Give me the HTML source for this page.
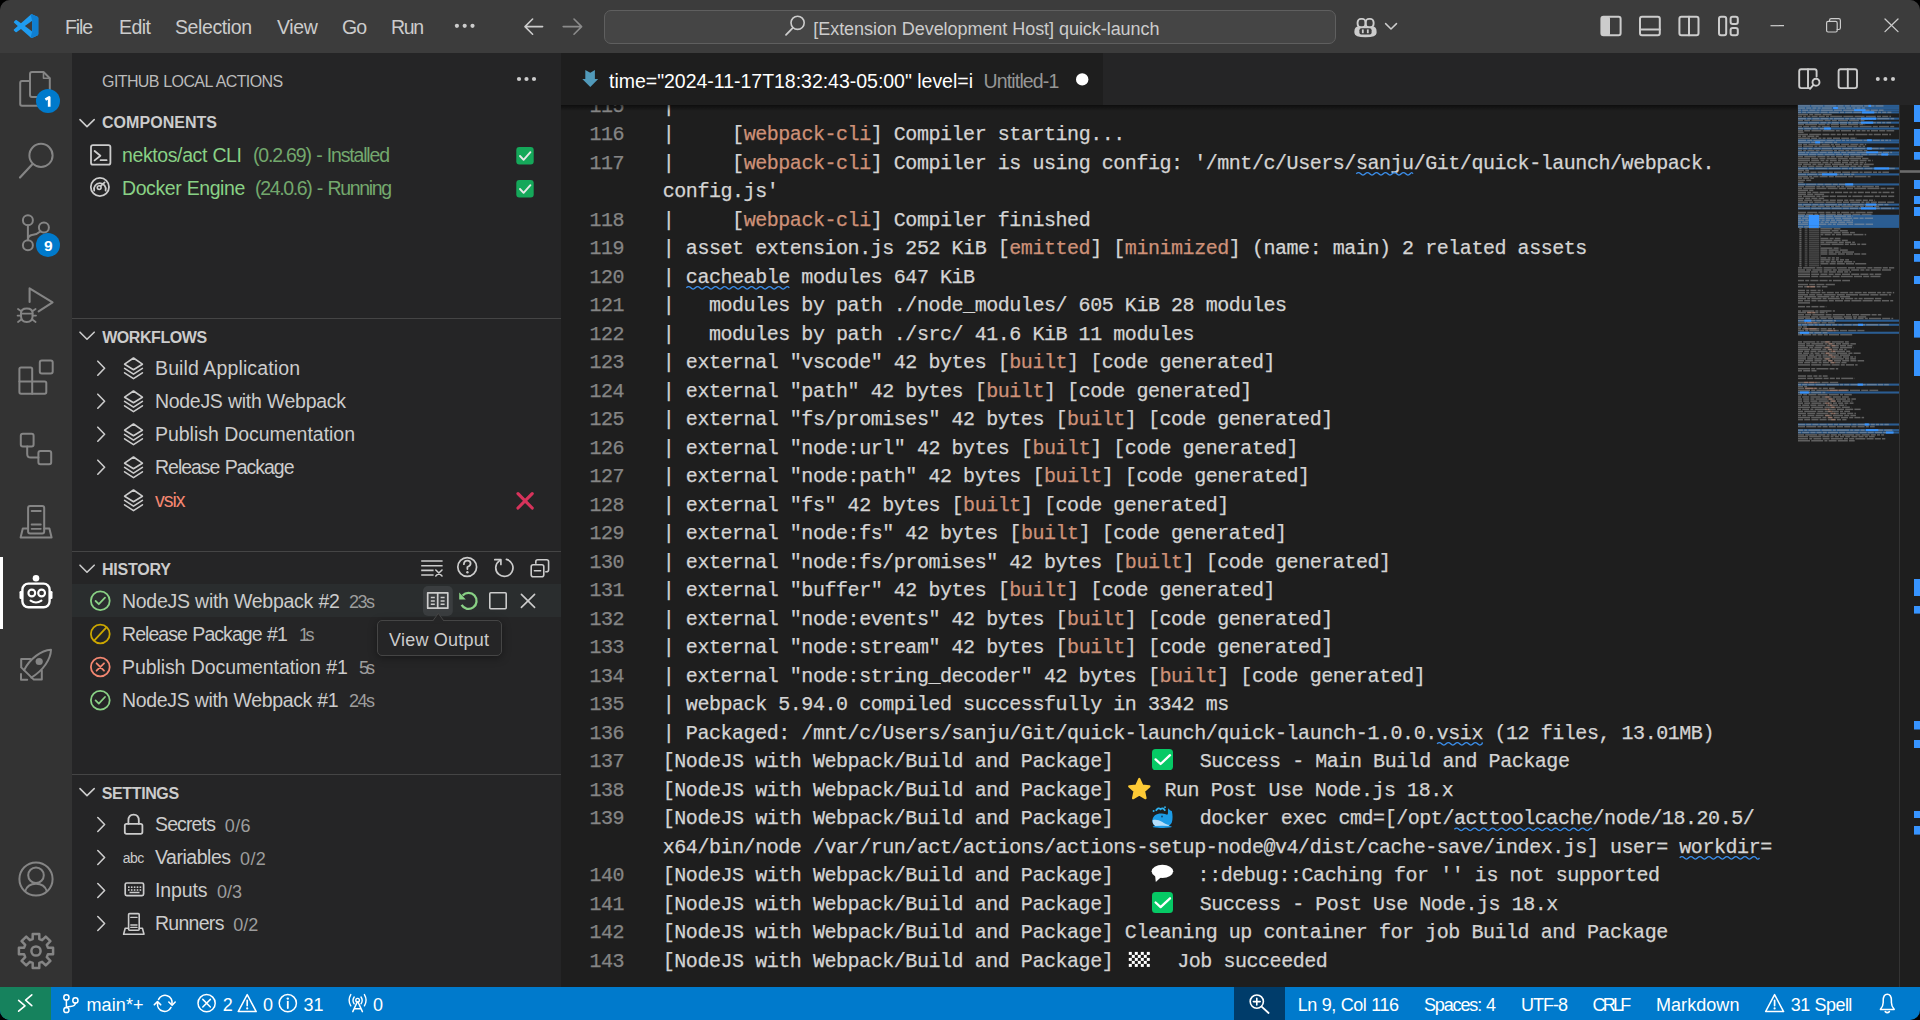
<!DOCTYPE html>
<html><head><meta charset="utf-8"><title>VS Code</title>
<style>
html,body{margin:0;padding:0;background:#000;width:1920px;height:1020px;overflow:hidden}
#win{position:absolute;left:0;top:0;width:1920px;height:1020px;overflow:hidden;border-radius:10px;background:#1e1e1e}
.r{position:absolute;box-sizing:border-box}
.t{position:absolute;white-space:pre;font-family:"Liberation Sans",sans-serif}
.ed{position:absolute;left:561px;top:105px;width:1236px;height:882px;overflow:hidden}
.ln{position:absolute;white-space:pre;font-family:"Liberation Mono",monospace;-webkit-text-stroke:0.25px currentColor}
.o{color:#ce9178}
.sq{text-decoration:underline wavy #3794ff;text-decoration-thickness:1px;text-underline-offset:3px}
svg{position:absolute;overflow:visible}
</style></head><body><div id="win">
<div class="r" style="left:0;top:0;width:1920px;height:53px;background:#3c3c3c"></div>
<div class="r" style="left:0;top:53px;width:72px;height:934px;background:#333333"></div>
<div class="r" style="left:72px;top:53px;width:489px;height:934px;background:#252526"></div>
<div class="r" style="left:561px;top:53px;width:1359px;height:52px;background:#252526"></div>
<div class="r" style="left:561px;top:53px;width:542px;height:52px;background:#1e1e1e"></div>
<div class="r" style="left:561px;top:105px;width:1359px;height:882px;background:#1e1e1e"></div>
<div class="r" style="left:0;top:987px;width:1920px;height:33px;background:#007acc"></div>
<div class="r" style="left:0;top:987px;width:51px;height:33px;background:#16825d"></div>
<div class="r" style="left:1234px;top:987px;width:51px;height:33px;background:#003c6a"></div>
<div class="t" style="left:65.00px;top:18.49px;font-size:19.50px;line-height:19.50px;color:#cccccc;letter-spacing:-1.148px;word-spacing:0.000px;">File</div>
<div class="t" style="left:119.00px;top:18.49px;font-size:19.50px;line-height:19.50px;color:#cccccc;letter-spacing:-0.530px;word-spacing:0.000px;">Edit</div>
<div class="t" style="left:175.00px;top:18.49px;font-size:19.50px;line-height:19.50px;color:#cccccc;letter-spacing:-0.405px;word-spacing:0.000px;">Selection</div>
<div class="t" style="left:277.00px;top:18.49px;font-size:19.50px;line-height:19.50px;color:#cccccc;letter-spacing:-0.325px;word-spacing:0.000px;">View</div>
<div class="t" style="left:342.00px;top:18.49px;font-size:19.50px;line-height:19.50px;color:#cccccc;letter-spacing:-1.032px;word-spacing:0.000px;">Go</div>
<div class="t" style="left:391.00px;top:18.49px;font-size:19.50px;line-height:19.50px;color:#cccccc;letter-spacing:-1.391px;word-spacing:0.000px;">Run</div>
<div class="r" style="left:604px;top:9.5px;width:732px;height:34px;background:#454545;border:1px solid #5f5f5f;border-radius:7px"></div>
<div class="t" style="left:813.30px;top:19.66px;font-size:18.00px;line-height:18.00px;color:#cccccc;letter-spacing:-0.054px;word-spacing:0.054px;">[Extension Development Host] quick-launch</div>
<div class="t" style="left:102.10px;top:73.85px;font-size:16.00px;line-height:16.00px;color:#bbbbbb;letter-spacing:-0.614px;word-spacing:0.614px;">GITHUB LOCAL ACTIONS</div>
<div class="t" style="left:102.00px;top:115.35px;font-size:16.00px;line-height:16.00px;color:#cccccc;letter-spacing:0.036px;word-spacing:0.000px;font-weight:700;">COMPONENTS</div>
<div class="t" style="left:122.00px;top:145.69px;font-size:19.50px;line-height:19.50px;color:#89d185;letter-spacing:-0.388px;word-spacing:0.388px;">nektos/act CLI</div>
<div class="t" style="left:253.00px;top:145.69px;font-size:19.50px;line-height:19.50px;color:#73a86d;letter-spacing:-1.186px;word-spacing:1.186px;">(0.2.69) - Installed</div>
<div class="t" style="left:122.00px;top:179.39px;font-size:19.50px;line-height:19.50px;color:#89d185;letter-spacing:-0.420px;word-spacing:0.420px;">Docker Engine</div>
<div class="t" style="left:255.00px;top:179.39px;font-size:19.50px;line-height:19.50px;color:#73a86d;letter-spacing:-1.345px;word-spacing:1.345px;">(24.0.6) - Running</div>
<div class="r" style="left:72px;top:318px;width:489px;height:1px;background:#454545"></div>
<div class="t" style="left:102.20px;top:329.85px;font-size:16.00px;line-height:16.00px;color:#cccccc;letter-spacing:-0.430px;word-spacing:0.000px;font-weight:700;">WORKFLOWS</div>
<div class="t" style="left:155.00px;top:358.89px;font-size:19.50px;line-height:19.50px;color:#cccccc;letter-spacing:0.128px;word-spacing:-0.128px;">Build Application</div>
<div class="t" style="left:155.00px;top:391.89px;font-size:19.50px;line-height:19.50px;color:#cccccc;letter-spacing:-0.305px;word-spacing:0.305px;">NodeJS with Webpack</div>
<div class="t" style="left:155.00px;top:424.89px;font-size:19.50px;line-height:19.50px;color:#cccccc;letter-spacing:-0.029px;word-spacing:0.029px;">Publish Documentation</div>
<div class="t" style="left:155.00px;top:457.89px;font-size:19.50px;line-height:19.50px;color:#cccccc;letter-spacing:-1.025px;word-spacing:1.025px;">Release Package</div>
<div class="t" style="left:155.00px;top:490.89px;font-size:19.50px;line-height:19.50px;color:#f48771;letter-spacing:-0.996px;word-spacing:0.000px;">vsix</div>
<div class="r" style="left:72px;top:551px;width:489px;height:1px;background:#454545"></div>
<div class="t" style="left:102.00px;top:562.05px;font-size:16.00px;line-height:16.00px;color:#cccccc;letter-spacing:-0.207px;word-spacing:0.000px;font-weight:700;">HISTORY</div>
<div class="r" style="left:72px;top:584px;width:489px;height:33px;background:#2a2d2e"></div>
<div class="t" style="left:122.00px;top:591.89px;font-size:19.50px;line-height:19.50px;color:#cccccc;letter-spacing:-0.285px;word-spacing:0.285px;">NodeJS with Webpack #2</div>
<div class="t" style="left:349.00px;top:593.16px;font-size:18.00px;line-height:18.00px;color:#9d9d9d;letter-spacing:-1.513px;word-spacing:0.000px;">23s</div>
<div class="t" style="left:122.00px;top:624.89px;font-size:19.50px;line-height:19.50px;color:#cccccc;letter-spacing:-0.946px;word-spacing:0.946px;">Release Package #1</div>
<div class="t" style="left:299.00px;top:626.16px;font-size:18.00px;line-height:18.00px;color:#9d9d9d;letter-spacing:-3.490px;word-spacing:0.000px;">1s</div>
<div class="t" style="left:122.00px;top:657.89px;font-size:19.50px;line-height:19.50px;color:#cccccc;letter-spacing:-0.089px;word-spacing:0.089px;">Publish Documentation #1</div>
<div class="t" style="left:359.00px;top:659.16px;font-size:18.00px;line-height:18.00px;color:#9d9d9d;letter-spacing:-2.990px;word-spacing:0.000px;">5s</div>
<div class="t" style="left:122.00px;top:690.89px;font-size:19.50px;line-height:19.50px;color:#cccccc;letter-spacing:-0.346px;word-spacing:0.346px;">NodeJS with Webpack #1</div>
<div class="t" style="left:349.00px;top:692.16px;font-size:18.00px;line-height:18.00px;color:#9d9d9d;letter-spacing:-1.513px;word-spacing:0.000px;">24s</div>
<div class="r" style="left:72px;top:774px;width:489px;height:1px;background:#454545"></div>
<div class="t" style="left:101.80px;top:785.85px;font-size:16.00px;line-height:16.00px;color:#cccccc;letter-spacing:-0.386px;word-spacing:0.000px;font-weight:700;">SETTINGS</div>
<div class="t" style="left:155.00px;top:815.29px;font-size:19.50px;line-height:19.50px;color:#cccccc;letter-spacing:-0.868px;word-spacing:0.000px;">Secrets</div>
<div class="t" style="left:224.80px;top:816.56px;font-size:18.00px;line-height:18.00px;color:#9d9d9d;letter-spacing:0.340px;word-spacing:0.000px;">0/6</div>
<div class="t" style="left:155.00px;top:848.29px;font-size:19.50px;line-height:19.50px;color:#cccccc;letter-spacing:-0.482px;word-spacing:0.000px;">Variables</div>
<div class="t" style="left:240.00px;top:849.56px;font-size:18.00px;line-height:18.00px;color:#9d9d9d;letter-spacing:0.390px;word-spacing:0.000px;">0/2</div>
<div class="t" style="left:155.00px;top:881.29px;font-size:19.50px;line-height:19.50px;color:#cccccc;letter-spacing:-0.108px;word-spacing:0.000px;">Inputs</div>
<div class="t" style="left:217.00px;top:882.56px;font-size:18.00px;line-height:18.00px;color:#9d9d9d;letter-spacing:-0.010px;word-spacing:0.000px;">0/3</div>
<div class="t" style="left:155.00px;top:914.29px;font-size:19.50px;line-height:19.50px;color:#cccccc;letter-spacing:-0.718px;word-spacing:0.000px;">Runners</div>
<div class="t" style="left:233.20px;top:915.56px;font-size:18.00px;line-height:18.00px;color:#9d9d9d;letter-spacing:0.040px;word-spacing:0.000px;">0/2</div>
<div class="t" style="left:122.70px;top:851.05px;font-size:14.00px;line-height:14.00px;color:#cccccc;letter-spacing:-0.487px;word-spacing:0.000px;">abc</div>
<div class="t" style="left:609.00px;top:71.69px;font-size:19.50px;line-height:19.50px;color:#ffffff;letter-spacing:-0.020px;word-spacing:0.020px;">time=&quot;2024-11-17T18:32:43-05:00&quot; level=i</div>
<div class="t" style="left:983.60px;top:71.69px;font-size:19.50px;line-height:19.50px;color:#969696;letter-spacing:-0.862px;word-spacing:0.000px;">Untitled-1</div>
<div class="t" style="left:86.50px;top:995.56px;font-size:18.00px;line-height:18.00px;color:#ffffff;letter-spacing:0.096px;word-spacing:0.000px;">main*+</div>
<div class="t" style="left:222.80px;top:995.56px;font-size:18.00px;line-height:18.00px;color:#ffffff;letter-spacing:0.000px;word-spacing:0.000px;">2</div>
<div class="t" style="left:263.00px;top:995.56px;font-size:18.00px;line-height:18.00px;color:#ffffff;letter-spacing:0.000px;word-spacing:0.000px;">0</div>
<div class="t" style="left:303.60px;top:995.56px;font-size:18.00px;line-height:18.00px;color:#ffffff;letter-spacing:0.000px;word-spacing:0.000px;">31</div>
<div class="t" style="left:373.00px;top:995.56px;font-size:18.00px;line-height:18.00px;color:#ffffff;letter-spacing:0.000px;word-spacing:0.000px;">0</div>
<div class="t" style="left:1297.80px;top:995.56px;font-size:18.00px;line-height:18.00px;color:#ffffff;letter-spacing:-0.506px;word-spacing:0.506px;">Ln 9, Col 116</div>
<div class="t" style="left:1424.00px;top:995.56px;font-size:18.00px;line-height:18.00px;color:#ffffff;letter-spacing:-1.151px;word-spacing:1.151px;">Spaces: 4</div>
<div class="t" style="left:1521.00px;top:995.56px;font-size:18.00px;line-height:18.00px;color:#ffffff;letter-spacing:-0.996px;word-spacing:0.000px;">UTF-8</div>
<div class="t" style="left:1592.40px;top:995.56px;font-size:18.00px;line-height:18.00px;color:#ffffff;letter-spacing:-2.675px;word-spacing:0.000px;">CRLF</div>
<div class="t" style="left:1656.00px;top:995.56px;font-size:18.00px;line-height:18.00px;color:#ffffff;letter-spacing:0.054px;word-spacing:0.000px;">Markdown</div>
<div class="t" style="left:1790.70px;top:995.56px;font-size:18.00px;line-height:18.00px;color:#ffffff;letter-spacing:-0.562px;word-spacing:0.562px;">31 Spell</div>
<div class="ed"><div class="ln" style="left:28.50px;top:-12.17px;font-size:20.0px;line-height:28.5px;letter-spacing:-0.450px;color:#858585">115</div>
<div class="ln" style="left:101.75px;top:-12.17px;font-size:20.0px;line-height:28.5px;letter-spacing:-0.450px;color:#d4d4d4">|</div>
<div class="ln" style="left:28.50px;top:16.33px;font-size:20.0px;line-height:28.5px;letter-spacing:-0.450px;color:#858585">116</div>
<div class="ln" style="left:101.75px;top:16.33px;font-size:20.0px;line-height:28.5px;letter-spacing:-0.450px;color:#d4d4d4">|     [<span class="o">webpack-cli</span>] Compiler starting...</div>
<div class="ln" style="left:28.50px;top:44.83px;font-size:20.0px;line-height:28.5px;letter-spacing:-0.450px;color:#858585">117</div>
<div class="ln" style="left:101.75px;top:44.83px;font-size:20.0px;line-height:28.5px;letter-spacing:-0.450px;color:#d4d4d4">|     [<span class="o">webpack-cli</span>] Compiler is using config: &#x27;/mnt/c/Users/sanju/Git/quick-launch/webpack.</div>
<div class="ln" style="left:101.75px;top:73.33px;font-size:20.0px;line-height:28.5px;letter-spacing:-0.450px;color:#d4d4d4">config.js&#x27;</div>
<div class="ln" style="left:28.50px;top:101.83px;font-size:20.0px;line-height:28.5px;letter-spacing:-0.450px;color:#858585">118</div>
<div class="ln" style="left:101.75px;top:101.83px;font-size:20.0px;line-height:28.5px;letter-spacing:-0.450px;color:#d4d4d4">|     [<span class="o">webpack-cli</span>] Compiler finished</div>
<div class="ln" style="left:28.50px;top:130.33px;font-size:20.0px;line-height:28.5px;letter-spacing:-0.450px;color:#858585">119</div>
<div class="ln" style="left:101.75px;top:130.33px;font-size:20.0px;line-height:28.5px;letter-spacing:-0.450px;color:#d4d4d4">| asset extension.js 252 KiB [<span class="o">emitted</span>] [<span class="o">minimized</span>] (name: main) 2 related assets</div>
<div class="ln" style="left:28.50px;top:158.83px;font-size:20.0px;line-height:28.5px;letter-spacing:-0.450px;color:#858585">120</div>
<div class="ln" style="left:101.75px;top:158.83px;font-size:20.0px;line-height:28.5px;letter-spacing:-0.450px;color:#d4d4d4">| cacheable modules 647 KiB</div>
<div class="ln" style="left:28.50px;top:187.33px;font-size:20.0px;line-height:28.5px;letter-spacing:-0.450px;color:#858585">121</div>
<div class="ln" style="left:101.75px;top:187.33px;font-size:20.0px;line-height:28.5px;letter-spacing:-0.450px;color:#d4d4d4">|   modules by path ./node_modules/ 605 KiB 28 modules</div>
<div class="ln" style="left:28.50px;top:215.83px;font-size:20.0px;line-height:28.5px;letter-spacing:-0.450px;color:#858585">122</div>
<div class="ln" style="left:101.75px;top:215.83px;font-size:20.0px;line-height:28.5px;letter-spacing:-0.450px;color:#d4d4d4">|   modules by path ./src/ 41.6 KiB 11 modules</div>
<div class="ln" style="left:28.50px;top:244.33px;font-size:20.0px;line-height:28.5px;letter-spacing:-0.450px;color:#858585">123</div>
<div class="ln" style="left:101.75px;top:244.33px;font-size:20.0px;line-height:28.5px;letter-spacing:-0.450px;color:#d4d4d4">| external &quot;vscode&quot; 42 bytes [<span class="o">built</span>] [code generated]</div>
<div class="ln" style="left:28.50px;top:272.83px;font-size:20.0px;line-height:28.5px;letter-spacing:-0.450px;color:#858585">124</div>
<div class="ln" style="left:101.75px;top:272.83px;font-size:20.0px;line-height:28.5px;letter-spacing:-0.450px;color:#d4d4d4">| external &quot;path&quot; 42 bytes [<span class="o">built</span>] [code generated]</div>
<div class="ln" style="left:28.50px;top:301.33px;font-size:20.0px;line-height:28.5px;letter-spacing:-0.450px;color:#858585">125</div>
<div class="ln" style="left:101.75px;top:301.33px;font-size:20.0px;line-height:28.5px;letter-spacing:-0.450px;color:#d4d4d4">| external &quot;fs/promises&quot; 42 bytes [<span class="o">built</span>] [code generated]</div>
<div class="ln" style="left:28.50px;top:329.83px;font-size:20.0px;line-height:28.5px;letter-spacing:-0.450px;color:#858585">126</div>
<div class="ln" style="left:101.75px;top:329.83px;font-size:20.0px;line-height:28.5px;letter-spacing:-0.450px;color:#d4d4d4">| external &quot;node:url&quot; 42 bytes [<span class="o">built</span>] [code generated]</div>
<div class="ln" style="left:28.50px;top:358.33px;font-size:20.0px;line-height:28.5px;letter-spacing:-0.450px;color:#858585">127</div>
<div class="ln" style="left:101.75px;top:358.33px;font-size:20.0px;line-height:28.5px;letter-spacing:-0.450px;color:#d4d4d4">| external &quot;node:path&quot; 42 bytes [<span class="o">built</span>] [code generated]</div>
<div class="ln" style="left:28.50px;top:386.83px;font-size:20.0px;line-height:28.5px;letter-spacing:-0.450px;color:#858585">128</div>
<div class="ln" style="left:101.75px;top:386.83px;font-size:20.0px;line-height:28.5px;letter-spacing:-0.450px;color:#d4d4d4">| external &quot;fs&quot; 42 bytes [<span class="o">built</span>] [code generated]</div>
<div class="ln" style="left:28.50px;top:415.33px;font-size:20.0px;line-height:28.5px;letter-spacing:-0.450px;color:#858585">129</div>
<div class="ln" style="left:101.75px;top:415.33px;font-size:20.0px;line-height:28.5px;letter-spacing:-0.450px;color:#d4d4d4">| external &quot;node:fs&quot; 42 bytes [<span class="o">built</span>] [code generated]</div>
<div class="ln" style="left:28.50px;top:443.83px;font-size:20.0px;line-height:28.5px;letter-spacing:-0.450px;color:#858585">130</div>
<div class="ln" style="left:101.75px;top:443.83px;font-size:20.0px;line-height:28.5px;letter-spacing:-0.450px;color:#d4d4d4">| external &quot;node:fs/promises&quot; 42 bytes [<span class="o">built</span>] [code generated]</div>
<div class="ln" style="left:28.50px;top:472.33px;font-size:20.0px;line-height:28.5px;letter-spacing:-0.450px;color:#858585">131</div>
<div class="ln" style="left:101.75px;top:472.33px;font-size:20.0px;line-height:28.5px;letter-spacing:-0.450px;color:#d4d4d4">| external &quot;buffer&quot; 42 bytes [<span class="o">built</span>] [code generated]</div>
<div class="ln" style="left:28.50px;top:500.83px;font-size:20.0px;line-height:28.5px;letter-spacing:-0.450px;color:#858585">132</div>
<div class="ln" style="left:101.75px;top:500.83px;font-size:20.0px;line-height:28.5px;letter-spacing:-0.450px;color:#d4d4d4">| external &quot;node:events&quot; 42 bytes [<span class="o">built</span>] [code generated]</div>
<div class="ln" style="left:28.50px;top:529.33px;font-size:20.0px;line-height:28.5px;letter-spacing:-0.450px;color:#858585">133</div>
<div class="ln" style="left:101.75px;top:529.33px;font-size:20.0px;line-height:28.5px;letter-spacing:-0.450px;color:#d4d4d4">| external &quot;node:stream&quot; 42 bytes [<span class="o">built</span>] [code generated]</div>
<div class="ln" style="left:28.50px;top:557.83px;font-size:20.0px;line-height:28.5px;letter-spacing:-0.450px;color:#858585">134</div>
<div class="ln" style="left:101.75px;top:557.83px;font-size:20.0px;line-height:28.5px;letter-spacing:-0.450px;color:#d4d4d4">| external &quot;node:string_decoder&quot; 42 bytes [<span class="o">built</span>] [code generated]</div>
<div class="ln" style="left:28.50px;top:586.33px;font-size:20.0px;line-height:28.5px;letter-spacing:-0.450px;color:#858585">135</div>
<div class="ln" style="left:101.75px;top:586.33px;font-size:20.0px;line-height:28.5px;letter-spacing:-0.450px;color:#d4d4d4">| webpack 5.94.0 compiled successfully in 3342 ms</div>
<div class="ln" style="left:28.50px;top:614.83px;font-size:20.0px;line-height:28.5px;letter-spacing:-0.450px;color:#858585">136</div>
<div class="ln" style="left:101.75px;top:614.83px;font-size:20.0px;line-height:28.5px;letter-spacing:-0.450px;color:#d4d4d4">| Packaged: /mnt/c/Users/sanju/Git/quick-launch/quick-launch-1.0.0.vsix (12 files, 13.01MB)</div>
<div class="ln" style="left:28.50px;top:643.33px;font-size:20.0px;line-height:28.5px;letter-spacing:-0.450px;color:#858585">137</div>
<div class="ln" style="left:101.75px;top:643.33px;font-size:20.0px;line-height:28.5px;letter-spacing:-0.450px;color:#d4d4d4">[NodeJS with Webpack/Build and Package]</div>
<div class="ln" style="left:28.50px;top:671.83px;font-size:20.0px;line-height:28.5px;letter-spacing:-0.450px;color:#858585">138</div>
<div class="ln" style="left:101.75px;top:671.83px;font-size:20.0px;line-height:28.5px;letter-spacing:-0.450px;color:#d4d4d4">[NodeJS with Webpack/Build and Package]</div>
<div class="ln" style="left:28.50px;top:700.33px;font-size:20.0px;line-height:28.5px;letter-spacing:-0.450px;color:#858585">139</div>
<div class="ln" style="left:101.75px;top:700.33px;font-size:20.0px;line-height:28.5px;letter-spacing:-0.450px;color:#d4d4d4">[NodeJS with Webpack/Build and Package]</div>
<div class="ln" style="left:101.75px;top:728.83px;font-size:20.0px;line-height:28.5px;letter-spacing:-0.450px;color:#d4d4d4">x64/bin/node /var/run/act/actions/actions-setup-node@v4/dist/cache-save/index.js] user= workdir=</div>
<div class="ln" style="left:28.50px;top:757.33px;font-size:20.0px;line-height:28.5px;letter-spacing:-0.450px;color:#858585">140</div>
<div class="ln" style="left:101.75px;top:757.33px;font-size:20.0px;line-height:28.5px;letter-spacing:-0.450px;color:#d4d4d4">[NodeJS with Webpack/Build and Package]</div>
<div class="ln" style="left:28.50px;top:785.83px;font-size:20.0px;line-height:28.5px;letter-spacing:-0.450px;color:#858585">141</div>
<div class="ln" style="left:101.75px;top:785.83px;font-size:20.0px;line-height:28.5px;letter-spacing:-0.450px;color:#d4d4d4">[NodeJS with Webpack/Build and Package]</div>
<div class="ln" style="left:28.50px;top:814.33px;font-size:20.0px;line-height:28.5px;letter-spacing:-0.450px;color:#858585">142</div>
<div class="ln" style="left:101.75px;top:814.33px;font-size:20.0px;line-height:28.5px;letter-spacing:-0.450px;color:#d4d4d4">[NodeJS with Webpack/Build and Package] Cleaning up container for job Build and Package</div>
<div class="ln" style="left:28.50px;top:842.83px;font-size:20.0px;line-height:28.5px;letter-spacing:-0.450px;color:#858585">143</div>
<div class="ln" style="left:101.75px;top:842.83px;font-size:20.0px;line-height:28.5px;letter-spacing:-0.450px;color:#d4d4d4">[NodeJS with Webpack/Build and Package]</div>
<div class="ln" style="left:638.80px;top:643.33px;font-size:20.0px;line-height:28.5px;letter-spacing:-0.450px;color:#d4d4d4">Success - Main Build and Package</div>
<div class="ln" style="left:603.50px;top:671.83px;font-size:20.0px;line-height:28.5px;letter-spacing:-0.450px;color:#d4d4d4">Run Post Use Node.js 18.x</div>
<div class="ln" style="left:638.80px;top:700.33px;font-size:20.0px;line-height:28.5px;letter-spacing:-0.450px;color:#d4d4d4">docker exec cmd=[/opt/acttoolcache/node/18.20.5/</div>
<div class="ln" style="left:636.60px;top:757.33px;font-size:20.0px;line-height:28.5px;letter-spacing:-0.450px;color:#d4d4d4">::debug::Caching for &#x27;&#x27; is not supported</div>
<div class="ln" style="left:638.80px;top:785.83px;font-size:20.0px;line-height:28.5px;letter-spacing:-0.450px;color:#d4d4d4">Success - Post Use Node.js 18.x</div>
<div class="ln" style="left:616.20px;top:842.83px;font-size:20.0px;line-height:28.5px;letter-spacing:-0.450px;color:#d4d4d4">Job succeeded</div></div>
<div class="r" style="left:561px;top:105px;width:1236px;height:6px;background:linear-gradient(#000000 0%,rgba(0,0,0,0) 100%);opacity:.55"></div>
<svg class="r" style="left:0;top:0" width="1920" height="1020" viewBox="0 0 1920 1020"><path d="M30,81 H22 Q20.2,81 20.2,83 V104 Q20.2,105.8 22,105.8 H40" fill="none" stroke="#858585" stroke-width="2.00" stroke-linecap="round" stroke-linejoin="round" />
<path d="M32,72 H43.5 L49.8,78.3 V95 Q49.8,97 48,97 H32 Q30,97 30,95 V74 Q30,72 32,72 Z" fill="none" stroke="#858585" stroke-width="2.00" stroke-linecap="round" stroke-linejoin="round" />
<path d="M43.5,72.5 V78.3 H49.5" fill="none" stroke="#858585" stroke-width="1.60" stroke-linecap="round" stroke-linejoin="round" />
<circle cx="48.00" cy="101.00" r="12.00" fill="#007acc"/>
<path d="M45.4,99.6 L49.2,97.4 V106.8" fill="none" stroke="#ffffff" stroke-width="2.70" stroke-linejoin="round" stroke-linecap="butt"/>
<circle cx="41.00" cy="155.40" r="11.60" fill="none" stroke="#858585" stroke-width="2.00"/>
<path d="M32.8,163.8 L20,177.5" fill="none" stroke="#858585" stroke-width="2.20" stroke-linecap="round" stroke-linejoin="round" />
<circle cx="27.90" cy="220.30" r="5.00" fill="none" stroke="#858585" stroke-width="2.00"/>
<circle cx="43.90" cy="227.40" r="5.00" fill="none" stroke="#858585" stroke-width="2.00"/>
<circle cx="27.90" cy="245.20" r="5.00" fill="none" stroke="#858585" stroke-width="2.00"/>
<path d="M27.9,225.3 V240.2" fill="none" stroke="#858585" stroke-width="2.00" stroke-linecap="round" stroke-linejoin="round" />
<path d="M40.6,231.2 Q37,234.5 32,235 Q28.2,235.6 27.9,239.5" fill="none" stroke="#858585" stroke-width="2.00" stroke-linecap="round" stroke-linejoin="round" />
<circle cx="48.00" cy="245.00" r="12.00" fill="#007acc"/>
<text x="48.20" y="250.60" font-family="Liberation Sans, sans-serif" font-size="15.5" font-weight="700" fill="#ffffff" text-anchor="middle">9</text>
<path d="M29.6,302 V288.3 L52.6,302.3 L38.6,311.3" fill="none" stroke="#858585" stroke-width="2.10" stroke-linecap="round" stroke-linejoin="round" />
<path d="M21,313 Q21,308.5 26.8,308.5 Q32.6,308.5 32.6,313 V316 Q32.6,322 26.8,322 Q21,322 21,316 Z" fill="none" stroke="#858585" stroke-width="2.00" stroke-linecap="round" stroke-linejoin="round" />
<path d="M21,313.6 H32.6" fill="none" stroke="#858585" stroke-width="1.60" stroke-linecap="round" stroke-linejoin="round" />
<path d="M18,309 L21.3,311.3 M17.6,315.6 H21 M18,322 L21.3,319.6 M35.6,309 L32.3,311.3 M36,315.6 H32.6 M35.6,322 L32.3,319.6" fill="none" stroke="#858585" stroke-width="1.80" stroke-linecap="round" stroke-linejoin="round" />
<rect x="39.80" y="360.40" width="12.90" height="13.20" rx="2.00" fill="none" stroke="#858585" stroke-width="2.00"/>
<path d="M19.4,369 Q19.4,367.4 21,367.4 H30.6 Q32.2,367.4 32.2,369 V381.5 H44.7 Q46.3,381.5 46.3,383.1 V392.1 Q46.3,393.7 44.7,393.7 H21 Q19.4,393.7 19.4,392.1 Z" fill="none" stroke="#858585" stroke-width="2.00" stroke-linecap="round" stroke-linejoin="round" />
<path d="M19.4,381.5 H32.2 V393.7" fill="none" stroke="#858585" stroke-width="2.00" stroke-linecap="round" stroke-linejoin="round" />
<rect x="20.80" y="433.80" width="12.80" height="12.80" rx="2.00" fill="none" stroke="#858585" stroke-width="2.00"/>
<rect x="38.40" y="451.00" width="12.80" height="13.30" rx="2.00" fill="none" stroke="#858585" stroke-width="2.00"/>
<path d="M27.2,446.6 V454 Q27.2,457.6 30.8,457.6 H38.4" fill="none" stroke="#858585" stroke-width="2.00" stroke-linecap="round" stroke-linejoin="round" />
<rect x="28.10" y="506.00" width="16.10" height="27.40" rx="2.00" fill="none" stroke="#858585" stroke-width="2.00"/>
<path d="M31.6,511 H40.8 M31.6,524.5 H40.8 M31.6,528.8 H40.8" fill="none" stroke="#858585" stroke-width="1.80" stroke-linecap="round" stroke-linejoin="round" />
<path d="M28,528.5 H22.8 L20.6,537.6 H51.6 L49.4,528.5 H44.2" fill="none" stroke="#858585" stroke-width="2.00" stroke-linecap="round" stroke-linejoin="round" />
<rect x="0" y="557" width="3" height="72" fill="#ffffff"/>
<rect x="22.40" y="583.60" width="27.20" height="23.70" rx="6.00" fill="none" stroke="#ffffff" stroke-width="2.40"/>
<circle cx="36.00" cy="578.30" r="3.30" fill="#ffffff"/>
<rect x="19.50" y="591.00" width="3.00" height="8.00" rx="1.20" fill="#ffffff"/>
<rect x="49.50" y="591.00" width="3.00" height="8.00" rx="1.20" fill="#ffffff"/>
<circle cx="31.80" cy="593.00" r="3.40" fill="none" stroke="#ffffff" stroke-width="2.10"/>
<circle cx="41.60" cy="593.00" r="3.40" fill="none" stroke="#ffffff" stroke-width="2.10"/>
<path d="M30.6,600.6 Q36,604.4 41.4,600.6" fill="none" stroke="#ffffff" stroke-width="2.20" stroke-linecap="round" stroke-linejoin="round" />
<path d="M24,670.2 C30,658.5 41,650.4 51,649.8 C50.6,659.5 43.5,670 31.4,677.6" fill="none" stroke="#858585" stroke-width="2.00" stroke-linecap="round" stroke-linejoin="round" />
<path d="M30.6,659 H21.2 V667.4 L33.8,679.6 H41.8 V670.6" fill="none" stroke="#858585" stroke-width="2.00" stroke-linecap="round" stroke-linejoin="round" />
<path d="M21,674 V679.8 H27.2" fill="none" stroke="#858585" stroke-width="2.00" stroke-linecap="round" stroke-linejoin="round" />
<circle cx="39.20" cy="661.50" r="3.60" fill="#858585"/>
<circle cx="36.00" cy="879.00" r="16.60" fill="none" stroke="#858585" stroke-width="2.00"/>
<circle cx="36.00" cy="875.30" r="7.80" fill="none" stroke="#858585" stroke-width="2.00"/>
<path d="M25.2,891.2 Q27.5,883.8 36,883.8 Q44.5,883.8 46.8,891.2" fill="none" stroke="#858585" stroke-width="2.00" stroke-linecap="round" stroke-linejoin="round" />
<path d="M32.69,939.05 L32.71,933.91 L39.29,933.91 L39.31,939.05 L42.11,940.21 L45.76,936.59 L50.41,941.24 L46.79,944.89 L47.95,947.69 L53.09,947.71 L53.09,954.29 L47.95,954.31 L46.79,957.11 L50.41,960.76 L45.76,965.41 L42.11,961.79 L39.31,962.95 L39.29,968.09 L32.71,968.09 L32.69,962.95 L29.89,961.79 L26.24,965.41 L21.59,960.76 L25.21,957.11 L24.05,954.31 L18.91,954.29 L18.91,947.71 L24.05,947.69 L25.21,944.89 L21.59,941.24 L26.24,936.59 L29.89,940.21 Z" fill="none" stroke="#858585" stroke-width="2.50" stroke-linecap="round" stroke-linejoin="round" />
<circle cx="36.00" cy="951.00" r="4.60" fill="none" stroke="#858585" stroke-width="2.50"/>
<g transform="translate(13.8,14.2) scale(0.245,0.238)"><path d="M96.46,10.8 L75.86,0.87 C73.48,-0.28 70.63,0.2 68.76,2.07 L29.33,38.04 L12.15,25 C10.55,23.79 8.31,23.89 6.83,25.24 L1.36,30.2 C-0.45,31.85 -0.45,34.7 1.36,36.36 L16.26,50 L1.36,63.64 C-0.45,65.3 -0.45,68.15 1.36,69.8 L6.83,74.77 C8.31,76.11 10.55,76.21 12.15,75 L29.33,62 L68.76,97.93 C70.63,99.8 73.48,100.28 75.86,99.13 L96.46,89.2 C98.62,88.16 100,85.97 100,83.57 V16.43 C100,14.03 98.62,11.84 96.46,10.8 Z M75.02,72.7 L45.11,50 L75.02,27.3 Z" fill="#1f9cf0"/><path d="M96.46,10.8 L75.86,0.87 C73.48,-0.28 70.63,0.2 68.76,2.07 L75.02,27.3 V72.7 L68.76,97.93 C70.63,99.8 73.48,100.28 75.86,99.13 L96.46,89.2 C98.62,88.16 100,85.97 100,83.57 V16.43 C100,14.03 98.62,11.84 96.46,10.8 Z" fill="#0f7fd2"/></g>
<circle cx="456.90" cy="25.80" r="2.10" fill="#cccccc"/>
<circle cx="464.70" cy="25.80" r="2.10" fill="#cccccc"/>
<circle cx="472.50" cy="25.80" r="2.10" fill="#cccccc"/>
<path d="M542.6,26.6 H525 M532.6,19 L525,26.6 L532.6,34.2" fill="none" stroke="#cccccc" stroke-width="1.60" stroke-linecap="round" stroke-linejoin="round" />
<path d="M563.2,26.6 H581.6 M574,19 L581.6,26.6 L574,34.2" fill="none" stroke="#8b8b8b" stroke-width="1.60" stroke-linecap="round" stroke-linejoin="round" />
<circle cx="797.60" cy="22.80" r="6.60" fill="none" stroke="#cccccc" stroke-width="1.60"/>
<path d="M792.8,27.8 L786,34.8" fill="none" stroke="#cccccc" stroke-width="1.80" stroke-linecap="round" stroke-linejoin="round" />
<rect x="1357.60" y="18.90" width="8.00" height="8.60" rx="3.40" fill="none" stroke="#cccccc" stroke-width="1.90"/>
<rect x="1365.60" y="18.90" width="8.00" height="8.60" rx="3.40" fill="none" stroke="#cccccc" stroke-width="1.90"/>
<path d="M1354.4,31.5 Q1354.4,26.6 1358.6,26.6 H1372.4 Q1376.6,26.6 1376.6,31.5 V33 Q1376.6,37.2 1365.5,37.2 Q1354.4,37.2 1354.4,33 Z" fill="#cccccc" />
<rect x="1359.40" y="28.30" width="12.20" height="6.20" rx="2.00" fill="#3c3c3c"/>
<rect x="1361.90" y="29.40" width="1.80" height="3.80" rx="0.00" fill="#cccccc"/>
<rect x="1366.90" y="29.40" width="1.80" height="3.80" rx="0.00" fill="#cccccc"/>
<path d="M1385.6,23.6 L1391,29 L1396.5,23.6" fill="none" stroke="#cccccc" stroke-width="1.50" stroke-linecap="round" stroke-linejoin="round" />
<rect x="1601.40" y="16.70" width="19.20" height="18.60" rx="2.00" fill="none" stroke="#cccccc" stroke-width="2.00"/>
<rect x="1601.40" y="16.70" width="8.60" height="18.60" rx="1.50" fill="#cccccc"/>
<rect x="1640.00" y="16.70" width="19.80" height="18.60" rx="2.00" fill="none" stroke="#cccccc" stroke-width="2.00"/>
<path d="M1640,29.6 H1659.8" fill="none" stroke="#cccccc" stroke-width="2.00" stroke-linecap="round" stroke-linejoin="round" />
<rect x="1679.40" y="16.70" width="19.10" height="18.60" rx="2.00" fill="none" stroke="#cccccc" stroke-width="2.00"/>
<path d="M1689,16.7 V35.3" fill="none" stroke="#cccccc" stroke-width="2.00" stroke-linecap="round" stroke-linejoin="round" />
<rect x="1719.00" y="16.70" width="7.20" height="18.60" rx="2.00" fill="none" stroke="#cccccc" stroke-width="2.00"/>
<rect x="1730.60" y="16.70" width="7.20" height="7.40" rx="2.00" fill="none" stroke="#cccccc" stroke-width="2.00"/>
<rect x="1730.60" y="27.90" width="7.20" height="7.40" rx="2.00" fill="none" stroke="#cccccc" stroke-width="2.00"/>
<path d="M1770.5,25.7 H1784" fill="none" stroke="#cccccc" stroke-width="1.20" stroke-linejoin="round" stroke-linecap="butt"/>
<rect x="1826.60" y="21.40" width="10.60" height="10.60" rx="1.50" fill="none" stroke="#cccccc" stroke-width="1.20"/>
<path d="M1829.5,21.4 V20.4 Q1829.5,18.6 1831.3,18.6 H1838.6 Q1840.4,18.6 1840.4,20.4 V27.7 Q1840.4,29.5 1838.6,29.5 H1837.2" fill="none" stroke="#cccccc" stroke-width="1.20" stroke-linecap="round" stroke-linejoin="round" />
<path d="M1885,19 L1898,31.6 M1898,19 L1885,31.6" fill="none" stroke="#cccccc" stroke-width="1.30" stroke-linecap="round" stroke-linejoin="round" />
<path d="M582.3,79.1 L590.3,86.9 L598.2,79.1 H594.9 V70 L590.3,72.8 L585.3,70 V79.1 Z" fill="#519aba" />
<circle cx="1082.20" cy="79.40" r="6.20" fill="#ffffff"/>
<path d="M1816.6,76.6 V71.3 Q1816.6,69.3 1814.6,69.3 H1801.2 Q1799.2,69.3 1799.2,71.3 V86.1 Q1799.2,88.1 1801.2,88.1 H1809.6" fill="none" stroke="#cccccc" stroke-width="1.90" stroke-linecap="round" stroke-linejoin="round" />
<path d="M1808,69.3 V88.1" fill="none" stroke="#cccccc" stroke-width="1.90" stroke-linecap="round" stroke-linejoin="round" />
<circle cx="1816.00" cy="82.20" r="3.50" fill="none" stroke="#cccccc" stroke-width="1.90"/>
<path d="M1813.4,84.9 L1810,88.8" fill="none" stroke="#cccccc" stroke-width="1.90" stroke-linecap="round" stroke-linejoin="round" />
<rect x="1838.60" y="69.30" width="18.40" height="18.80" rx="2.00" fill="none" stroke="#cccccc" stroke-width="1.90"/>
<path d="M1847.8,69.3 V88.1" fill="none" stroke="#cccccc" stroke-width="1.90" stroke-linecap="round" stroke-linejoin="round" />
<circle cx="1877.80" cy="78.90" r="2.00" fill="#cccccc"/>
<circle cx="1885.40" cy="78.90" r="2.00" fill="#cccccc"/>
<circle cx="1893.00" cy="78.90" r="2.00" fill="#cccccc"/>
<circle cx="519.00" cy="79.00" r="2.10" fill="#cccccc"/>
<circle cx="526.50" cy="79.00" r="2.10" fill="#cccccc"/>
<circle cx="534.00" cy="79.00" r="2.10" fill="#cccccc"/>
<path d="M80,119.6 L87,126.6 L94.2,119.6" fill="none" stroke="#cccccc" stroke-width="1.60" stroke-linecap="round" stroke-linejoin="round" />
<path d="M80,332.2 L87,339.2 L94.2,332.2" fill="none" stroke="#cccccc" stroke-width="1.60" stroke-linecap="round" stroke-linejoin="round" />
<path d="M80,565.2 L87,572.2 L94.2,565.2" fill="none" stroke="#cccccc" stroke-width="1.60" stroke-linecap="round" stroke-linejoin="round" />
<path d="M80,788.6 L87,795.6 L94.2,788.6" fill="none" stroke="#cccccc" stroke-width="1.60" stroke-linecap="round" stroke-linejoin="round" />
<rect x="91.00" y="145.10" width="19.40" height="19.60" rx="2.00" fill="none" stroke="#cccccc" stroke-width="1.80"/>
<path d="M94.6,151 L100.4,155.7 L94.6,160.4" fill="none" stroke="#cccccc" stroke-width="1.80" stroke-linecap="round" stroke-linejoin="round" />
<path d="M100.6,160.2 H106.6" fill="none" stroke="#cccccc" stroke-width="1.80" stroke-linecap="round" stroke-linejoin="round" />
<circle cx="99.90" cy="187.00" r="9.10" fill="none" stroke="#cccccc" stroke-width="1.80"/>
<path d="M94.2,190.6 A5.9,5.9 0 1 1 105.6,190.6" fill="none" stroke="#cccccc" stroke-width="1.80" stroke-linecap="round" stroke-linejoin="round" />
<circle cx="99.20" cy="187.60" r="1.90" fill="none" stroke="#cccccc" stroke-width="1.60"/>
<path d="M100.6,186.2 L104.6,182.4" fill="none" stroke="#cccccc" stroke-width="1.80" stroke-linecap="round" stroke-linejoin="round" />
<rect x="516.30" y="147.00" width="17.40" height="17.50" rx="3.00" fill="#15a85a"/>
<path d="M520,156.0 L523.6,159.8 L530.4,152.2" fill="none" stroke="#e8e8e8" stroke-width="1.90" stroke-linecap="round" stroke-linejoin="round" />
<rect x="516.30" y="180.00" width="17.40" height="17.50" rx="3.00" fill="#15a85a"/>
<path d="M520,189.0 L523.6,192.8 L530.4,185.2" fill="none" stroke="#e8e8e8" stroke-width="1.90" stroke-linecap="round" stroke-linejoin="round" />
<path d="M97.8,361.2 L104.6,368.2 L97.8,375.2" fill="none" stroke="#cccccc" stroke-width="1.60" stroke-linecap="round" stroke-linejoin="round" />
<path d="M133.5,358.0 L142.4,364.2 L133.5,369.8 L124.6,364.2 Z" fill="none" stroke="#cccccc" stroke-width="1.60" stroke-linecap="round" stroke-linejoin="round" />
<path d="M124.6,368.4 L133.5,374.2 L142.4,368.4" fill="none" stroke="#cccccc" stroke-width="1.60" stroke-linecap="round" stroke-linejoin="round" />
<path d="M124.6,372.8 L133.5,378.6 L142.4,372.8" fill="none" stroke="#cccccc" stroke-width="1.60" stroke-linecap="round" stroke-linejoin="round" />
<path d="M97.8,394.2 L104.6,401.2 L97.8,408.2" fill="none" stroke="#cccccc" stroke-width="1.60" stroke-linecap="round" stroke-linejoin="round" />
<path d="M133.5,391.0 L142.4,397.2 L133.5,402.8 L124.6,397.2 Z" fill="none" stroke="#cccccc" stroke-width="1.60" stroke-linecap="round" stroke-linejoin="round" />
<path d="M124.6,401.4 L133.5,407.2 L142.4,401.4" fill="none" stroke="#cccccc" stroke-width="1.60" stroke-linecap="round" stroke-linejoin="round" />
<path d="M124.6,405.8 L133.5,411.6 L142.4,405.8" fill="none" stroke="#cccccc" stroke-width="1.60" stroke-linecap="round" stroke-linejoin="round" />
<path d="M97.8,427.2 L104.6,434.2 L97.8,441.2" fill="none" stroke="#cccccc" stroke-width="1.60" stroke-linecap="round" stroke-linejoin="round" />
<path d="M133.5,424.0 L142.4,430.2 L133.5,435.8 L124.6,430.2 Z" fill="none" stroke="#cccccc" stroke-width="1.60" stroke-linecap="round" stroke-linejoin="round" />
<path d="M124.6,434.4 L133.5,440.2 L142.4,434.4" fill="none" stroke="#cccccc" stroke-width="1.60" stroke-linecap="round" stroke-linejoin="round" />
<path d="M124.6,438.8 L133.5,444.6 L142.4,438.8" fill="none" stroke="#cccccc" stroke-width="1.60" stroke-linecap="round" stroke-linejoin="round" />
<path d="M97.8,460.2 L104.6,467.2 L97.8,474.2" fill="none" stroke="#cccccc" stroke-width="1.60" stroke-linecap="round" stroke-linejoin="round" />
<path d="M133.5,457.0 L142.4,463.2 L133.5,468.8 L124.6,463.2 Z" fill="none" stroke="#cccccc" stroke-width="1.60" stroke-linecap="round" stroke-linejoin="round" />
<path d="M124.6,467.4 L133.5,473.2 L142.4,467.4" fill="none" stroke="#cccccc" stroke-width="1.60" stroke-linecap="round" stroke-linejoin="round" />
<path d="M124.6,471.8 L133.5,477.6 L142.4,471.8" fill="none" stroke="#cccccc" stroke-width="1.60" stroke-linecap="round" stroke-linejoin="round" />
<path d="M133.5,490.0 L142.4,496.2 L133.5,501.8 L124.6,496.2 Z" fill="none" stroke="#cccccc" stroke-width="1.60" stroke-linecap="round" stroke-linejoin="round" />
<path d="M124.6,500.4 L133.5,506.2 L142.4,500.4" fill="none" stroke="#cccccc" stroke-width="1.60" stroke-linecap="round" stroke-linejoin="round" />
<path d="M124.6,504.8 L133.5,510.6 L142.4,504.8" fill="none" stroke="#cccccc" stroke-width="1.60" stroke-linecap="round" stroke-linejoin="round" />
<path d="M518,493.6 L532.2,508 M532.2,493.6 L518,508" fill="none" stroke="#d7335b" stroke-width="3.20" stroke-linecap="round" stroke-linejoin="round" />
<path d="M421.2,561 H442.6 M421.2,565.7 H442.6 M421.2,570.4 H433.6 M421.2,575 H433.6" fill="none" stroke="#cccccc" stroke-width="1.60" stroke-linejoin="round" stroke-linecap="butt"/>
<path d="M435.8,570 L442,576 M442,570 L435.8,576" fill="none" stroke="#cccccc" stroke-width="1.60" stroke-linecap="round" stroke-linejoin="round" />
<circle cx="467.20" cy="567.00" r="9.40" fill="none" stroke="#cccccc" stroke-width="1.70"/>
<path d="M463.9,564.2 Q464.1,560.6 467.3,560.6 Q470.6,560.6 470.6,563.6 Q470.6,565.8 467.4,567 V569" fill="none" stroke="#cccccc" stroke-width="1.80" stroke-linecap="round" stroke-linejoin="round" />
<circle cx="467.40" cy="572.30" r="1.20" fill="#cccccc"/>
<path d="M506.4,559.4 A8.6,8.6 0 1 1 499.6,560.6" fill="none" stroke="#cccccc" stroke-width="1.70" stroke-linecap="round" stroke-linejoin="round" />
<path d="M494.8,559.7 H500.9 V564.5" fill="none" stroke="#cccccc" stroke-width="1.70" stroke-linecap="round" stroke-linejoin="round" />
<rect x="535.80" y="559.80" width="12.80" height="12.00" rx="2.00" fill="none" stroke="#cccccc" stroke-width="1.60"/>
<rect x="530.2" y="563.8" width="15" height="13.6" fill="#252526"/>
<rect x="531.20" y="564.80" width="12.60" height="12.00" rx="2.00" fill="none" stroke="#cccccc" stroke-width="1.60"/>
<path d="M534.4,570.8 H540.6" fill="none" stroke="#cccccc" stroke-width="1.60" stroke-linecap="round" stroke-linejoin="round" />
<circle cx="100.30" cy="600.80" r="9.40" fill="none" stroke="#89d185" stroke-width="1.80"/>
<path d="M95.6,601 L98.8,604.2 L105,597.6" fill="none" stroke="#89d185" stroke-width="1.80" stroke-linecap="round" stroke-linejoin="round" />
<circle cx="100.30" cy="634.00" r="9.40" fill="none" stroke="#cca700" stroke-width="1.80"/>
<path d="M106.2,627.6 L94.4,640.4" fill="none" stroke="#cca700" stroke-width="1.80" stroke-linecap="round" stroke-linejoin="round" />
<circle cx="100.30" cy="667.00" r="9.40" fill="none" stroke="#f48771" stroke-width="1.80"/>
<path d="M96.6,663.3 L104,670.7 M104,663.3 L96.6,670.7" fill="none" stroke="#f48771" stroke-width="1.80" stroke-linecap="round" stroke-linejoin="round" />
<circle cx="100.30" cy="700.20" r="9.40" fill="none" stroke="#89d185" stroke-width="1.80"/>
<path d="M95.6,700.4 L98.8,703.6 L105,697" fill="none" stroke="#89d185" stroke-width="1.80" stroke-linecap="round" stroke-linejoin="round" />
<rect x="423.00" y="586.00" width="29.80" height="30.00" rx="5.00" fill="#3a3d3f"/>
<path d="M427.7,592.8 H437.7 V608.2 H427.7 Z M437.7,592.8 H447.8 V608.2 H437.7" fill="none" stroke="#cccccc" stroke-width="1.70" stroke-linecap="round" stroke-linejoin="round" />
<path d="M430.8,597.6 H434.8 M430.8,601 H434.8 M430.8,604.2 H434.8 M440.6,597.6 H444.6 M440.6,601 H444.6 M440.6,604.2 H444.6" fill="none" stroke="#cccccc" stroke-width="1.50" stroke-linejoin="round" stroke-linecap="butt"/>
<path d="M461.6,604.9 A8,8 0 1 0 462.6,595.6" fill="none" stroke="#89d185" stroke-width="2.30" stroke-linejoin="round" stroke-linecap="butt"/>
<path d="M459.2,592.6 V599.6 H465.8 Z" fill="#89d185" />
<rect x="489.80" y="592.80" width="16.40" height="16.00" rx="1.00" fill="none" stroke="#cccccc" stroke-width="1.60"/>
<path d="M521.4,594.4 L534.6,607.4 M534.6,594.4 L521.4,607.4" fill="none" stroke="#cccccc" stroke-width="1.60" stroke-linecap="round" stroke-linejoin="round" />
<path d="M97.8,817.5 L104.6,824.5 L97.8,831.5" fill="none" stroke="#cccccc" stroke-width="1.60" stroke-linecap="round" stroke-linejoin="round" />
<path d="M97.8,850.5 L104.6,857.5 L97.8,864.5" fill="none" stroke="#cccccc" stroke-width="1.60" stroke-linecap="round" stroke-linejoin="round" />
<path d="M97.8,883.5 L104.6,890.5 L97.8,897.5" fill="none" stroke="#cccccc" stroke-width="1.60" stroke-linecap="round" stroke-linejoin="round" />
<path d="M97.8,916.5 L104.6,923.5 L97.8,930.5" fill="none" stroke="#cccccc" stroke-width="1.60" stroke-linecap="round" stroke-linejoin="round" />
<rect x="124.80" y="823.80" width="17.60" height="10.00" rx="1.80" fill="none" stroke="#cccccc" stroke-width="1.80"/>
<path d="M128.4,823.8 V820.5 Q128.4,814.6 133.6,814.6 Q138.8,814.6 138.8,820.5 V823.8" fill="none" stroke="#cccccc" stroke-width="1.80" stroke-linecap="round" stroke-linejoin="round" />
<rect x="125.20" y="883.00" width="18.40" height="12.60" rx="1.50" fill="none" stroke="#cccccc" stroke-width="1.70"/>
<rect x="128.00" y="886.40" width="1.60" height="1.60" rx="0.00" fill="#cccccc"/>
<rect x="130.90" y="886.40" width="1.60" height="1.60" rx="0.00" fill="#cccccc"/>
<rect x="133.80" y="886.40" width="1.60" height="1.60" rx="0.00" fill="#cccccc"/>
<rect x="136.70" y="886.40" width="1.60" height="1.60" rx="0.00" fill="#cccccc"/>
<rect x="139.60" y="886.40" width="1.60" height="1.60" rx="0.00" fill="#cccccc"/>
<rect x="128.00" y="889.20" width="1.60" height="1.60" rx="0.00" fill="#cccccc"/>
<rect x="130.90" y="889.20" width="1.60" height="1.60" rx="0.00" fill="#cccccc"/>
<rect x="133.80" y="889.20" width="1.60" height="1.60" rx="0.00" fill="#cccccc"/>
<rect x="136.70" y="889.20" width="1.60" height="1.60" rx="0.00" fill="#cccccc"/>
<rect x="139.60" y="889.20" width="1.60" height="1.60" rx="0.00" fill="#cccccc"/>
<path d="M129.5,892.6 H139.5" fill="none" stroke="#cccccc" stroke-width="1.50" stroke-linejoin="round" stroke-linecap="butt"/>
<rect x="128.60" y="913.60" width="10.60" height="16.60" rx="1.00" fill="none" stroke="#cccccc" stroke-width="1.60"/>
<path d="M130.8,917.4 H137 M130.8,925 H137 M130.8,927.4 H137" fill="none" stroke="#cccccc" stroke-width="1.40" stroke-linecap="round" stroke-linejoin="round" />
<path d="M128.6,928.2 H125.2 L123.6,934.2 H144 L142.4,928.2 H139.2" fill="none" stroke="#cccccc" stroke-width="1.60" stroke-linecap="round" stroke-linejoin="round" />
<path d="M18.6,1000.4 L25,1005.8 L18.6,1011.2 M31.8,994.8 L25.6,1000.2 L31.8,1005.6" fill="none" stroke="#ffffff" stroke-width="1.60" stroke-linecap="round" stroke-linejoin="round" />
<circle cx="66.40" cy="997.40" r="2.60" fill="none" stroke="#ffffff" stroke-width="1.50"/>
<circle cx="66.40" cy="1010.00" r="2.60" fill="none" stroke="#ffffff" stroke-width="1.50"/>
<circle cx="75.40" cy="1000.40" r="2.60" fill="none" stroke="#ffffff" stroke-width="1.50"/>
<path d="M66.4,1000 V1007.4" fill="none" stroke="#ffffff" stroke-width="1.50" stroke-linecap="round" stroke-linejoin="round" />
<path d="M75.4,1003 Q75.2,1006.2 70.5,1006.6 Q66.6,1007 66.4,1007.4" fill="none" stroke="#ffffff" stroke-width="1.50" stroke-linecap="round" stroke-linejoin="round" />
<path d="M158.6,999.4 A7.1,7.1 0 0 1 172,1003.8" fill="none" stroke="#ffffff" stroke-width="1.60" stroke-linecap="round" stroke-linejoin="round" />
<path d="M168.8,1002 L172.1,1005.3 L175.2,1002" fill="none" stroke="#ffffff" stroke-width="1.60" stroke-linecap="round" stroke-linejoin="round" />
<path d="M171,1007.4 A7.1,7.1 0 0 1 157.6,1003.2" fill="none" stroke="#ffffff" stroke-width="1.60" stroke-linecap="round" stroke-linejoin="round" />
<path d="M154.3,1004.8 L157.5,1001.6 L160.7,1004.8" fill="none" stroke="#ffffff" stroke-width="1.60" stroke-linecap="round" stroke-linejoin="round" />
<circle cx="206.60" cy="1003.20" r="8.60" fill="none" stroke="#ffffff" stroke-width="1.50"/>
<path d="M202.8,999.4 L210.4,1007 M210.4,999.4 L202.8,1007" fill="none" stroke="#ffffff" stroke-width="1.50" stroke-linecap="round" stroke-linejoin="round" />
<path d="M247.2,994.6 L256.2,1011.6 H238.2 Z" fill="none" stroke="#ffffff" stroke-width="1.50" stroke-linecap="round" stroke-linejoin="round" />
<path d="M247.2,1000.4 V1005.6" fill="none" stroke="#ffffff" stroke-width="1.70" stroke-linecap="round" stroke-linejoin="round" />
<circle cx="247.20" cy="1008.40" r="1.10" fill="#ffffff"/>
<circle cx="287.80" cy="1003.20" r="8.60" fill="none" stroke="#ffffff" stroke-width="1.50"/>
<path d="M287.8,1001.6 V1008" fill="none" stroke="#ffffff" stroke-width="1.80" stroke-linecap="round" stroke-linejoin="round" />
<circle cx="287.80" cy="998.60" r="1.20" fill="#ffffff"/>
<circle cx="357.60" cy="1000.20" r="1.80" fill="none" stroke="#ffffff" stroke-width="1.40"/>
<path d="M357.1,1002.2 L352.8,1011.6 M358.1,1002.2 L362.4,1011.6 M354.4,1008.8 H360.8" fill="none" stroke="#ffffff" stroke-width="1.50" stroke-linecap="round" stroke-linejoin="round" />
<path d="M354.2,997 Q351.8,1000.4 354.2,1003.8 M361,997 Q363.4,1000.4 361,1003.8" fill="none" stroke="#ffffff" stroke-width="1.40" stroke-linecap="round" stroke-linejoin="round" />
<path d="M350.8,994.6 Q347.4,1000.2 350.8,1005.8 M364.4,994.6 Q367.8,1000.2 364.4,1005.8" fill="none" stroke="#ffffff" stroke-width="1.40" stroke-linecap="round" stroke-linejoin="round" />
<circle cx="1256.80" cy="1001.60" r="6.60" fill="none" stroke="#ffffff" stroke-width="1.60"/>
<path d="M1256.8,998.2 V1005 M1253.4,1001.6 H1260.2" fill="none" stroke="#ffffff" stroke-width="1.60" stroke-linecap="round" stroke-linejoin="round" />
<path d="M1261.6,1006.6 L1268.6,1013" fill="none" stroke="#ffffff" stroke-width="1.80" stroke-linecap="round" stroke-linejoin="round" />
<path d="M1774.6,994.6 L1783.6,1011.6 H1765.6 Z" fill="none" stroke="#ffffff" stroke-width="1.50" stroke-linecap="round" stroke-linejoin="round" />
<path d="M1774.6,1000.4 V1005.6" fill="none" stroke="#ffffff" stroke-width="1.70" stroke-linecap="round" stroke-linejoin="round" />
<circle cx="1774.60" cy="1008.40" r="1.10" fill="#ffffff"/>
<path d="M1880.4,1009.4 H1894.2 Q1891.4,1006.6 1891.4,1002.6 V1000.6 Q1891.4,994.2 1887.3,994.2 Q1883.2,994.2 1883.2,1000.6 V1002.6 Q1883.2,1006.6 1880.4,1009.4 Z" fill="none" stroke="#ffffff" stroke-width="1.50" stroke-linecap="round" stroke-linejoin="round" />
<path d="M1885.2,1011.6 Q1887.3,1013.6 1889.4,1011.6" fill="none" stroke="#ffffff" stroke-width="1.50" stroke-linecap="round" stroke-linejoin="round" />
<rect x="1152.00" y="749.00" width="21.00" height="21.00" rx="3.60" fill="#06c965"/>
<path d="M1155.6,759.4 L1160.6,764.0 L1170.0,755.2" fill="none" stroke="#ffffff" stroke-width="2.30" stroke-linecap="round" stroke-linejoin="round" />
<rect x="1152.00" y="892.10" width="21.00" height="21.00" rx="3.60" fill="#06c965"/>
<path d="M1155.6,902.5 L1160.6,907.1 L1170.0,898.3" fill="none" stroke="#ffffff" stroke-width="2.30" stroke-linecap="round" stroke-linejoin="round" />
<path d="M1139.30,779.00 L1142.24,785.55 L1149.38,786.32 L1144.06,791.15 L1145.53,798.18 L1139.30,794.60 L1133.07,798.18 L1134.54,791.15 L1129.22,786.32 L1136.36,785.55 Z" fill="#fdca35" stroke="#fdca35" stroke-width="2.2" stroke-linejoin="round"/>
<g transform="translate(1152,806.00)"><path d="M0.4,15 C0.4,9.6 4.6,7.2 9.8,7.4 C12.8,7.6 14.6,8.8 15.6,8.4 C16.4,7.8 15.6,4.6 16.2,2.2 C17.4,3.8 18.8,4.8 19.8,5 C20.8,9 20.8,13.2 19.8,16.6 C18.2,20.2 14.2,21.4 10,21.4 C4,21.4 0.4,19.2 0.4,15 Z" fill="#1c9be6"/><path d="M0.5,14.2 C3.2,13.2 7,13.8 10,15.8 C12.6,17.5 15.2,18.9 17.8,19.1 C15.8,20.8 12.6,21.4 10,21.4 C4,21.4 0.5,19.2 0.5,14.2 Z" fill="#b6defa"/><ellipse cx="10.2" cy="20.8" rx="9.6" ry="1.1" fill="#1c9be6"/><circle cx="10" cy="10.6" r="1" fill="#14476e"/><path d="M3.8,4.8 Q6.2,0.8 8.6,3.2 Q11,0.8 13.2,4.8" fill="none" stroke="#2fb2f0" stroke-width="1.8"/><circle cx="1.6" cy="5" r="1" fill="#2fb2f0"/><circle cx="13" cy="1.2" r="0.9" fill="#2fb2f0"/></g>
<g transform="translate(1151.6,864.70)"><ellipse cx="10.8" cy="6.6" rx="10.8" ry="6.6" fill="#ffffff"/><path d="M3.4,10 L4.2,17.3 L9.6,12.2 Z" fill="#ffffff"/></g>
<rect x="1128.8" y="951.90" width="21" height="15" fill="#1a1a1a"/>
<rect x="1128.80" y="951.90" width="3.00" height="3.00" fill="#ffffff"/>
<rect x="1128.80" y="957.90" width="3.00" height="3.00" fill="#ffffff"/>
<rect x="1128.80" y="963.90" width="3.00" height="3.00" fill="#ffffff"/>
<rect x="1131.80" y="954.90" width="3.00" height="3.00" fill="#ffffff"/>
<rect x="1131.80" y="960.90" width="3.00" height="3.00" fill="#ffffff"/>
<rect x="1134.80" y="951.90" width="3.00" height="3.00" fill="#ffffff"/>
<rect x="1134.80" y="957.90" width="3.00" height="3.00" fill="#ffffff"/>
<rect x="1134.80" y="963.90" width="3.00" height="3.00" fill="#ffffff"/>
<rect x="1137.80" y="954.90" width="3.00" height="3.00" fill="#ffffff"/>
<rect x="1137.80" y="960.90" width="3.00" height="3.00" fill="#ffffff"/>
<rect x="1140.80" y="951.90" width="3.00" height="3.00" fill="#ffffff"/>
<rect x="1140.80" y="957.90" width="3.00" height="3.00" fill="#ffffff"/>
<rect x="1140.80" y="963.90" width="3.00" height="3.00" fill="#ffffff"/>
<rect x="1143.80" y="954.90" width="3.00" height="3.00" fill="#ffffff"/>
<rect x="1143.80" y="960.90" width="3.00" height="3.00" fill="#ffffff"/>
<rect x="1146.80" y="951.90" width="3.00" height="3.00" fill="#ffffff"/>
<rect x="1146.80" y="957.90" width="3.00" height="3.00" fill="#ffffff"/>
<rect x="1146.80" y="963.90" width="3.00" height="3.00" fill="#ffffff"/>
<path d="M686.35,287.80 Q688.60,285.30 690.85,287.80 Q693.10,290.30 695.35,287.80 Q697.60,285.30 699.85,287.80 Q702.10,290.30 704.35,287.80 Q706.60,285.30 708.85,287.80 Q711.10,290.30 713.35,287.80 Q715.60,285.30 717.85,287.80 Q720.10,290.30 722.35,287.80 Q724.60,285.30 726.85,287.80 Q729.10,290.30 731.35,287.80 Q733.60,285.30 735.85,287.80 Q738.10,290.30 740.35,287.80 Q742.60,285.30 744.85,287.80 Q747.10,290.30 749.35,287.80 Q751.60,285.30 753.85,287.80 Q756.10,290.30 758.35,287.80 Q760.60,285.30 762.85,287.80 Q765.10,290.30 767.35,287.80 Q769.60,285.30 771.85,287.80 Q774.10,290.30 776.35,287.80 Q778.60,285.30 780.85,287.80 Q783.10,290.30 785.35,287.80 Q787.33,285.30 789.30,287.80" fill="none" stroke="#3b8eea" stroke-width="1.30" stroke-linejoin="round" stroke-linecap="butt"/>
<path d="M1356.25,173.80 Q1358.50,171.30 1360.75,173.80 Q1363.00,176.30 1365.25,173.80 Q1367.50,171.30 1369.75,173.80 Q1372.00,176.30 1374.25,173.80 Q1376.50,171.30 1378.75,173.80 Q1381.00,176.30 1383.25,173.80 Q1385.50,171.30 1387.75,173.80 Q1390.00,176.30 1392.25,173.80 Q1394.50,171.30 1396.75,173.80 Q1399.00,176.30 1401.25,173.80 Q1403.50,171.30 1405.75,173.80 Q1408.00,176.30 1410.25,173.80 Q1411.62,171.30 1413.00,173.80" fill="none" stroke="#3b8eea" stroke-width="1.30" stroke-linejoin="round" stroke-linecap="butt"/>
<path d="M1437.10,743.80 Q1439.35,741.30 1441.60,743.80 Q1443.85,746.30 1446.10,743.80 Q1448.35,741.30 1450.60,743.80 Q1452.85,746.30 1455.10,743.80 Q1457.35,741.30 1459.60,743.80 Q1461.85,746.30 1464.10,743.80 Q1466.35,741.30 1468.60,743.80 Q1470.85,746.30 1473.10,743.80 Q1475.35,741.30 1477.60,743.80 Q1479.85,746.30 1482.10,743.80 Q1482.20,741.30 1482.30,743.80" fill="none" stroke="#3b8eea" stroke-width="1.30" stroke-linejoin="round" stroke-linecap="butt"/>
<path d="M1454.40,829.30 Q1456.65,826.80 1458.90,829.30 Q1461.15,831.80 1463.40,829.30 Q1465.65,826.80 1467.90,829.30 Q1470.15,831.80 1472.40,829.30 Q1474.65,826.80 1476.90,829.30 Q1479.15,831.80 1481.40,829.30 Q1483.65,826.80 1485.90,829.30 Q1488.15,831.80 1490.40,829.30 Q1492.65,826.80 1494.90,829.30 Q1497.15,831.80 1499.40,829.30 Q1501.65,826.80 1503.90,829.30 Q1506.15,831.80 1508.40,829.30 Q1510.65,826.80 1512.90,829.30 Q1515.15,831.80 1517.40,829.30 Q1519.65,826.80 1521.90,829.30 Q1524.15,831.80 1526.40,829.30 Q1528.65,826.80 1530.90,829.30 Q1533.15,831.80 1535.40,829.30 Q1537.65,826.80 1539.90,829.30 Q1542.15,831.80 1544.40,829.30 Q1546.65,826.80 1548.90,829.30 Q1551.15,831.80 1553.40,829.30 Q1555.65,826.80 1557.90,829.30 Q1560.15,831.80 1562.40,829.30 Q1564.65,826.80 1566.90,829.30 Q1569.15,831.80 1571.40,829.30 Q1573.65,826.80 1575.90,829.30 Q1578.15,831.80 1580.40,829.30 Q1582.65,826.80 1584.90,829.30 Q1587.15,831.80 1589.40,829.30 Q1590.70,826.80 1592.00,829.30" fill="none" stroke="#3b8eea" stroke-width="1.30" stroke-linejoin="round" stroke-linecap="butt"/>
<path d="M1679.65,857.80 Q1681.90,855.30 1684.15,857.80 Q1686.40,860.30 1688.65,857.80 Q1690.90,855.30 1693.15,857.80 Q1695.40,860.30 1697.65,857.80 Q1699.90,855.30 1702.15,857.80 Q1704.40,860.30 1706.65,857.80 Q1708.90,855.30 1711.15,857.80 Q1713.40,860.30 1715.65,857.80 Q1717.90,855.30 1720.15,857.80 Q1722.40,860.30 1724.65,857.80 Q1726.90,855.30 1729.15,857.80 Q1731.40,860.30 1733.65,857.80 Q1735.90,855.30 1738.15,857.80 Q1740.40,860.30 1742.65,857.80 Q1744.90,855.30 1747.15,857.80 Q1749.40,860.30 1751.65,857.80 Q1753.90,855.30 1756.15,857.80 Q1757.83,860.30 1759.50,857.80" fill="none" stroke="#3b8eea" stroke-width="1.30" stroke-linejoin="round" stroke-linecap="butt"/>
<rect x="1798" y="104.86" width="101" height="2.1" fill="#2b5d92"/>
<rect x="1798.0" y="105.16" width="12.0" height="1.5" fill="#a0a0a0" opacity="0.5"/>
<rect x="1811.2" y="105.16" width="12.0" height="1.5" fill="#a0a0a0" opacity="0.5"/>
<rect x="1824.4" y="105.16" width="12.0" height="1.5" fill="#a0a0a0" opacity="0.5"/>
<rect x="1837.6" y="105.16" width="6.0" height="1.5" fill="#a0a0a0" opacity="0.5"/>
<rect x="1844.8" y="105.16" width="5.0" height="1.5" fill="#a0a0a0" opacity="0.5"/>
<rect x="1851.0" y="105.16" width="12.0" height="1.5" fill="#a0a0a0" opacity="0.5"/>
<rect x="1864.2" y="105.16" width="5.0" height="1.5" fill="#a0a0a0" opacity="0.5"/>
<rect x="1870.4" y="105.16" width="4.0" height="1.5" fill="#a0a0a0" opacity="0.5"/>
<rect x="1875.6" y="105.16" width="7.9" height="1.5" fill="#a0a0a0" opacity="0.5"/>
<rect x="1868.4" y="104.86" width="2.7" height="2.1" fill="#3794ff"/>
<rect x="1798" y="107.01" width="101" height="2.1" fill="#2b5d92"/>
<rect x="1798.0" y="107.31" width="7.0" height="1.5" fill="#a0a0a0" opacity="0.5"/>
<rect x="1806.2" y="107.31" width="5.0" height="1.5" fill="#a0a0a0" opacity="0.5"/>
<rect x="1812.4" y="107.31" width="4.0" height="1.5" fill="#a0a0a0" opacity="0.5"/>
<rect x="1817.6" y="107.31" width="3.0" height="1.5" fill="#a0a0a0" opacity="0.5"/>
<rect x="1821.8" y="107.31" width="10.0" height="1.5" fill="#a0a0a0" opacity="0.5"/>
<rect x="1833.0" y="107.31" width="12.0" height="1.5" fill="#a0a0a0" opacity="0.5"/>
<rect x="1846.2" y="107.31" width="5.0" height="1.5" fill="#a0a0a0" opacity="0.5"/>
<rect x="1852.4" y="107.31" width="3.0" height="1.5" fill="#a0a0a0" opacity="0.5"/>
<rect x="1856.6" y="107.31" width="4.0" height="1.5" fill="#a0a0a0" opacity="0.5"/>
<rect x="1861.8" y="107.31" width="3.0" height="1.5" fill="#a0a0a0" opacity="0.5"/>
<rect x="1833.3" y="107.01" width="4.6" height="2.1" fill="#3794ff"/>
<rect x="1798" y="109.17" width="101" height="2.1" fill="#2b5d92"/>
<rect x="1798.0" y="109.47" width="3.0" height="1.5" fill="#a0a0a0" opacity="0.5"/>
<rect x="1802.2" y="109.47" width="6.0" height="1.5" fill="#a0a0a0" opacity="0.5"/>
<rect x="1809.4" y="109.47" width="6.0" height="1.5" fill="#a0a0a0" opacity="0.5"/>
<rect x="1816.6" y="109.47" width="3.0" height="1.5" fill="#a0a0a0" opacity="0.5"/>
<rect x="1820.8" y="109.47" width="12.0" height="1.5" fill="#a0a0a0" opacity="0.5"/>
<rect x="1834.0" y="109.47" width="8.0" height="1.5" fill="#a0a0a0" opacity="0.5"/>
<rect x="1843.2" y="109.47" width="12.0" height="1.5" fill="#a0a0a0" opacity="0.5"/>
<rect x="1856.4" y="109.47" width="6.0" height="1.5" fill="#a0a0a0" opacity="0.5"/>
<rect x="1863.6" y="109.47" width="6.0" height="1.5" fill="#a0a0a0" opacity="0.5"/>
<rect x="1870.8" y="109.47" width="7.0" height="1.5" fill="#a0a0a0" opacity="0.5"/>
<rect x="1879.0" y="109.47" width="4.5" height="1.5" fill="#a0a0a0" opacity="0.5"/>
<rect x="1854.1" y="109.17" width="11.5" height="2.1" fill="#3794ff"/>
<rect x="1798" y="111.33" width="101" height="2.1" fill="#2b5d92"/>
<rect x="1798.0" y="111.63" width="3.0" height="1.5" fill="#a0a0a0" opacity="0.5"/>
<rect x="1802.2" y="111.63" width="4.0" height="1.5" fill="#a0a0a0" opacity="0.5"/>
<rect x="1807.4" y="111.63" width="12.0" height="1.5" fill="#a0a0a0" opacity="0.5"/>
<rect x="1820.6" y="111.63" width="7.0" height="1.5" fill="#a0a0a0" opacity="0.5"/>
<rect x="1828.8" y="111.63" width="10.0" height="1.5" fill="#a0a0a0" opacity="0.5"/>
<rect x="1840.0" y="111.63" width="4.0" height="1.5" fill="#a0a0a0" opacity="0.5"/>
<rect x="1845.2" y="111.63" width="7.0" height="1.5" fill="#a0a0a0" opacity="0.5"/>
<rect x="1853.4" y="111.63" width="8.0" height="1.5" fill="#a0a0a0" opacity="0.5"/>
<rect x="1862.6" y="111.63" width="6.0" height="1.5" fill="#a0a0a0" opacity="0.5"/>
<rect x="1869.8" y="111.63" width="7.0" height="1.5" fill="#a0a0a0" opacity="0.5"/>
<rect x="1878.0" y="111.63" width="3.0" height="1.5" fill="#a0a0a0" opacity="0.5"/>
<rect x="1882.2" y="111.63" width="4.0" height="1.5" fill="#a0a0a0" opacity="0.5"/>
<rect x="1887.4" y="111.63" width="4.0" height="1.5" fill="#a0a0a0" opacity="0.5"/>
<rect x="1861.9" y="111.33" width="12.4" height="2.1" fill="#3794ff"/>
<rect x="1798.0" y="113.79" width="10.0" height="1.5" fill="#a0a0a0" opacity="0.5"/>
<rect x="1809.2" y="113.79" width="4.0" height="1.5" fill="#a0a0a0" opacity="0.5"/>
<rect x="1814.4" y="113.79" width="7.0" height="1.5" fill="#a0a0a0" opacity="0.5"/>
<rect x="1822.6" y="113.79" width="9.1" height="1.5" fill="#a0a0a0" opacity="0.5"/>
<rect x="1798.0" y="115.73" width="4.0" height="1.5" fill="#a0a0a0" opacity="0.5"/>
<rect x="1803.2" y="115.73" width="3.0" height="1.5" fill="#a0a0a0" opacity="0.5"/>
<rect x="1807.4" y="115.73" width="3.0" height="1.5" fill="#a0a0a0" opacity="0.5"/>
<rect x="1811.6" y="115.73" width="6.0" height="1.5" fill="#a0a0a0" opacity="0.5"/>
<rect x="1818.8" y="115.73" width="6.0" height="1.5" fill="#a0a0a0" opacity="0.5"/>
<rect x="1826.0" y="115.73" width="3.0" height="1.5" fill="#a0a0a0" opacity="0.5"/>
<rect x="1830.2" y="115.73" width="12.0" height="1.5" fill="#a0a0a0" opacity="0.5"/>
<rect x="1843.4" y="115.73" width="10.0" height="1.5" fill="#a0a0a0" opacity="0.5"/>
<rect x="1854.6" y="115.73" width="10.0" height="1.5" fill="#a0a0a0" opacity="0.5"/>
<rect x="1865.8" y="115.73" width="10.0" height="1.5" fill="#a0a0a0" opacity="0.5"/>
<rect x="1877.0" y="115.73" width="4.0" height="1.5" fill="#a0a0a0" opacity="0.5"/>
<rect x="1882.2" y="115.73" width="6.0" height="1.5" fill="#a0a0a0" opacity="0.5"/>
<rect x="1889.4" y="115.73" width="1.6" height="1.5" fill="#a0a0a0" opacity="0.5"/>
<rect x="1798" y="117.59" width="101" height="2.1" fill="#2b5d92"/>
<rect x="1798.0" y="117.89" width="8.0" height="1.5" fill="#a0a0a0" opacity="0.5"/>
<rect x="1807.2" y="117.89" width="4.0" height="1.5" fill="#a0a0a0" opacity="0.5"/>
<rect x="1812.4" y="117.89" width="7.0" height="1.5" fill="#a0a0a0" opacity="0.5"/>
<rect x="1820.6" y="117.89" width="8.0" height="1.5" fill="#a0a0a0" opacity="0.5"/>
<rect x="1829.8" y="117.89" width="3.0" height="1.5" fill="#a0a0a0" opacity="0.5"/>
<rect x="1834.0" y="117.89" width="10.0" height="1.5" fill="#a0a0a0" opacity="0.5"/>
<rect x="1845.2" y="117.89" width="4.0" height="1.5" fill="#a0a0a0" opacity="0.5"/>
<rect x="1850.4" y="117.89" width="5.0" height="1.5" fill="#a0a0a0" opacity="0.5"/>
<rect x="1856.6" y="117.89" width="6.0" height="1.5" fill="#a0a0a0" opacity="0.5"/>
<rect x="1863.8" y="117.89" width="4.0" height="1.5" fill="#a0a0a0" opacity="0.5"/>
<rect x="1869.0" y="117.89" width="3.0" height="1.5" fill="#a0a0a0" opacity="0.5"/>
<rect x="1873.2" y="117.89" width="3.0" height="1.5" fill="#a0a0a0" opacity="0.5"/>
<rect x="1877.4" y="117.89" width="12.0" height="1.5" fill="#a0a0a0" opacity="0.5"/>
<rect x="1890.6" y="117.89" width="3.6" height="1.5" fill="#a0a0a0" opacity="0.5"/>
<rect x="1861.0" y="117.59" width="15.1" height="2.1" fill="#3794ff"/>
<rect x="1798.0" y="119.72" width="5.0" height="1.5" fill="#a0a0a0" opacity="0.5"/>
<rect x="1804.2" y="119.72" width="6.0" height="1.5" fill="#a0a0a0" opacity="0.5"/>
<rect x="1811.4" y="119.72" width="12.0" height="1.5" fill="#a0a0a0" opacity="0.5"/>
<rect x="1824.6" y="119.72" width="6.0" height="1.5" fill="#a0a0a0" opacity="0.5"/>
<rect x="1831.8" y="119.72" width="5.0" height="1.5" fill="#a0a0a0" opacity="0.5"/>
<rect x="1838.0" y="119.72" width="10.0" height="1.5" fill="#a0a0a0" opacity="0.5"/>
<rect x="1849.2" y="119.72" width="10.0" height="1.5" fill="#a0a0a0" opacity="0.5"/>
<rect x="1860.4" y="119.72" width="4.0" height="1.5" fill="#a0a0a0" opacity="0.5"/>
<rect x="1798" y="121.58" width="101" height="2.1" fill="#2b5d92"/>
<rect x="1798.0" y="121.88" width="10.0" height="1.5" fill="#a0a0a0" opacity="0.5"/>
<rect x="1809.2" y="121.88" width="10.0" height="1.5" fill="#a0a0a0" opacity="0.5"/>
<rect x="1820.4" y="121.88" width="6.0" height="1.5" fill="#a0a0a0" opacity="0.5"/>
<rect x="1827.6" y="121.88" width="3.0" height="1.5" fill="#a0a0a0" opacity="0.5"/>
<rect x="1831.8" y="121.88" width="7.0" height="1.5" fill="#a0a0a0" opacity="0.5"/>
<rect x="1840.0" y="121.88" width="7.0" height="1.5" fill="#a0a0a0" opacity="0.5"/>
<rect x="1848.2" y="121.88" width="3.0" height="1.5" fill="#a0a0a0" opacity="0.5"/>
<rect x="1852.4" y="121.88" width="6.0" height="1.5" fill="#a0a0a0" opacity="0.5"/>
<rect x="1859.6" y="121.88" width="5.0" height="1.5" fill="#a0a0a0" opacity="0.5"/>
<rect x="1865.8" y="121.88" width="10.0" height="1.5" fill="#a0a0a0" opacity="0.5"/>
<rect x="1877.0" y="121.88" width="4.0" height="1.5" fill="#a0a0a0" opacity="0.5"/>
<rect x="1882.2" y="121.88" width="3.0" height="1.5" fill="#a0a0a0" opacity="0.5"/>
<rect x="1886.4" y="121.88" width="4.6" height="1.5" fill="#a0a0a0" opacity="0.5"/>
<rect x="1861.0" y="121.58" width="12.2" height="2.1" fill="#3794ff"/>
<rect x="1798.0" y="123.71" width="6.0" height="1.5" fill="#a0a0a0" opacity="0.5"/>
<rect x="1805.2" y="123.71" width="12.0" height="1.5" fill="#a0a0a0" opacity="0.5"/>
<rect x="1818.4" y="123.71" width="7.0" height="1.5" fill="#a0a0a0" opacity="0.5"/>
<rect x="1826.6" y="123.71" width="3.0" height="1.5" fill="#a0a0a0" opacity="0.5"/>
<rect x="1830.8" y="123.71" width="8.0" height="1.5" fill="#a0a0a0" opacity="0.5"/>
<rect x="1840.0" y="123.71" width="7.0" height="1.5" fill="#a0a0a0" opacity="0.5"/>
<rect x="1848.2" y="123.71" width="10.0" height="1.5" fill="#a0a0a0" opacity="0.5"/>
<rect x="1859.4" y="123.71" width="4.0" height="1.5" fill="#a0a0a0" opacity="0.5"/>
<rect x="1864.6" y="123.71" width="0.5" height="1.5" fill="#a0a0a0" opacity="0.5"/>
<rect x="1798.0" y="125.87" width="4.0" height="1.5" fill="#a0a0a0" opacity="0.5"/>
<rect x="1803.2" y="125.87" width="6.0" height="1.5" fill="#a0a0a0" opacity="0.5"/>
<rect x="1810.4" y="125.87" width="6.0" height="1.5" fill="#a0a0a0" opacity="0.5"/>
<rect x="1817.6" y="125.87" width="3.0" height="1.5" fill="#a0a0a0" opacity="0.5"/>
<rect x="1821.8" y="125.87" width="8.0" height="1.5" fill="#a0a0a0" opacity="0.5"/>
<rect x="1831.0" y="125.87" width="8.0" height="1.5" fill="#a0a0a0" opacity="0.5"/>
<rect x="1840.2" y="125.87" width="12.0" height="1.5" fill="#a0a0a0" opacity="0.5"/>
<rect x="1853.4" y="125.87" width="5.0" height="1.5" fill="#a0a0a0" opacity="0.5"/>
<rect x="1859.6" y="125.87" width="12.0" height="1.5" fill="#a0a0a0" opacity="0.5"/>
<rect x="1872.8" y="125.87" width="5.0" height="1.5" fill="#a0a0a0" opacity="0.5"/>
<rect x="1879.0" y="125.87" width="10.0" height="1.5" fill="#a0a0a0" opacity="0.5"/>
<rect x="1890.2" y="125.87" width="4.0" height="1.5" fill="#a0a0a0" opacity="0.5"/>
<rect x="1798" y="127.51" width="101" height="2.1" fill="#2b5d92"/>
<rect x="1798.0" y="127.81" width="5.0" height="1.5" fill="#a0a0a0" opacity="0.5"/>
<rect x="1804.2" y="127.81" width="7.0" height="1.5" fill="#a0a0a0" opacity="0.5"/>
<rect x="1812.4" y="127.81" width="6.0" height="1.5" fill="#a0a0a0" opacity="0.5"/>
<rect x="1819.6" y="127.81" width="6.0" height="1.5" fill="#a0a0a0" opacity="0.5"/>
<rect x="1826.8" y="127.81" width="3.8" height="1.5" fill="#a0a0a0" opacity="0.5"/>
<rect x="1824.1" y="127.51" width="6.7" height="2.1" fill="#3794ff"/>
<rect x="1798.0" y="129.97" width="5.0" height="1.5" fill="#a0a0a0" opacity="0.5"/>
<rect x="1804.2" y="129.97" width="6.0" height="1.5" fill="#a0a0a0" opacity="0.5"/>
<rect x="1811.4" y="129.97" width="10.0" height="1.5" fill="#a0a0a0" opacity="0.5"/>
<rect x="1822.6" y="129.97" width="12.0" height="1.5" fill="#a0a0a0" opacity="0.5"/>
<rect x="1835.8" y="129.97" width="4.0" height="1.5" fill="#a0a0a0" opacity="0.5"/>
<rect x="1841.0" y="129.97" width="10.0" height="1.5" fill="#a0a0a0" opacity="0.5"/>
<rect x="1852.2" y="129.97" width="3.0" height="1.5" fill="#a0a0a0" opacity="0.5"/>
<rect x="1856.4" y="129.97" width="4.0" height="1.5" fill="#a0a0a0" opacity="0.5"/>
<rect x="1861.6" y="129.97" width="4.0" height="1.5" fill="#a0a0a0" opacity="0.5"/>
<rect x="1866.8" y="129.97" width="3.0" height="1.5" fill="#a0a0a0" opacity="0.5"/>
<rect x="1871.0" y="129.97" width="7.0" height="1.5" fill="#a0a0a0" opacity="0.5"/>
<rect x="1879.2" y="129.97" width="6.0" height="1.5" fill="#a0a0a0" opacity="0.5"/>
<rect x="1886.4" y="129.97" width="7.8" height="1.5" fill="#a0a0a0" opacity="0.5"/>
<rect x="1798.0" y="131.59" width="5.6" height="1.5" fill="#a0a0a0" opacity="0.5"/>
<rect x="1798.0" y="133.74" width="10.0" height="1.5" fill="#a0a0a0" opacity="0.5"/>
<rect x="1809.2" y="133.74" width="12.0" height="1.5" fill="#a0a0a0" opacity="0.5"/>
<rect x="1822.4" y="133.74" width="7.0" height="1.5" fill="#a0a0a0" opacity="0.5"/>
<rect x="1830.6" y="133.74" width="5.0" height="1.5" fill="#a0a0a0" opacity="0.5"/>
<rect x="1836.8" y="133.74" width="4.0" height="1.5" fill="#a0a0a0" opacity="0.5"/>
<rect x="1842.0" y="133.74" width="5.0" height="1.5" fill="#a0a0a0" opacity="0.5"/>
<rect x="1848.2" y="133.74" width="6.0" height="1.5" fill="#a0a0a0" opacity="0.5"/>
<rect x="1855.4" y="133.74" width="12.0" height="1.5" fill="#a0a0a0" opacity="0.5"/>
<rect x="1868.6" y="133.74" width="4.0" height="1.5" fill="#a0a0a0" opacity="0.5"/>
<rect x="1873.8" y="133.74" width="7.0" height="1.5" fill="#a0a0a0" opacity="0.5"/>
<rect x="1882.0" y="133.74" width="6.0" height="1.5" fill="#a0a0a0" opacity="0.5"/>
<rect x="1889.2" y="133.74" width="1.8" height="1.5" fill="#a0a0a0" opacity="0.5"/>
<rect x="1798.0" y="135.58" width="3.0" height="1.5" fill="#a0a0a0" opacity="0.5"/>
<rect x="1802.2" y="135.58" width="4.0" height="1.5" fill="#a0a0a0" opacity="0.5"/>
<rect x="1807.4" y="135.58" width="7.0" height="1.5" fill="#a0a0a0" opacity="0.5"/>
<rect x="1815.6" y="135.58" width="3.1" height="1.5" fill="#a0a0a0" opacity="0.5"/>
<rect x="1798.0" y="137.52" width="12.0" height="1.5" fill="#a0a0a0" opacity="0.5"/>
<rect x="1811.2" y="137.52" width="6.0" height="1.5" fill="#a0a0a0" opacity="0.5"/>
<rect x="1818.4" y="137.52" width="3.0" height="1.5" fill="#a0a0a0" opacity="0.5"/>
<rect x="1822.6" y="137.52" width="3.0" height="1.5" fill="#a0a0a0" opacity="0.5"/>
<rect x="1826.8" y="137.52" width="5.0" height="1.5" fill="#a0a0a0" opacity="0.5"/>
<rect x="1833.0" y="137.52" width="7.0" height="1.5" fill="#a0a0a0" opacity="0.5"/>
<rect x="1841.2" y="137.52" width="8.0" height="1.5" fill="#a0a0a0" opacity="0.5"/>
<rect x="1850.4" y="137.52" width="5.0" height="1.5" fill="#a0a0a0" opacity="0.5"/>
<rect x="1856.6" y="137.52" width="0.4" height="1.5" fill="#a0a0a0" opacity="0.5"/>
<rect x="1798" y="139.38" width="101" height="2.1" fill="#2b5d92"/>
<rect x="1798.0" y="139.68" width="8.0" height="1.5" fill="#a0a0a0" opacity="0.5"/>
<rect x="1807.2" y="139.68" width="5.0" height="1.5" fill="#a0a0a0" opacity="0.5"/>
<rect x="1813.4" y="139.68" width="12.0" height="1.5" fill="#a0a0a0" opacity="0.5"/>
<rect x="1826.6" y="139.68" width="8.0" height="1.5" fill="#a0a0a0" opacity="0.5"/>
<rect x="1835.8" y="139.68" width="5.0" height="1.5" fill="#a0a0a0" opacity="0.5"/>
<rect x="1842.0" y="139.68" width="3.0" height="1.5" fill="#a0a0a0" opacity="0.5"/>
<rect x="1846.2" y="139.68" width="3.0" height="1.5" fill="#a0a0a0" opacity="0.5"/>
<rect x="1850.4" y="139.68" width="12.0" height="1.5" fill="#a0a0a0" opacity="0.5"/>
<rect x="1863.6" y="139.68" width="8.0" height="1.5" fill="#a0a0a0" opacity="0.5"/>
<rect x="1872.8" y="139.68" width="7.0" height="1.5" fill="#a0a0a0" opacity="0.5"/>
<rect x="1881.0" y="139.68" width="3.0" height="1.5" fill="#a0a0a0" opacity="0.5"/>
<rect x="1885.2" y="139.68" width="3.0" height="1.5" fill="#a0a0a0" opacity="0.5"/>
<rect x="1889.4" y="139.68" width="1.6" height="1.5" fill="#a0a0a0" opacity="0.5"/>
<rect x="1867.1" y="139.38" width="4.7" height="2.1" fill="#3794ff"/>
<rect x="1798" y="141.32" width="101" height="2.1" fill="#2b5d92"/>
<rect x="1798.0" y="141.62" width="12.0" height="1.5" fill="#a0a0a0" opacity="0.5"/>
<rect x="1811.2" y="141.62" width="4.0" height="1.5" fill="#a0a0a0" opacity="0.5"/>
<rect x="1816.4" y="141.62" width="7.0" height="1.5" fill="#a0a0a0" opacity="0.5"/>
<rect x="1824.6" y="141.62" width="8.0" height="1.5" fill="#a0a0a0" opacity="0.5"/>
<rect x="1833.8" y="141.62" width="3.3" height="1.5" fill="#a0a0a0" opacity="0.5"/>
<rect x="1815.1" y="141.32" width="5.0" height="2.1" fill="#3794ff"/>
<rect x="1798.0" y="143.78" width="4.0" height="1.5" fill="#a0a0a0" opacity="0.5"/>
<rect x="1803.2" y="143.78" width="4.0" height="1.5" fill="#a0a0a0" opacity="0.5"/>
<rect x="1808.4" y="143.78" width="12.0" height="1.5" fill="#a0a0a0" opacity="0.5"/>
<rect x="1821.6" y="143.78" width="8.0" height="1.5" fill="#a0a0a0" opacity="0.5"/>
<rect x="1830.8" y="143.78" width="3.0" height="1.5" fill="#a0a0a0" opacity="0.5"/>
<rect x="1835.0" y="143.78" width="5.0" height="1.5" fill="#a0a0a0" opacity="0.5"/>
<rect x="1841.2" y="143.78" width="8.0" height="1.5" fill="#a0a0a0" opacity="0.5"/>
<rect x="1850.4" y="143.78" width="8.0" height="1.5" fill="#a0a0a0" opacity="0.5"/>
<rect x="1859.6" y="143.78" width="4.0" height="1.5" fill="#a0a0a0" opacity="0.5"/>
<rect x="1864.8" y="143.78" width="1.4" height="1.5" fill="#a0a0a0" opacity="0.5"/>
<rect x="1798.0" y="145.61" width="4.0" height="1.5" fill="#a0a0a0" opacity="0.5"/>
<rect x="1803.2" y="145.61" width="10.0" height="1.5" fill="#a0a0a0" opacity="0.5"/>
<rect x="1814.4" y="145.61" width="3.0" height="1.5" fill="#a0a0a0" opacity="0.5"/>
<rect x="1818.6" y="145.61" width="12.0" height="1.5" fill="#a0a0a0" opacity="0.5"/>
<rect x="1831.8" y="145.61" width="3.0" height="1.5" fill="#a0a0a0" opacity="0.5"/>
<rect x="1836.0" y="145.61" width="10.0" height="1.5" fill="#a0a0a0" opacity="0.5"/>
<rect x="1847.2" y="145.61" width="10.0" height="1.5" fill="#a0a0a0" opacity="0.5"/>
<rect x="1858.4" y="145.61" width="3.0" height="1.5" fill="#a0a0a0" opacity="0.5"/>
<rect x="1862.6" y="145.61" width="2.5" height="1.5" fill="#a0a0a0" opacity="0.5"/>
<rect x="1798" y="147.47" width="101" height="2.1" fill="#2b5d92"/>
<rect x="1798.0" y="147.77" width="4.0" height="1.5" fill="#a0a0a0" opacity="0.5"/>
<rect x="1803.2" y="147.77" width="4.0" height="1.5" fill="#a0a0a0" opacity="0.5"/>
<rect x="1808.4" y="147.77" width="4.0" height="1.5" fill="#a0a0a0" opacity="0.5"/>
<rect x="1813.6" y="147.77" width="7.0" height="1.5" fill="#a0a0a0" opacity="0.5"/>
<rect x="1821.8" y="147.77" width="10.0" height="1.5" fill="#a0a0a0" opacity="0.5"/>
<rect x="1833.0" y="147.77" width="8.0" height="1.5" fill="#a0a0a0" opacity="0.5"/>
<rect x="1842.2" y="147.77" width="10.0" height="1.5" fill="#a0a0a0" opacity="0.5"/>
<rect x="1853.4" y="147.77" width="12.0" height="1.5" fill="#a0a0a0" opacity="0.5"/>
<rect x="1866.6" y="147.77" width="12.0" height="1.5" fill="#a0a0a0" opacity="0.5"/>
<rect x="1879.8" y="147.77" width="4.7" height="1.5" fill="#a0a0a0" opacity="0.5"/>
<rect x="1867.1" y="147.47" width="4.7" height="2.1" fill="#3794ff"/>
<rect x="1798.0" y="149.93" width="4.0" height="1.5" fill="#a0a0a0" opacity="0.5"/>
<rect x="1803.2" y="149.93" width="3.0" height="1.5" fill="#a0a0a0" opacity="0.5"/>
<rect x="1807.4" y="149.93" width="7.0" height="1.5" fill="#a0a0a0" opacity="0.5"/>
<rect x="1815.6" y="149.93" width="4.0" height="1.5" fill="#a0a0a0" opacity="0.5"/>
<rect x="1820.8" y="149.93" width="12.0" height="1.5" fill="#a0a0a0" opacity="0.5"/>
<rect x="1834.0" y="149.93" width="3.0" height="1.5" fill="#a0a0a0" opacity="0.5"/>
<rect x="1838.2" y="149.93" width="6.0" height="1.5" fill="#a0a0a0" opacity="0.5"/>
<rect x="1845.4" y="149.93" width="4.0" height="1.5" fill="#a0a0a0" opacity="0.5"/>
<rect x="1850.6" y="149.93" width="12.0" height="1.5" fill="#a0a0a0" opacity="0.5"/>
<rect x="1863.8" y="149.93" width="3.5" height="1.5" fill="#a0a0a0" opacity="0.5"/>
<rect x="1798" y="151.46" width="101" height="2.1" fill="#2b5d92"/>
<rect x="1798.0" y="151.76" width="7.0" height="1.5" fill="#a0a0a0" opacity="0.5"/>
<rect x="1806.2" y="151.76" width="3.0" height="1.5" fill="#a0a0a0" opacity="0.5"/>
<rect x="1810.4" y="151.76" width="8.0" height="1.5" fill="#a0a0a0" opacity="0.5"/>
<rect x="1819.6" y="151.76" width="7.0" height="1.5" fill="#a0a0a0" opacity="0.5"/>
<rect x="1827.8" y="151.76" width="5.0" height="1.5" fill="#a0a0a0" opacity="0.5"/>
<rect x="1834.0" y="151.76" width="6.0" height="1.5" fill="#a0a0a0" opacity="0.5"/>
<rect x="1841.2" y="151.76" width="5.0" height="1.5" fill="#a0a0a0" opacity="0.5"/>
<rect x="1847.4" y="151.76" width="8.0" height="1.5" fill="#a0a0a0" opacity="0.5"/>
<rect x="1856.6" y="151.76" width="12.0" height="1.5" fill="#a0a0a0" opacity="0.5"/>
<rect x="1869.8" y="151.76" width="12.0" height="1.5" fill="#a0a0a0" opacity="0.5"/>
<rect x="1883.0" y="151.76" width="6.0" height="1.5" fill="#a0a0a0" opacity="0.5"/>
<rect x="1890.2" y="151.76" width="1.9" height="1.5" fill="#a0a0a0" opacity="0.5"/>
<rect x="1866.2" y="151.46" width="11.9" height="2.1" fill="#3794ff"/>
<rect x="1798" y="153.40" width="101" height="2.1" fill="#2b5d92"/>
<rect x="1798.0" y="153.70" width="10.0" height="1.5" fill="#a0a0a0" opacity="0.5"/>
<rect x="1809.2" y="153.70" width="7.0" height="1.5" fill="#a0a0a0" opacity="0.5"/>
<rect x="1817.4" y="153.70" width="6.0" height="1.5" fill="#a0a0a0" opacity="0.5"/>
<rect x="1824.6" y="153.70" width="10.0" height="1.5" fill="#a0a0a0" opacity="0.5"/>
<rect x="1835.8" y="153.70" width="6.0" height="1.5" fill="#a0a0a0" opacity="0.5"/>
<rect x="1843.0" y="153.70" width="6.0" height="1.5" fill="#a0a0a0" opacity="0.5"/>
<rect x="1850.2" y="153.70" width="10.0" height="1.5" fill="#a0a0a0" opacity="0.5"/>
<rect x="1861.4" y="153.70" width="6.0" height="1.5" fill="#a0a0a0" opacity="0.5"/>
<rect x="1868.6" y="153.70" width="8.0" height="1.5" fill="#a0a0a0" opacity="0.5"/>
<rect x="1877.8" y="153.70" width="6.0" height="1.5" fill="#a0a0a0" opacity="0.5"/>
<rect x="1885.0" y="153.70" width="3.9" height="1.5" fill="#a0a0a0" opacity="0.5"/>
<rect x="1881.3" y="153.40" width="6.7" height="2.1" fill="#3794ff"/>
<rect x="1798.0" y="155.86" width="5.0" height="1.5" fill="#a0a0a0" opacity="0.5"/>
<rect x="1804.2" y="155.86" width="12.0" height="1.5" fill="#a0a0a0" opacity="0.5"/>
<rect x="1817.4" y="155.86" width="8.0" height="1.5" fill="#a0a0a0" opacity="0.5"/>
<rect x="1826.6" y="155.86" width="3.0" height="1.5" fill="#a0a0a0" opacity="0.5"/>
<rect x="1830.8" y="155.86" width="4.0" height="1.5" fill="#a0a0a0" opacity="0.5"/>
<rect x="1836.0" y="155.86" width="7.0" height="1.5" fill="#a0a0a0" opacity="0.5"/>
<rect x="1844.2" y="155.86" width="5.0" height="1.5" fill="#a0a0a0" opacity="0.5"/>
<rect x="1850.4" y="155.86" width="4.0" height="1.5" fill="#a0a0a0" opacity="0.5"/>
<rect x="1855.6" y="155.86" width="7.4" height="1.5" fill="#a0a0a0" opacity="0.5"/>
<rect x="1798.0" y="157.80" width="12.0" height="1.5" fill="#a0a0a0" opacity="0.5"/>
<rect x="1811.2" y="157.80" width="7.0" height="1.5" fill="#a0a0a0" opacity="0.5"/>
<rect x="1819.4" y="157.80" width="6.0" height="1.5" fill="#a0a0a0" opacity="0.5"/>
<rect x="1826.6" y="157.80" width="10.0" height="1.5" fill="#a0a0a0" opacity="0.5"/>
<rect x="1837.8" y="157.80" width="10.0" height="1.5" fill="#a0a0a0" opacity="0.5"/>
<rect x="1849.0" y="157.80" width="12.0" height="1.5" fill="#a0a0a0" opacity="0.5"/>
<rect x="1862.2" y="157.80" width="6.2" height="1.5" fill="#a0a0a0" opacity="0.5"/>
<rect x="1798.0" y="159.74" width="12.0" height="1.5" fill="#a0a0a0" opacity="0.5"/>
<rect x="1811.2" y="159.74" width="8.0" height="1.5" fill="#a0a0a0" opacity="0.5"/>
<rect x="1820.4" y="159.74" width="4.0" height="1.5" fill="#a0a0a0" opacity="0.5"/>
<rect x="1825.6" y="159.74" width="3.0" height="1.5" fill="#a0a0a0" opacity="0.5"/>
<rect x="1829.8" y="159.74" width="7.0" height="1.5" fill="#a0a0a0" opacity="0.5"/>
<rect x="1838.0" y="159.74" width="3.0" height="1.5" fill="#a0a0a0" opacity="0.5"/>
<rect x="1842.2" y="159.74" width="7.0" height="1.5" fill="#a0a0a0" opacity="0.5"/>
<rect x="1850.4" y="159.74" width="8.0" height="1.5" fill="#a0a0a0" opacity="0.5"/>
<rect x="1859.6" y="159.74" width="7.0" height="1.5" fill="#a0a0a0" opacity="0.5"/>
<rect x="1867.8" y="159.74" width="3.0" height="1.5" fill="#a0a0a0" opacity="0.5"/>
<rect x="1872.0" y="159.74" width="0.7" height="1.5" fill="#a0a0a0" opacity="0.5"/>
<rect x="1798.0" y="161.79" width="10.0" height="1.5" fill="#a0a0a0" opacity="0.5"/>
<rect x="1809.2" y="161.79" width="12.0" height="1.5" fill="#a0a0a0" opacity="0.5"/>
<rect x="1822.4" y="161.79" width="6.0" height="1.5" fill="#a0a0a0" opacity="0.5"/>
<rect x="1829.6" y="161.79" width="3.0" height="1.5" fill="#a0a0a0" opacity="0.5"/>
<rect x="1833.8" y="161.79" width="7.0" height="1.5" fill="#a0a0a0" opacity="0.5"/>
<rect x="1842.0" y="161.79" width="6.0" height="1.5" fill="#a0a0a0" opacity="0.5"/>
<rect x="1849.2" y="161.79" width="5.0" height="1.5" fill="#a0a0a0" opacity="0.5"/>
<rect x="1855.4" y="161.79" width="3.0" height="1.5" fill="#a0a0a0" opacity="0.5"/>
<rect x="1859.6" y="161.79" width="4.0" height="1.5" fill="#a0a0a0" opacity="0.5"/>
<rect x="1864.8" y="161.79" width="1.4" height="1.5" fill="#a0a0a0" opacity="0.5"/>
<rect x="1798.0" y="163.63" width="4.0" height="1.5" fill="#a0a0a0" opacity="0.5"/>
<rect x="1803.2" y="163.63" width="8.0" height="1.5" fill="#a0a0a0" opacity="0.5"/>
<rect x="1812.4" y="163.63" width="4.0" height="1.5" fill="#a0a0a0" opacity="0.5"/>
<rect x="1817.6" y="163.63" width="6.0" height="1.5" fill="#a0a0a0" opacity="0.5"/>
<rect x="1824.8" y="163.63" width="6.0" height="1.5" fill="#a0a0a0" opacity="0.5"/>
<rect x="1832.0" y="163.63" width="12.0" height="1.5" fill="#a0a0a0" opacity="0.5"/>
<rect x="1845.2" y="163.63" width="7.0" height="1.5" fill="#a0a0a0" opacity="0.5"/>
<rect x="1853.4" y="163.63" width="5.0" height="1.5" fill="#a0a0a0" opacity="0.5"/>
<rect x="1859.6" y="163.63" width="3.0" height="1.5" fill="#a0a0a0" opacity="0.5"/>
<rect x="1863.8" y="163.63" width="9.9" height="1.5" fill="#a0a0a0" opacity="0.5"/>
<rect x="1798.0" y="165.57" width="3.0" height="1.5" fill="#a0a0a0" opacity="0.5"/>
<rect x="1802.2" y="165.57" width="5.0" height="1.5" fill="#a0a0a0" opacity="0.5"/>
<rect x="1808.4" y="165.57" width="6.0" height="1.5" fill="#a0a0a0" opacity="0.5"/>
<rect x="1815.6" y="165.57" width="7.0" height="1.5" fill="#a0a0a0" opacity="0.5"/>
<rect x="1823.8" y="165.57" width="8.0" height="1.5" fill="#a0a0a0" opacity="0.5"/>
<rect x="1833.0" y="165.57" width="5.0" height="1.5" fill="#a0a0a0" opacity="0.5"/>
<rect x="1839.2" y="165.57" width="10.0" height="1.5" fill="#a0a0a0" opacity="0.5"/>
<rect x="1850.4" y="165.57" width="6.0" height="1.5" fill="#a0a0a0" opacity="0.5"/>
<rect x="1857.6" y="165.57" width="4.0" height="1.5" fill="#a0a0a0" opacity="0.5"/>
<rect x="1862.8" y="165.57" width="6.6" height="1.5" fill="#a0a0a0" opacity="0.5"/>
<rect x="1798" y="167.42" width="101" height="2.1" fill="#2b5d92"/>
<rect x="1798.0" y="167.72" width="10.0" height="1.5" fill="#a0a0a0" opacity="0.5"/>
<rect x="1809.2" y="167.72" width="5.0" height="1.5" fill="#a0a0a0" opacity="0.5"/>
<rect x="1815.4" y="167.72" width="12.0" height="1.5" fill="#a0a0a0" opacity="0.5"/>
<rect x="1828.6" y="167.72" width="12.0" height="1.5" fill="#a0a0a0" opacity="0.5"/>
<rect x="1841.8" y="167.72" width="6.0" height="1.5" fill="#a0a0a0" opacity="0.5"/>
<rect x="1849.0" y="167.72" width="3.0" height="1.5" fill="#a0a0a0" opacity="0.5"/>
<rect x="1853.2" y="167.72" width="10.0" height="1.5" fill="#a0a0a0" opacity="0.5"/>
<rect x="1864.4" y="167.72" width="8.0" height="1.5" fill="#a0a0a0" opacity="0.5"/>
<rect x="1873.6" y="167.72" width="12.0" height="1.5" fill="#a0a0a0" opacity="0.5"/>
<rect x="1886.8" y="167.72" width="8.0" height="1.5" fill="#a0a0a0" opacity="0.5"/>
<rect x="1874.3" y="167.42" width="14.8" height="2.1" fill="#3794ff"/>
<rect x="1798.0" y="169.67" width="6.0" height="1.5" fill="#a0a0a0" opacity="0.5"/>
<rect x="1805.2" y="169.67" width="3.8" height="1.5" fill="#a0a0a0" opacity="0.5"/>
<rect x="1798.0" y="171.50" width="4.0" height="1.5" fill="#a0a0a0" opacity="0.5"/>
<rect x="1803.2" y="171.50" width="6.0" height="1.5" fill="#a0a0a0" opacity="0.5"/>
<rect x="1810.4" y="171.50" width="6.0" height="1.5" fill="#a0a0a0" opacity="0.5"/>
<rect x="1817.6" y="171.50" width="10.0" height="1.5" fill="#a0a0a0" opacity="0.5"/>
<rect x="1828.8" y="171.50" width="4.0" height="1.5" fill="#a0a0a0" opacity="0.5"/>
<rect x="1834.0" y="171.50" width="7.0" height="1.5" fill="#a0a0a0" opacity="0.5"/>
<rect x="1842.2" y="171.50" width="8.0" height="1.5" fill="#a0a0a0" opacity="0.5"/>
<rect x="1851.4" y="171.50" width="7.0" height="1.5" fill="#a0a0a0" opacity="0.5"/>
<rect x="1859.6" y="171.50" width="3.0" height="1.5" fill="#a0a0a0" opacity="0.5"/>
<rect x="1863.8" y="171.50" width="8.0" height="1.5" fill="#a0a0a0" opacity="0.5"/>
<rect x="1873.0" y="171.50" width="4.0" height="1.5" fill="#a0a0a0" opacity="0.5"/>
<rect x="1878.2" y="171.50" width="3.0" height="1.5" fill="#a0a0a0" opacity="0.5"/>
<rect x="1882.4" y="171.50" width="6.5" height="1.5" fill="#a0a0a0" opacity="0.5"/>
<rect x="1798" y="173.36" width="101" height="2.1" fill="#2b5d92"/>
<rect x="1798.0" y="173.66" width="8.0" height="1.5" fill="#a0a0a0" opacity="0.5"/>
<rect x="1807.2" y="173.66" width="10.0" height="1.5" fill="#a0a0a0" opacity="0.5"/>
<rect x="1818.4" y="173.66" width="7.0" height="1.5" fill="#a0a0a0" opacity="0.5"/>
<rect x="1826.6" y="173.66" width="12.0" height="1.5" fill="#a0a0a0" opacity="0.5"/>
<rect x="1839.8" y="173.66" width="3.0" height="1.5" fill="#a0a0a0" opacity="0.5"/>
<rect x="1844.0" y="173.66" width="6.0" height="1.5" fill="#a0a0a0" opacity="0.5"/>
<rect x="1851.2" y="173.66" width="3.1" height="1.5" fill="#a0a0a0" opacity="0.5"/>
<rect x="1822.0" y="173.36" width="15.1" height="2.1" fill="#3794ff"/>
<rect x="1798.0" y="175.82" width="10.0" height="1.5" fill="#a0a0a0" opacity="0.5"/>
<rect x="1809.2" y="175.82" width="3.0" height="1.5" fill="#a0a0a0" opacity="0.5"/>
<rect x="1813.4" y="175.82" width="5.0" height="1.5" fill="#a0a0a0" opacity="0.5"/>
<rect x="1819.6" y="175.82" width="8.0" height="1.5" fill="#a0a0a0" opacity="0.5"/>
<rect x="1828.8" y="175.82" width="5.0" height="1.5" fill="#a0a0a0" opacity="0.5"/>
<rect x="1835.0" y="175.82" width="12.0" height="1.5" fill="#a0a0a0" opacity="0.5"/>
<rect x="1848.2" y="175.82" width="5.0" height="1.5" fill="#a0a0a0" opacity="0.5"/>
<rect x="1854.4" y="175.82" width="12.0" height="1.5" fill="#a0a0a0" opacity="0.5"/>
<rect x="1867.6" y="175.82" width="2.9" height="1.5" fill="#a0a0a0" opacity="0.5"/>
<rect x="1798.0" y="177.43" width="4.0" height="1.5" fill="#a0a0a0" opacity="0.5"/>
<rect x="1803.2" y="177.43" width="6.0" height="1.5" fill="#a0a0a0" opacity="0.5"/>
<rect x="1810.4" y="177.43" width="3.5" height="1.5" fill="#a0a0a0" opacity="0.5"/>
<rect x="1798.0" y="179.59" width="7.0" height="1.5" fill="#a0a0a0" opacity="0.5"/>
<rect x="1806.2" y="179.59" width="5.0" height="1.5" fill="#a0a0a0" opacity="0.5"/>
<rect x="1798.0" y="181.53" width="5.6" height="1.5" fill="#a0a0a0" opacity="0.5"/>
<rect x="1798" y="183.39" width="101" height="2.1" fill="#2b5d92"/>
<rect x="1798.0" y="183.69" width="7.0" height="1.5" fill="#a0a0a0" opacity="0.5"/>
<rect x="1806.2" y="183.69" width="10.0" height="1.5" fill="#a0a0a0" opacity="0.5"/>
<rect x="1817.4" y="183.69" width="6.0" height="1.5" fill="#a0a0a0" opacity="0.5"/>
<rect x="1824.6" y="183.69" width="7.0" height="1.5" fill="#a0a0a0" opacity="0.5"/>
<rect x="1832.8" y="183.69" width="5.0" height="1.5" fill="#a0a0a0" opacity="0.5"/>
<rect x="1839.0" y="183.69" width="7.0" height="1.5" fill="#a0a0a0" opacity="0.5"/>
<rect x="1847.2" y="183.69" width="6.1" height="1.5" fill="#a0a0a0" opacity="0.5"/>
<rect x="1845.2" y="183.39" width="7.9" height="2.1" fill="#3794ff"/>
<rect x="1798.0" y="185.85" width="6.0" height="1.5" fill="#a0a0a0" opacity="0.5"/>
<rect x="1805.2" y="185.85" width="10.0" height="1.5" fill="#a0a0a0" opacity="0.5"/>
<rect x="1816.4" y="185.85" width="4.0" height="1.5" fill="#a0a0a0" opacity="0.5"/>
<rect x="1821.6" y="185.85" width="3.0" height="1.5" fill="#a0a0a0" opacity="0.5"/>
<rect x="1825.8" y="185.85" width="10.0" height="1.5" fill="#a0a0a0" opacity="0.5"/>
<rect x="1837.0" y="185.85" width="3.0" height="1.5" fill="#a0a0a0" opacity="0.5"/>
<rect x="1841.2" y="185.85" width="3.0" height="1.5" fill="#a0a0a0" opacity="0.5"/>
<rect x="1845.4" y="185.85" width="10.0" height="1.5" fill="#a0a0a0" opacity="0.5"/>
<rect x="1856.6" y="185.85" width="4.0" height="1.5" fill="#a0a0a0" opacity="0.5"/>
<rect x="1861.8" y="185.85" width="12.0" height="1.5" fill="#a0a0a0" opacity="0.5"/>
<rect x="1875.0" y="185.85" width="4.0" height="1.5" fill="#a0a0a0" opacity="0.5"/>
<rect x="1880.2" y="185.85" width="0.0" height="1.5" fill="#a0a0a0" opacity="0.5"/>
<rect x="1798.0" y="187.68" width="4.0" height="1.5" fill="#a0a0a0" opacity="0.5"/>
<rect x="1803.2" y="187.68" width="12.0" height="1.5" fill="#a0a0a0" opacity="0.5"/>
<rect x="1816.4" y="187.68" width="10.0" height="1.5" fill="#a0a0a0" opacity="0.5"/>
<rect x="1827.6" y="187.68" width="10.0" height="1.5" fill="#a0a0a0" opacity="0.5"/>
<rect x="1838.8" y="187.68" width="7.0" height="1.5" fill="#a0a0a0" opacity="0.5"/>
<rect x="1847.0" y="187.68" width="6.0" height="1.5" fill="#a0a0a0" opacity="0.5"/>
<rect x="1854.2" y="187.68" width="12.0" height="1.5" fill="#a0a0a0" opacity="0.5"/>
<rect x="1867.4" y="187.68" width="12.0" height="1.5" fill="#a0a0a0" opacity="0.5"/>
<rect x="1880.6" y="187.68" width="5.0" height="1.5" fill="#a0a0a0" opacity="0.5"/>
<rect x="1886.8" y="187.68" width="7.4" height="1.5" fill="#a0a0a0" opacity="0.5"/>
<rect x="1798.0" y="189.62" width="10.0" height="1.5" fill="#a0a0a0" opacity="0.5"/>
<rect x="1809.2" y="189.62" width="4.1" height="1.5" fill="#a0a0a0" opacity="0.5"/>
<rect x="1798.0" y="191.67" width="8.0" height="1.5" fill="#a0a0a0" opacity="0.5"/>
<rect x="1807.2" y="191.67" width="4.0" height="1.5" fill="#a0a0a0" opacity="0.5"/>
<rect x="1812.4" y="191.67" width="6.0" height="1.5" fill="#a0a0a0" opacity="0.5"/>
<rect x="1819.6" y="191.67" width="10.0" height="1.5" fill="#a0a0a0" opacity="0.5"/>
<rect x="1830.8" y="191.67" width="3.0" height="1.5" fill="#a0a0a0" opacity="0.5"/>
<rect x="1835.0" y="191.67" width="7.0" height="1.5" fill="#a0a0a0" opacity="0.5"/>
<rect x="1843.2" y="191.67" width="5.0" height="1.5" fill="#a0a0a0" opacity="0.5"/>
<rect x="1849.4" y="191.67" width="3.0" height="1.5" fill="#a0a0a0" opacity="0.5"/>
<rect x="1853.6" y="191.67" width="3.0" height="1.5" fill="#a0a0a0" opacity="0.5"/>
<rect x="1857.8" y="191.67" width="6.0" height="1.5" fill="#a0a0a0" opacity="0.5"/>
<rect x="1865.0" y="191.67" width="5.0" height="1.5" fill="#a0a0a0" opacity="0.5"/>
<rect x="1871.2" y="191.67" width="6.0" height="1.5" fill="#a0a0a0" opacity="0.5"/>
<rect x="1878.4" y="191.67" width="3.0" height="1.5" fill="#a0a0a0" opacity="0.5"/>
<rect x="1882.6" y="191.67" width="7.0" height="1.5" fill="#a0a0a0" opacity="0.5"/>
<rect x="1890.8" y="191.67" width="3.4" height="1.5" fill="#a0a0a0" opacity="0.5"/>
<rect x="1798.0" y="193.61" width="8.0" height="1.5" fill="#a0a0a0" opacity="0.5"/>
<rect x="1807.2" y="193.61" width="6.0" height="1.5" fill="#a0a0a0" opacity="0.5"/>
<rect x="1814.4" y="193.61" width="9.7" height="1.5" fill="#a0a0a0" opacity="0.5"/>
<rect x="1798.0" y="195.56" width="4.0" height="1.5" fill="#a0a0a0" opacity="0.5"/>
<rect x="1803.2" y="195.56" width="12.0" height="1.5" fill="#a0a0a0" opacity="0.5"/>
<rect x="1816.4" y="195.56" width="4.0" height="1.5" fill="#a0a0a0" opacity="0.5"/>
<rect x="1821.6" y="195.56" width="7.0" height="1.5" fill="#a0a0a0" opacity="0.5"/>
<rect x="1829.8" y="195.56" width="6.0" height="1.5" fill="#a0a0a0" opacity="0.5"/>
<rect x="1837.0" y="195.56" width="10.0" height="1.5" fill="#a0a0a0" opacity="0.5"/>
<rect x="1848.2" y="195.56" width="3.0" height="1.5" fill="#a0a0a0" opacity="0.5"/>
<rect x="1852.4" y="195.56" width="10.0" height="1.5" fill="#a0a0a0" opacity="0.5"/>
<rect x="1863.6" y="195.56" width="10.0" height="1.5" fill="#a0a0a0" opacity="0.5"/>
<rect x="1874.8" y="195.56" width="5.0" height="1.5" fill="#a0a0a0" opacity="0.5"/>
<rect x="1881.0" y="195.56" width="6.0" height="1.5" fill="#a0a0a0" opacity="0.5"/>
<rect x="1888.2" y="195.56" width="6.0" height="1.5" fill="#a0a0a0" opacity="0.5"/>
<rect x="1798.0" y="197.61" width="6.0" height="1.5" fill="#a0a0a0" opacity="0.5"/>
<rect x="1805.2" y="197.61" width="5.0" height="1.5" fill="#a0a0a0" opacity="0.5"/>
<rect x="1811.4" y="197.61" width="6.0" height="1.5" fill="#a0a0a0" opacity="0.5"/>
<rect x="1818.6" y="197.61" width="5.5" height="1.5" fill="#a0a0a0" opacity="0.5"/>
<rect x="1798.0" y="199.55" width="5.0" height="1.5" fill="#a0a0a0" opacity="0.5"/>
<rect x="1804.2" y="199.55" width="8.0" height="1.5" fill="#a0a0a0" opacity="0.5"/>
<rect x="1813.4" y="199.55" width="8.0" height="1.5" fill="#a0a0a0" opacity="0.5"/>
<rect x="1822.6" y="199.55" width="6.0" height="1.5" fill="#a0a0a0" opacity="0.5"/>
<rect x="1829.8" y="199.55" width="6.0" height="1.5" fill="#a0a0a0" opacity="0.5"/>
<rect x="1837.0" y="199.55" width="6.0" height="1.5" fill="#a0a0a0" opacity="0.5"/>
<rect x="1844.2" y="199.55" width="4.0" height="1.5" fill="#a0a0a0" opacity="0.5"/>
<rect x="1849.4" y="199.55" width="5.0" height="1.5" fill="#a0a0a0" opacity="0.5"/>
<rect x="1855.6" y="199.55" width="6.0" height="1.5" fill="#a0a0a0" opacity="0.5"/>
<rect x="1862.8" y="199.55" width="5.0" height="1.5" fill="#a0a0a0" opacity="0.5"/>
<rect x="1869.0" y="199.55" width="4.0" height="1.5" fill="#a0a0a0" opacity="0.5"/>
<rect x="1874.2" y="199.55" width="0.6" height="1.5" fill="#a0a0a0" opacity="0.5"/>
<rect x="1798.0" y="201.49" width="10.0" height="1.5" fill="#a0a0a0" opacity="0.5"/>
<rect x="1809.2" y="201.49" width="4.0" height="1.5" fill="#a0a0a0" opacity="0.5"/>
<rect x="1814.4" y="201.49" width="10.0" height="1.5" fill="#a0a0a0" opacity="0.5"/>
<rect x="1825.6" y="201.49" width="10.0" height="1.5" fill="#a0a0a0" opacity="0.5"/>
<rect x="1836.8" y="201.49" width="5.0" height="1.5" fill="#a0a0a0" opacity="0.5"/>
<rect x="1843.0" y="201.49" width="6.0" height="1.5" fill="#a0a0a0" opacity="0.5"/>
<rect x="1850.2" y="201.49" width="10.0" height="1.5" fill="#a0a0a0" opacity="0.5"/>
<rect x="1861.4" y="201.49" width="3.0" height="1.5" fill="#a0a0a0" opacity="0.5"/>
<rect x="1865.6" y="201.49" width="4.0" height="1.5" fill="#a0a0a0" opacity="0.5"/>
<rect x="1870.8" y="201.49" width="6.0" height="1.5" fill="#a0a0a0" opacity="0.5"/>
<rect x="1878.0" y="201.49" width="8.0" height="1.5" fill="#a0a0a0" opacity="0.5"/>
<rect x="1887.2" y="201.49" width="7.0" height="1.5" fill="#a0a0a0" opacity="0.5"/>
<rect x="1798" y="203.56" width="101" height="2.1" fill="#2b5d92"/>
<rect x="1798.0" y="203.86" width="4.0" height="1.5" fill="#a0a0a0" opacity="0.5"/>
<rect x="1803.2" y="203.86" width="8.0" height="1.5" fill="#a0a0a0" opacity="0.5"/>
<rect x="1812.4" y="203.86" width="6.0" height="1.5" fill="#a0a0a0" opacity="0.5"/>
<rect x="1819.6" y="203.86" width="4.0" height="1.5" fill="#a0a0a0" opacity="0.5"/>
<rect x="1824.8" y="203.86" width="12.0" height="1.5" fill="#a0a0a0" opacity="0.5"/>
<rect x="1838.0" y="203.86" width="4.0" height="1.5" fill="#a0a0a0" opacity="0.5"/>
<rect x="1843.2" y="203.86" width="3.0" height="1.5" fill="#a0a0a0" opacity="0.5"/>
<rect x="1847.4" y="203.86" width="3.0" height="1.5" fill="#a0a0a0" opacity="0.5"/>
<rect x="1851.6" y="203.86" width="12.0" height="1.5" fill="#a0a0a0" opacity="0.5"/>
<rect x="1864.8" y="203.86" width="5.0" height="1.5" fill="#a0a0a0" opacity="0.5"/>
<rect x="1871.0" y="203.86" width="6.0" height="1.5" fill="#a0a0a0" opacity="0.5"/>
<rect x="1878.2" y="203.86" width="5.0" height="1.5" fill="#a0a0a0" opacity="0.5"/>
<rect x="1884.4" y="203.86" width="4.0" height="1.5" fill="#a0a0a0" opacity="0.5"/>
<rect x="1866.0" y="203.56" width="10.1" height="2.1" fill="#3794ff"/>
<rect x="1798.0" y="205.70" width="6.0" height="1.5" fill="#a0a0a0" opacity="0.5"/>
<rect x="1805.2" y="205.70" width="5.0" height="1.5" fill="#a0a0a0" opacity="0.5"/>
<rect x="1811.4" y="205.70" width="5.0" height="1.5" fill="#a0a0a0" opacity="0.5"/>
<rect x="1817.6" y="205.70" width="7.0" height="1.5" fill="#a0a0a0" opacity="0.5"/>
<rect x="1825.8" y="205.70" width="4.0" height="1.5" fill="#a0a0a0" opacity="0.5"/>
<rect x="1831.0" y="205.70" width="3.0" height="1.5" fill="#a0a0a0" opacity="0.5"/>
<rect x="1835.2" y="205.70" width="5.0" height="1.5" fill="#a0a0a0" opacity="0.5"/>
<rect x="1841.4" y="205.70" width="12.0" height="1.5" fill="#a0a0a0" opacity="0.5"/>
<rect x="1854.6" y="205.70" width="4.0" height="1.5" fill="#a0a0a0" opacity="0.5"/>
<rect x="1859.8" y="205.70" width="4.0" height="1.5" fill="#a0a0a0" opacity="0.5"/>
<rect x="1865.0" y="205.70" width="8.0" height="1.5" fill="#a0a0a0" opacity="0.5"/>
<rect x="1874.2" y="205.70" width="4.9" height="1.5" fill="#a0a0a0" opacity="0.5"/>
<rect x="1798" y="207.34" width="101" height="2.1" fill="#2b5d92"/>
<rect x="1798.0" y="207.64" width="12.0" height="1.5" fill="#a0a0a0" opacity="0.5"/>
<rect x="1811.2" y="207.64" width="10.0" height="1.5" fill="#a0a0a0" opacity="0.5"/>
<rect x="1822.4" y="207.64" width="8.0" height="1.5" fill="#a0a0a0" opacity="0.5"/>
<rect x="1831.6" y="207.64" width="10.0" height="1.5" fill="#a0a0a0" opacity="0.5"/>
<rect x="1842.8" y="207.64" width="6.0" height="1.5" fill="#a0a0a0" opacity="0.5"/>
<rect x="1850.0" y="207.64" width="8.0" height="1.5" fill="#a0a0a0" opacity="0.5"/>
<rect x="1859.2" y="207.64" width="3.0" height="1.5" fill="#a0a0a0" opacity="0.5"/>
<rect x="1863.4" y="207.64" width="3.0" height="1.5" fill="#a0a0a0" opacity="0.5"/>
<rect x="1867.6" y="207.64" width="6.0" height="1.5" fill="#a0a0a0" opacity="0.5"/>
<rect x="1874.8" y="207.64" width="5.0" height="1.5" fill="#a0a0a0" opacity="0.5"/>
<rect x="1881.0" y="207.64" width="10.0" height="1.5" fill="#a0a0a0" opacity="0.5"/>
<rect x="1892.2" y="207.64" width="2.0" height="1.5" fill="#a0a0a0" opacity="0.5"/>
<rect x="1861.0" y="207.34" width="15.1" height="2.1" fill="#3794ff"/>
<rect x="1798.0" y="209.80" width="0.2" height="1.5" fill="#a0a0a0" opacity="0.5"/>
<rect x="1798.0" y="211.74" width="8.0" height="1.5" fill="#a0a0a0" opacity="0.5"/>
<rect x="1807.2" y="211.74" width="10.0" height="1.5" fill="#a0a0a0" opacity="0.5"/>
<rect x="1818.4" y="211.74" width="6.0" height="1.5" fill="#a0a0a0" opacity="0.5"/>
<rect x="1825.6" y="211.74" width="5.0" height="1.5" fill="#a0a0a0" opacity="0.5"/>
<rect x="1831.8" y="211.74" width="4.0" height="1.5" fill="#a0a0a0" opacity="0.5"/>
<rect x="1837.0" y="211.74" width="3.0" height="1.5" fill="#a0a0a0" opacity="0.5"/>
<rect x="1841.2" y="211.74" width="8.0" height="1.5" fill="#a0a0a0" opacity="0.5"/>
<rect x="1850.4" y="211.74" width="4.0" height="1.5" fill="#a0a0a0" opacity="0.5"/>
<rect x="1855.6" y="211.74" width="10.0" height="1.5" fill="#a0a0a0" opacity="0.5"/>
<rect x="1866.8" y="211.74" width="5.9" height="1.5" fill="#a0a0a0" opacity="0.5"/>
<rect x="1798" y="214.8" width="101" height="12.2" fill="#2b5d92"/>
<rect x="1798.0" y="213.70" width="7.0" height="1.5" fill="#a0a0a0" opacity="0.5"/>
<rect x="1806.2" y="213.70" width="7.0" height="1.5" fill="#a0a0a0" opacity="0.5"/>
<rect x="1814.4" y="213.70" width="4.0" height="1.5" fill="#a0a0a0" opacity="0.5"/>
<rect x="1819.6" y="213.70" width="5.0" height="1.5" fill="#a0a0a0" opacity="0.5"/>
<rect x="1825.8" y="213.70" width="10.0" height="1.5" fill="#a0a0a0" opacity="0.5"/>
<rect x="1837.0" y="213.70" width="5.0" height="1.5" fill="#a0a0a0" opacity="0.5"/>
<rect x="1843.2" y="213.70" width="8.0" height="1.5" fill="#a0a0a0" opacity="0.5"/>
<rect x="1852.4" y="213.70" width="8.0" height="1.5" fill="#a0a0a0" opacity="0.5"/>
<rect x="1861.6" y="213.70" width="10.0" height="1.5" fill="#a0a0a0" opacity="0.5"/>
<rect x="1872.8" y="213.70" width="0.2" height="1.5" fill="#a0a0a0" opacity="0.5"/>
<rect x="1798.0" y="215.50" width="6.0" height="1.5" fill="#a0a0a0" opacity="0.5"/>
<rect x="1805.2" y="215.50" width="5.0" height="1.5" fill="#a0a0a0" opacity="0.5"/>
<rect x="1811.4" y="215.50" width="4.0" height="1.5" fill="#a0a0a0" opacity="0.5"/>
<rect x="1816.6" y="215.50" width="8.0" height="1.5" fill="#a0a0a0" opacity="0.5"/>
<rect x="1825.8" y="215.50" width="7.0" height="1.5" fill="#a0a0a0" opacity="0.5"/>
<rect x="1834.0" y="215.50" width="12.0" height="1.5" fill="#a0a0a0" opacity="0.5"/>
<rect x="1847.2" y="215.50" width="4.0" height="1.5" fill="#a0a0a0" opacity="0.5"/>
<rect x="1852.4" y="215.50" width="0.6" height="1.5" fill="#a0a0a0" opacity="0.5"/>
<rect x="1798.0" y="217.50" width="3.0" height="1.5" fill="#a0a0a0" opacity="0.5"/>
<rect x="1802.2" y="217.50" width="6.0" height="1.5" fill="#a0a0a0" opacity="0.5"/>
<rect x="1809.4" y="217.50" width="7.0" height="1.5" fill="#a0a0a0" opacity="0.5"/>
<rect x="1817.6" y="217.50" width="7.0" height="1.5" fill="#a0a0a0" opacity="0.5"/>
<rect x="1825.8" y="217.50" width="8.0" height="1.5" fill="#a0a0a0" opacity="0.5"/>
<rect x="1835.0" y="217.50" width="6.0" height="1.5" fill="#a0a0a0" opacity="0.5"/>
<rect x="1842.2" y="217.50" width="10.0" height="1.5" fill="#a0a0a0" opacity="0.5"/>
<rect x="1853.4" y="217.50" width="5.0" height="1.5" fill="#a0a0a0" opacity="0.5"/>
<rect x="1859.6" y="217.50" width="4.0" height="1.5" fill="#a0a0a0" opacity="0.5"/>
<rect x="1864.8" y="217.50" width="8.2" height="1.5" fill="#a0a0a0" opacity="0.5"/>
<rect x="1798.0" y="219.50" width="6.0" height="1.5" fill="#a0a0a0" opacity="0.5"/>
<rect x="1805.2" y="219.50" width="4.0" height="1.5" fill="#a0a0a0" opacity="0.5"/>
<rect x="1810.4" y="219.50" width="10.0" height="1.5" fill="#a0a0a0" opacity="0.5"/>
<rect x="1821.6" y="219.50" width="3.0" height="1.5" fill="#a0a0a0" opacity="0.5"/>
<rect x="1825.8" y="219.50" width="4.0" height="1.5" fill="#a0a0a0" opacity="0.5"/>
<rect x="1831.0" y="219.50" width="4.0" height="1.5" fill="#a0a0a0" opacity="0.5"/>
<rect x="1836.2" y="219.50" width="6.0" height="1.5" fill="#a0a0a0" opacity="0.5"/>
<rect x="1843.4" y="219.50" width="7.0" height="1.5" fill="#a0a0a0" opacity="0.5"/>
<rect x="1851.6" y="219.50" width="1.4" height="1.5" fill="#a0a0a0" opacity="0.5"/>
<rect x="1798.0" y="221.50" width="3.0" height="1.5" fill="#a0a0a0" opacity="0.5"/>
<rect x="1802.2" y="221.50" width="6.0" height="1.5" fill="#a0a0a0" opacity="0.5"/>
<rect x="1809.4" y="221.50" width="10.0" height="1.5" fill="#a0a0a0" opacity="0.5"/>
<rect x="1820.6" y="221.50" width="3.0" height="1.5" fill="#a0a0a0" opacity="0.5"/>
<rect x="1824.8" y="221.50" width="4.0" height="1.5" fill="#a0a0a0" opacity="0.5"/>
<rect x="1830.0" y="221.50" width="7.0" height="1.5" fill="#a0a0a0" opacity="0.5"/>
<rect x="1838.2" y="221.50" width="7.0" height="1.5" fill="#a0a0a0" opacity="0.5"/>
<rect x="1846.4" y="221.50" width="6.6" height="1.5" fill="#a0a0a0" opacity="0.5"/>
<rect x="1798.0" y="223.50" width="10.0" height="1.5" fill="#a0a0a0" opacity="0.5"/>
<rect x="1809.2" y="223.50" width="4.0" height="1.5" fill="#a0a0a0" opacity="0.5"/>
<rect x="1814.4" y="223.50" width="12.0" height="1.5" fill="#a0a0a0" opacity="0.5"/>
<rect x="1827.6" y="223.50" width="4.0" height="1.5" fill="#a0a0a0" opacity="0.5"/>
<rect x="1832.8" y="223.50" width="3.0" height="1.5" fill="#a0a0a0" opacity="0.5"/>
<rect x="1837.0" y="223.50" width="10.0" height="1.5" fill="#a0a0a0" opacity="0.5"/>
<rect x="1848.2" y="223.50" width="5.0" height="1.5" fill="#a0a0a0" opacity="0.5"/>
<rect x="1854.4" y="223.50" width="10.0" height="1.5" fill="#a0a0a0" opacity="0.5"/>
<rect x="1865.6" y="223.50" width="7.4" height="1.5" fill="#a0a0a0" opacity="0.5"/>
<rect x="1808.8" y="215" width="10.2" height="12" fill="#3794ff"/>
<rect x="1798" y="225.78" width="101" height="2.1" fill="#2b5d92"/>
<rect x="1798.0" y="226.08" width="5.0" height="1.5" fill="#a0a0a0" opacity="0.5"/>
<rect x="1804.2" y="226.08" width="12.0" height="1.5" fill="#a0a0a0" opacity="0.5"/>
<rect x="1817.4" y="226.08" width="3.0" height="1.5" fill="#a0a0a0" opacity="0.5"/>
<rect x="1809.0" y="225.78" width="9.7" height="2.1" fill="#3794ff"/>
<rect x="1799.3" y="228.02" width="2.2" height="1.5" fill="#a0a0a0" opacity="0.5"/>
<rect x="1804.7" y="228.02" width="2.7" height="1.5" fill="#a0a0a0" opacity="0.32"/>
<rect x="1809.0" y="228.02" width="10.2" height="1.5" fill="#a0a0a0" opacity="0.32"/>
<rect x="1820.4" y="228.02" width="12.0" height="1.5" fill="#a0a0a0" opacity="0.5"/>
<rect x="1833.6" y="228.02" width="6.8" height="1.5" fill="#a0a0a0" opacity="0.5"/>
<rect x="1799.3" y="229.96" width="2.2" height="1.5" fill="#a0a0a0" opacity="0.5"/>
<rect x="1804.7" y="229.96" width="2.7" height="1.5" fill="#a0a0a0" opacity="0.32"/>
<rect x="1809.0" y="229.96" width="10.2" height="1.5" fill="#a0a0a0" opacity="0.32"/>
<rect x="1820.4" y="229.96" width="10.0" height="1.5" fill="#a0a0a0" opacity="0.5"/>
<rect x="1831.6" y="229.96" width="7.0" height="1.5" fill="#a0a0a0" opacity="0.5"/>
<rect x="1839.8" y="229.96" width="8.0" height="1.5" fill="#a0a0a0" opacity="0.5"/>
<rect x="1799.3" y="231.90" width="2.2" height="1.5" fill="#a0a0a0" opacity="0.5"/>
<rect x="1804.7" y="231.90" width="2.7" height="1.5" fill="#a0a0a0" opacity="0.32"/>
<rect x="1809.0" y="231.90" width="10.2" height="1.5" fill="#a0a0a0" opacity="0.32"/>
<rect x="1820.4" y="231.90" width="12.0" height="1.5" fill="#a0a0a0" opacity="0.5"/>
<rect x="1833.6" y="231.90" width="7.0" height="1.5" fill="#a0a0a0" opacity="0.5"/>
<rect x="1841.8" y="231.90" width="7.0" height="1.5" fill="#a0a0a0" opacity="0.5"/>
<rect x="1850.0" y="231.90" width="4.9" height="1.5" fill="#a0a0a0" opacity="0.5"/>
<rect x="1799.3" y="233.85" width="2.2" height="1.5" fill="#a0a0a0" opacity="0.5"/>
<rect x="1804.7" y="233.85" width="2.7" height="1.5" fill="#a0a0a0" opacity="0.32"/>
<rect x="1809.0" y="233.85" width="10.2" height="1.5" fill="#a0a0a0" opacity="0.32"/>
<rect x="1820.4" y="233.85" width="3.0" height="1.5" fill="#a0a0a0" opacity="0.5"/>
<rect x="1824.6" y="233.85" width="6.0" height="1.5" fill="#a0a0a0" opacity="0.5"/>
<rect x="1831.8" y="233.85" width="3.0" height="1.5" fill="#a0a0a0" opacity="0.5"/>
<rect x="1836.0" y="233.85" width="5.0" height="1.5" fill="#a0a0a0" opacity="0.5"/>
<rect x="1842.2" y="233.85" width="10.0" height="1.5" fill="#a0a0a0" opacity="0.5"/>
<rect x="1853.4" y="233.85" width="10.0" height="1.5" fill="#a0a0a0" opacity="0.5"/>
<rect x="1864.6" y="233.85" width="1.6" height="1.5" fill="#a0a0a0" opacity="0.5"/>
<rect x="1799.3" y="235.79" width="2.2" height="1.5" fill="#a0a0a0" opacity="0.5"/>
<rect x="1804.7" y="235.79" width="2.7" height="1.5" fill="#a0a0a0" opacity="0.32"/>
<rect x="1809.0" y="235.79" width="10.2" height="1.5" fill="#a0a0a0" opacity="0.32"/>
<rect x="1820.4" y="235.79" width="0.5" height="1.5" fill="#a0a0a0" opacity="0.5"/>
<rect x="1799.3" y="237.73" width="2.2" height="1.5" fill="#a0a0a0" opacity="0.5"/>
<rect x="1804.7" y="237.73" width="2.7" height="1.5" fill="#a0a0a0" opacity="0.32"/>
<rect x="1809.0" y="237.73" width="10.2" height="1.5" fill="#a0a0a0" opacity="0.32"/>
<rect x="1820.4" y="237.73" width="8.0" height="1.5" fill="#a0a0a0" opacity="0.5"/>
<rect x="1829.6" y="237.73" width="4.0" height="1.5" fill="#a0a0a0" opacity="0.5"/>
<rect x="1834.8" y="237.73" width="5.6" height="1.5" fill="#a0a0a0" opacity="0.5"/>
<rect x="1799.3" y="239.67" width="2.2" height="1.5" fill="#a0a0a0" opacity="0.5"/>
<rect x="1804.7" y="239.67" width="2.7" height="1.5" fill="#a0a0a0" opacity="0.32"/>
<rect x="1809.0" y="239.67" width="10.2" height="1.5" fill="#a0a0a0" opacity="0.32"/>
<rect x="1820.4" y="239.67" width="12.0" height="1.5" fill="#a0a0a0" opacity="0.5"/>
<rect x="1833.6" y="239.67" width="7.0" height="1.5" fill="#a0a0a0" opacity="0.5"/>
<rect x="1841.8" y="239.67" width="6.0" height="1.5" fill="#a0a0a0" opacity="0.5"/>
<rect x="1799.3" y="241.61" width="2.2" height="1.5" fill="#a0a0a0" opacity="0.5"/>
<rect x="1804.7" y="241.61" width="2.7" height="1.5" fill="#a0a0a0" opacity="0.32"/>
<rect x="1809.0" y="241.61" width="10.2" height="1.5" fill="#a0a0a0" opacity="0.32"/>
<rect x="1820.4" y="241.61" width="4.0" height="1.5" fill="#a0a0a0" opacity="0.5"/>
<rect x="1825.6" y="241.61" width="12.0" height="1.5" fill="#a0a0a0" opacity="0.5"/>
<rect x="1838.8" y="241.61" width="5.0" height="1.5" fill="#a0a0a0" opacity="0.5"/>
<rect x="1845.0" y="241.61" width="6.0" height="1.5" fill="#a0a0a0" opacity="0.5"/>
<rect x="1852.2" y="241.61" width="2.7" height="1.5" fill="#a0a0a0" opacity="0.5"/>
<rect x="1799.3" y="243.55" width="2.2" height="1.5" fill="#a0a0a0" opacity="0.5"/>
<rect x="1804.7" y="243.55" width="2.7" height="1.5" fill="#a0a0a0" opacity="0.32"/>
<rect x="1809.0" y="243.55" width="10.2" height="1.5" fill="#a0a0a0" opacity="0.32"/>
<rect x="1820.4" y="243.55" width="10.0" height="1.5" fill="#a0a0a0" opacity="0.5"/>
<rect x="1831.6" y="243.55" width="12.0" height="1.5" fill="#a0a0a0" opacity="0.5"/>
<rect x="1844.8" y="243.55" width="4.0" height="1.5" fill="#a0a0a0" opacity="0.5"/>
<rect x="1850.0" y="243.55" width="6.0" height="1.5" fill="#a0a0a0" opacity="0.5"/>
<rect x="1857.2" y="243.55" width="3.0" height="1.5" fill="#a0a0a0" opacity="0.5"/>
<rect x="1861.4" y="243.55" width="4.8" height="1.5" fill="#a0a0a0" opacity="0.5"/>
<rect x="1799.3" y="245.50" width="2.2" height="1.5" fill="#a0a0a0" opacity="0.5"/>
<rect x="1804.7" y="245.50" width="2.7" height="1.5" fill="#a0a0a0" opacity="0.32"/>
<rect x="1809.0" y="245.50" width="10.2" height="1.5" fill="#a0a0a0" opacity="0.32"/>
<rect x="1820.4" y="245.50" width="0.5" height="1.5" fill="#a0a0a0" opacity="0.5"/>
<rect x="1799.3" y="247.44" width="2.2" height="1.5" fill="#a0a0a0" opacity="0.5"/>
<rect x="1804.7" y="247.44" width="2.7" height="1.5" fill="#a0a0a0" opacity="0.32"/>
<rect x="1809.0" y="247.44" width="10.2" height="1.5" fill="#a0a0a0" opacity="0.32"/>
<rect x="1820.4" y="247.44" width="12.0" height="1.5" fill="#a0a0a0" opacity="0.5"/>
<rect x="1833.6" y="247.44" width="5.0" height="1.5" fill="#a0a0a0" opacity="0.5"/>
<rect x="1839.8" y="247.44" width="0.6" height="1.5" fill="#a0a0a0" opacity="0.5"/>
<rect x="1799.3" y="249.38" width="2.2" height="1.5" fill="#a0a0a0" opacity="0.5"/>
<rect x="1804.7" y="249.38" width="2.7" height="1.5" fill="#a0a0a0" opacity="0.32"/>
<rect x="1809.0" y="249.38" width="10.2" height="1.5" fill="#a0a0a0" opacity="0.32"/>
<rect x="1820.4" y="249.38" width="7.0" height="1.5" fill="#a0a0a0" opacity="0.5"/>
<rect x="1828.6" y="249.38" width="10.0" height="1.5" fill="#a0a0a0" opacity="0.5"/>
<rect x="1839.8" y="249.38" width="8.0" height="1.5" fill="#a0a0a0" opacity="0.5"/>
<rect x="1799.3" y="251.32" width="2.2" height="1.5" fill="#a0a0a0" opacity="0.5"/>
<rect x="1804.7" y="251.32" width="2.7" height="1.5" fill="#a0a0a0" opacity="0.32"/>
<rect x="1809.0" y="251.32" width="10.2" height="1.5" fill="#a0a0a0" opacity="0.32"/>
<rect x="1820.4" y="251.32" width="7.0" height="1.5" fill="#a0a0a0" opacity="0.5"/>
<rect x="1828.6" y="251.32" width="5.0" height="1.5" fill="#a0a0a0" opacity="0.5"/>
<rect x="1834.8" y="251.32" width="6.0" height="1.5" fill="#a0a0a0" opacity="0.5"/>
<rect x="1842.0" y="251.32" width="12.0" height="1.5" fill="#a0a0a0" opacity="0.5"/>
<rect x="1799.3" y="253.26" width="2.2" height="1.5" fill="#a0a0a0" opacity="0.5"/>
<rect x="1804.7" y="253.26" width="2.7" height="1.5" fill="#a0a0a0" opacity="0.32"/>
<rect x="1809.0" y="253.26" width="10.2" height="1.5" fill="#a0a0a0" opacity="0.32"/>
<rect x="1820.4" y="253.26" width="7.0" height="1.5" fill="#a0a0a0" opacity="0.5"/>
<rect x="1828.6" y="253.26" width="8.0" height="1.5" fill="#a0a0a0" opacity="0.5"/>
<rect x="1837.8" y="253.26" width="7.0" height="1.5" fill="#a0a0a0" opacity="0.5"/>
<rect x="1846.0" y="253.26" width="7.0" height="1.5" fill="#a0a0a0" opacity="0.5"/>
<rect x="1854.2" y="253.26" width="6.0" height="1.5" fill="#a0a0a0" opacity="0.5"/>
<rect x="1861.4" y="253.26" width="4.8" height="1.5" fill="#a0a0a0" opacity="0.5"/>
<rect x="1799.3" y="255.20" width="2.2" height="1.5" fill="#a0a0a0" opacity="0.5"/>
<rect x="1804.7" y="255.20" width="2.7" height="1.5" fill="#a0a0a0" opacity="0.32"/>
<rect x="1809.0" y="255.20" width="10.2" height="1.5" fill="#a0a0a0" opacity="0.32"/>
<rect x="1820.4" y="255.20" width="0.5" height="1.5" fill="#a0a0a0" opacity="0.5"/>
<rect x="1799.3" y="257.15" width="2.2" height="1.5" fill="#a0a0a0" opacity="0.5"/>
<rect x="1804.7" y="257.15" width="2.7" height="1.5" fill="#a0a0a0" opacity="0.32"/>
<rect x="1809.0" y="257.15" width="10.2" height="1.5" fill="#a0a0a0" opacity="0.32"/>
<rect x="1820.4" y="257.15" width="6.0" height="1.5" fill="#a0a0a0" opacity="0.5"/>
<rect x="1827.6" y="257.15" width="3.0" height="1.5" fill="#a0a0a0" opacity="0.5"/>
<rect x="1831.8" y="257.15" width="3.0" height="1.5" fill="#a0a0a0" opacity="0.5"/>
<rect x="1836.0" y="257.15" width="3.0" height="1.5" fill="#a0a0a0" opacity="0.5"/>
<rect x="1840.2" y="257.15" width="0.2" height="1.5" fill="#a0a0a0" opacity="0.5"/>
<rect x="1799.3" y="259.09" width="2.2" height="1.5" fill="#a0a0a0" opacity="0.5"/>
<rect x="1804.7" y="259.09" width="2.7" height="1.5" fill="#a0a0a0" opacity="0.32"/>
<rect x="1809.0" y="259.09" width="10.2" height="1.5" fill="#a0a0a0" opacity="0.32"/>
<rect x="1820.4" y="259.09" width="10.0" height="1.5" fill="#a0a0a0" opacity="0.5"/>
<rect x="1831.6" y="259.09" width="3.0" height="1.5" fill="#a0a0a0" opacity="0.5"/>
<rect x="1835.8" y="259.09" width="3.0" height="1.5" fill="#a0a0a0" opacity="0.5"/>
<rect x="1840.0" y="259.09" width="4.0" height="1.5" fill="#a0a0a0" opacity="0.5"/>
<rect x="1845.2" y="259.09" width="3.8" height="1.5" fill="#a0a0a0" opacity="0.5"/>
<rect x="1799.3" y="261.03" width="2.2" height="1.5" fill="#a0a0a0" opacity="0.5"/>
<rect x="1804.7" y="261.03" width="2.7" height="1.5" fill="#a0a0a0" opacity="0.32"/>
<rect x="1809.0" y="261.03" width="10.2" height="1.5" fill="#a0a0a0" opacity="0.32"/>
<rect x="1820.4" y="261.03" width="4.0" height="1.5" fill="#a0a0a0" opacity="0.5"/>
<rect x="1825.6" y="261.03" width="4.0" height="1.5" fill="#a0a0a0" opacity="0.5"/>
<rect x="1830.8" y="261.03" width="5.0" height="1.5" fill="#a0a0a0" opacity="0.5"/>
<rect x="1837.0" y="261.03" width="6.0" height="1.5" fill="#a0a0a0" opacity="0.5"/>
<rect x="1844.2" y="261.03" width="8.0" height="1.5" fill="#a0a0a0" opacity="0.5"/>
<rect x="1853.4" y="261.03" width="1.5" height="1.5" fill="#a0a0a0" opacity="0.5"/>
<rect x="1799.3" y="262.97" width="2.2" height="1.5" fill="#a0a0a0" opacity="0.5"/>
<rect x="1804.7" y="262.97" width="2.7" height="1.5" fill="#a0a0a0" opacity="0.32"/>
<rect x="1809.0" y="262.97" width="10.2" height="1.5" fill="#a0a0a0" opacity="0.32"/>
<rect x="1820.4" y="262.97" width="8.0" height="1.5" fill="#a0a0a0" opacity="0.5"/>
<rect x="1829.6" y="262.97" width="6.0" height="1.5" fill="#a0a0a0" opacity="0.5"/>
<rect x="1836.8" y="262.97" width="8.0" height="1.5" fill="#a0a0a0" opacity="0.5"/>
<rect x="1846.0" y="262.97" width="8.0" height="1.5" fill="#a0a0a0" opacity="0.5"/>
<rect x="1855.2" y="262.97" width="11.0" height="1.5" fill="#a0a0a0" opacity="0.5"/>
<rect x="1799.3" y="264.91" width="2.2" height="1.5" fill="#a0a0a0" opacity="0.5"/>
<rect x="1804.7" y="264.91" width="2.7" height="1.5" fill="#a0a0a0" opacity="0.32"/>
<rect x="1809.0" y="264.91" width="10.2" height="1.5" fill="#a0a0a0" opacity="0.32"/>
<rect x="1820.4" y="264.91" width="0.5" height="1.5" fill="#a0a0a0" opacity="0.5"/>
<rect x="1798.0" y="267.07" width="4.0" height="1.5" fill="#a0a0a0" opacity="0.5"/>
<rect x="1803.2" y="267.07" width="12.0" height="1.5" fill="#a0a0a0" opacity="0.5"/>
<rect x="1816.4" y="267.07" width="6.0" height="1.5" fill="#a0a0a0" opacity="0.5"/>
<rect x="1823.6" y="267.07" width="12.0" height="1.5" fill="#a0a0a0" opacity="0.5"/>
<rect x="1836.8" y="267.07" width="10.0" height="1.5" fill="#a0a0a0" opacity="0.5"/>
<rect x="1848.0" y="267.07" width="7.0" height="1.5" fill="#a0a0a0" opacity="0.5"/>
<rect x="1856.2" y="267.07" width="10.0" height="1.5" fill="#a0a0a0" opacity="0.5"/>
<rect x="1867.4" y="267.07" width="5.0" height="1.5" fill="#a0a0a0" opacity="0.5"/>
<rect x="1873.6" y="267.07" width="8.0" height="1.5" fill="#a0a0a0" opacity="0.5"/>
<rect x="1882.8" y="267.07" width="5.0" height="1.5" fill="#a0a0a0" opacity="0.5"/>
<rect x="1889.0" y="267.07" width="5.2" height="1.5" fill="#a0a0a0" opacity="0.5"/>
<rect x="1798.0" y="269.23" width="7.0" height="1.5" fill="#a0a0a0" opacity="0.5"/>
<rect x="1806.2" y="269.23" width="5.0" height="1.5" fill="#a0a0a0" opacity="0.5"/>
<rect x="1812.4" y="269.23" width="10.0" height="1.5" fill="#a0a0a0" opacity="0.5"/>
<rect x="1823.6" y="269.23" width="8.0" height="1.5" fill="#a0a0a0" opacity="0.5"/>
<rect x="1832.8" y="269.23" width="4.0" height="1.5" fill="#a0a0a0" opacity="0.5"/>
<rect x="1838.0" y="269.23" width="12.0" height="1.5" fill="#a0a0a0" opacity="0.5"/>
<rect x="1851.2" y="269.23" width="8.0" height="1.5" fill="#a0a0a0" opacity="0.5"/>
<rect x="1860.4" y="269.23" width="4.0" height="1.5" fill="#a0a0a0" opacity="0.5"/>
<rect x="1865.6" y="269.23" width="4.0" height="1.5" fill="#a0a0a0" opacity="0.5"/>
<rect x="1870.8" y="269.23" width="10.0" height="1.5" fill="#a0a0a0" opacity="0.5"/>
<rect x="1882.0" y="269.23" width="9.0" height="1.5" fill="#a0a0a0" opacity="0.5"/>
<rect x="1798.0" y="271.17" width="12.0" height="1.5" fill="#a0a0a0" opacity="0.5"/>
<rect x="1811.2" y="271.17" width="7.0" height="1.5" fill="#a0a0a0" opacity="0.5"/>
<rect x="1819.4" y="271.17" width="3.0" height="1.5" fill="#a0a0a0" opacity="0.5"/>
<rect x="1823.6" y="271.17" width="4.0" height="1.5" fill="#a0a0a0" opacity="0.5"/>
<rect x="1828.8" y="271.17" width="7.0" height="1.5" fill="#a0a0a0" opacity="0.5"/>
<rect x="1837.0" y="271.17" width="6.0" height="1.5" fill="#a0a0a0" opacity="0.5"/>
<rect x="1844.2" y="271.17" width="4.0" height="1.5" fill="#a0a0a0" opacity="0.5"/>
<rect x="1849.4" y="271.17" width="1.7" height="1.5" fill="#a0a0a0" opacity="0.5"/>
<rect x="1798.0" y="273.54" width="12.0" height="1.5" fill="#a0a0a0" opacity="0.5"/>
<rect x="1811.2" y="273.54" width="8.0" height="1.5" fill="#a0a0a0" opacity="0.5"/>
<rect x="1820.4" y="273.54" width="7.0" height="1.5" fill="#a0a0a0" opacity="0.5"/>
<rect x="1828.6" y="273.54" width="5.0" height="1.5" fill="#a0a0a0" opacity="0.5"/>
<rect x="1834.8" y="273.54" width="6.0" height="1.5" fill="#a0a0a0" opacity="0.5"/>
<rect x="1842.0" y="273.54" width="8.0" height="1.5" fill="#a0a0a0" opacity="0.5"/>
<rect x="1851.2" y="273.54" width="8.0" height="1.5" fill="#a0a0a0" opacity="0.5"/>
<rect x="1860.4" y="273.54" width="8.0" height="1.5" fill="#a0a0a0" opacity="0.5"/>
<rect x="1869.6" y="273.54" width="4.0" height="1.5" fill="#a0a0a0" opacity="0.5"/>
<rect x="1874.8" y="273.54" width="6.5" height="1.5" fill="#a0a0a0" opacity="0.5"/>
<rect x="1798.0" y="275.70" width="12.0" height="1.5" fill="#a0a0a0" opacity="0.5"/>
<rect x="1811.2" y="275.70" width="7.0" height="1.5" fill="#a0a0a0" opacity="0.5"/>
<rect x="1819.4" y="275.70" width="12.0" height="1.5" fill="#a0a0a0" opacity="0.5"/>
<rect x="1832.6" y="275.70" width="7.0" height="1.5" fill="#a0a0a0" opacity="0.5"/>
<rect x="1840.8" y="275.70" width="12.0" height="1.5" fill="#a0a0a0" opacity="0.5"/>
<rect x="1854.0" y="275.70" width="8.0" height="1.5" fill="#a0a0a0" opacity="0.5"/>
<rect x="1863.2" y="275.70" width="6.0" height="1.5" fill="#a0a0a0" opacity="0.5"/>
<rect x="1870.4" y="275.70" width="10.0" height="1.5" fill="#a0a0a0" opacity="0.5"/>
<rect x="1798.0" y="279.80" width="6.0" height="1.5" fill="#a0a0a0" opacity="0.5"/>
<rect x="1805.2" y="279.80" width="4.0" height="1.5" fill="#a0a0a0" opacity="0.5"/>
<rect x="1810.4" y="279.80" width="8.0" height="1.5" fill="#a0a0a0" opacity="0.5"/>
<rect x="1819.6" y="279.80" width="8.0" height="1.5" fill="#a0a0a0" opacity="0.5"/>
<rect x="1828.8" y="279.80" width="3.0" height="1.5" fill="#a0a0a0" opacity="0.5"/>
<rect x="1833.0" y="279.80" width="8.0" height="1.5" fill="#a0a0a0" opacity="0.5"/>
<rect x="1842.2" y="279.80" width="7.8" height="1.5" fill="#a0a0a0" opacity="0.5"/>
<rect x="1798.0" y="283.79" width="10.0" height="1.5" fill="#a0a0a0" opacity="0.5"/>
<rect x="1809.2" y="283.79" width="6.0" height="1.5" fill="#a0a0a0" opacity="0.5"/>
<rect x="1816.4" y="283.79" width="8.0" height="1.5" fill="#a0a0a0" opacity="0.5"/>
<rect x="1825.6" y="283.79" width="9.3" height="1.5" fill="#a0a0a0" opacity="0.5"/>
<rect x="1798.0" y="285.95" width="5.0" height="1.5" fill="#a0a0a0" opacity="0.5"/>
<rect x="1804.2" y="285.95" width="5.0" height="1.5" fill="#a0a0a0" opacity="0.5"/>
<rect x="1810.4" y="285.95" width="5.0" height="1.5" fill="#a0a0a0" opacity="0.5"/>
<rect x="1816.6" y="285.95" width="4.0" height="1.5" fill="#a0a0a0" opacity="0.5"/>
<rect x="1821.8" y="285.95" width="5.6" height="1.5" fill="#a0a0a0" opacity="0.5"/>
<rect x="1806.9" y="285.95" width="8.1" height="1.5" fill="#ce9178" opacity="0.45"/>
<rect x="1798.0" y="289.72" width="7.0" height="1.5" fill="#a0a0a0" opacity="0.5"/>
<rect x="1806.2" y="289.72" width="3.0" height="1.5" fill="#a0a0a0" opacity="0.5"/>
<rect x="1810.4" y="289.72" width="6.0" height="1.5" fill="#a0a0a0" opacity="0.5"/>
<rect x="1817.6" y="289.72" width="3.0" height="1.5" fill="#a0a0a0" opacity="0.5"/>
<rect x="1821.8" y="289.72" width="1.2" height="1.5" fill="#a0a0a0" opacity="0.5"/>
<rect x="1798.0" y="291.88" width="7.0" height="1.5" fill="#a0a0a0" opacity="0.5"/>
<rect x="1806.2" y="291.88" width="3.0" height="1.5" fill="#a0a0a0" opacity="0.5"/>
<rect x="1810.4" y="291.88" width="10.0" height="1.5" fill="#a0a0a0" opacity="0.5"/>
<rect x="1821.6" y="291.88" width="4.0" height="1.5" fill="#a0a0a0" opacity="0.5"/>
<rect x="1826.8" y="291.88" width="7.0" height="1.5" fill="#a0a0a0" opacity="0.5"/>
<rect x="1835.0" y="291.88" width="4.0" height="1.5" fill="#a0a0a0" opacity="0.5"/>
<rect x="1840.2" y="291.88" width="8.0" height="1.5" fill="#a0a0a0" opacity="0.5"/>
<rect x="1849.4" y="291.88" width="4.0" height="1.5" fill="#a0a0a0" opacity="0.5"/>
<rect x="1854.6" y="291.88" width="7.0" height="1.5" fill="#a0a0a0" opacity="0.5"/>
<rect x="1862.8" y="291.88" width="4.0" height="1.5" fill="#a0a0a0" opacity="0.5"/>
<rect x="1868.0" y="291.88" width="8.0" height="1.5" fill="#a0a0a0" opacity="0.5"/>
<rect x="1877.2" y="291.88" width="4.0" height="1.5" fill="#a0a0a0" opacity="0.5"/>
<rect x="1882.4" y="291.88" width="3.0" height="1.5" fill="#a0a0a0" opacity="0.5"/>
<rect x="1886.6" y="291.88" width="5.0" height="1.5" fill="#a0a0a0" opacity="0.5"/>
<rect x="1892.8" y="291.88" width="1.4" height="1.5" fill="#a0a0a0" opacity="0.5"/>
<rect x="1798.0" y="294.04" width="10.0" height="1.5" fill="#a0a0a0" opacity="0.5"/>
<rect x="1809.2" y="294.04" width="6.0" height="1.5" fill="#a0a0a0" opacity="0.5"/>
<rect x="1816.4" y="294.04" width="6.0" height="1.5" fill="#a0a0a0" opacity="0.5"/>
<rect x="1823.6" y="294.04" width="12.0" height="1.5" fill="#a0a0a0" opacity="0.5"/>
<rect x="1836.8" y="294.04" width="8.0" height="1.5" fill="#a0a0a0" opacity="0.5"/>
<rect x="1846.0" y="294.04" width="12.0" height="1.5" fill="#a0a0a0" opacity="0.5"/>
<rect x="1859.2" y="294.04" width="10.0" height="1.5" fill="#a0a0a0" opacity="0.5"/>
<rect x="1870.4" y="294.04" width="8.0" height="1.5" fill="#a0a0a0" opacity="0.5"/>
<rect x="1879.6" y="294.04" width="8.0" height="1.5" fill="#a0a0a0" opacity="0.5"/>
<rect x="1888.8" y="294.04" width="2.2" height="1.5" fill="#a0a0a0" opacity="0.5"/>
<rect x="1798.0" y="295.98" width="5.0" height="1.5" fill="#a0a0a0" opacity="0.5"/>
<rect x="1804.2" y="295.98" width="12.0" height="1.5" fill="#a0a0a0" opacity="0.5"/>
<rect x="1817.4" y="295.98" width="12.0" height="1.5" fill="#a0a0a0" opacity="0.5"/>
<rect x="1830.6" y="295.98" width="4.0" height="1.5" fill="#a0a0a0" opacity="0.5"/>
<rect x="1835.8" y="295.98" width="3.0" height="1.5" fill="#a0a0a0" opacity="0.5"/>
<rect x="1840.0" y="295.98" width="10.0" height="1.5" fill="#a0a0a0" opacity="0.5"/>
<rect x="1798.0" y="297.82" width="8.0" height="1.5" fill="#a0a0a0" opacity="0.5"/>
<rect x="1807.2" y="297.82" width="3.0" height="1.5" fill="#a0a0a0" opacity="0.5"/>
<rect x="1811.4" y="297.82" width="10.0" height="1.5" fill="#a0a0a0" opacity="0.5"/>
<rect x="1822.6" y="297.82" width="4.0" height="1.5" fill="#a0a0a0" opacity="0.5"/>
<rect x="1827.8" y="297.82" width="12.0" height="1.5" fill="#a0a0a0" opacity="0.5"/>
<rect x="1841.0" y="297.82" width="3.0" height="1.5" fill="#a0a0a0" opacity="0.5"/>
<rect x="1845.2" y="297.82" width="8.0" height="1.5" fill="#a0a0a0" opacity="0.5"/>
<rect x="1854.4" y="297.82" width="3.0" height="1.5" fill="#a0a0a0" opacity="0.5"/>
<rect x="1858.6" y="297.82" width="4.0" height="1.5" fill="#a0a0a0" opacity="0.5"/>
<rect x="1863.8" y="297.82" width="10.0" height="1.5" fill="#a0a0a0" opacity="0.5"/>
<rect x="1875.0" y="297.82" width="6.3" height="1.5" fill="#a0a0a0" opacity="0.5"/>
<rect x="1798.0" y="299.97" width="5.0" height="1.5" fill="#a0a0a0" opacity="0.5"/>
<rect x="1804.2" y="299.97" width="6.0" height="1.5" fill="#a0a0a0" opacity="0.5"/>
<rect x="1811.4" y="299.97" width="5.0" height="1.5" fill="#a0a0a0" opacity="0.5"/>
<rect x="1817.6" y="299.97" width="10.0" height="1.5" fill="#a0a0a0" opacity="0.5"/>
<rect x="1828.8" y="299.97" width="5.0" height="1.5" fill="#a0a0a0" opacity="0.5"/>
<rect x="1835.0" y="299.97" width="8.0" height="1.5" fill="#a0a0a0" opacity="0.5"/>
<rect x="1844.2" y="299.97" width="6.0" height="1.5" fill="#a0a0a0" opacity="0.5"/>
<rect x="1851.4" y="299.97" width="10.0" height="1.5" fill="#a0a0a0" opacity="0.5"/>
<rect x="1862.6" y="299.97" width="10.0" height="1.5" fill="#a0a0a0" opacity="0.5"/>
<rect x="1873.8" y="299.97" width="7.0" height="1.5" fill="#a0a0a0" opacity="0.5"/>
<rect x="1882.0" y="299.97" width="7.0" height="1.5" fill="#a0a0a0" opacity="0.5"/>
<rect x="1890.2" y="299.97" width="3.0" height="1.5" fill="#a0a0a0" opacity="0.5"/>
<rect x="1798.0" y="302.13" width="12.0" height="1.5" fill="#a0a0a0" opacity="0.5"/>
<rect x="1798.0" y="305.91" width="7.0" height="1.5" fill="#a0a0a0" opacity="0.5"/>
<rect x="1806.2" y="305.91" width="4.0" height="1.5" fill="#a0a0a0" opacity="0.5"/>
<rect x="1811.4" y="305.91" width="7.0" height="1.5" fill="#a0a0a0" opacity="0.5"/>
<rect x="1819.6" y="305.91" width="5.0" height="1.5" fill="#a0a0a0" opacity="0.5"/>
<rect x="1825.8" y="305.91" width="0.5" height="1.5" fill="#a0a0a0" opacity="0.5"/>
<rect x="1798.0" y="310.22" width="3.0" height="1.5" fill="#a0a0a0" opacity="0.5"/>
<rect x="1802.2" y="310.22" width="12.0" height="1.5" fill="#a0a0a0" opacity="0.5"/>
<rect x="1815.4" y="310.22" width="3.0" height="1.5" fill="#a0a0a0" opacity="0.5"/>
<rect x="1819.6" y="310.22" width="12.0" height="1.5" fill="#a0a0a0" opacity="0.5"/>
<rect x="1832.8" y="310.22" width="2.1" height="1.5" fill="#a0a0a0" opacity="0.5"/>
<rect x="1798.0" y="311.84" width="8.0" height="1.5" fill="#a0a0a0" opacity="0.5"/>
<rect x="1807.2" y="311.84" width="4.0" height="1.5" fill="#a0a0a0" opacity="0.5"/>
<rect x="1812.4" y="311.84" width="6.0" height="1.5" fill="#a0a0a0" opacity="0.5"/>
<rect x="1819.6" y="311.84" width="5.0" height="1.5" fill="#a0a0a0" opacity="0.5"/>
<rect x="1825.8" y="311.84" width="1.6" height="1.5" fill="#a0a0a0" opacity="0.5"/>
<rect x="1806.9" y="311.84" width="8.1" height="1.5" fill="#ce9178" opacity="0.45"/>
<rect x="1798.0" y="314.00" width="6.0" height="1.5" fill="#a0a0a0" opacity="0.5"/>
<rect x="1805.2" y="314.00" width="6.0" height="1.5" fill="#a0a0a0" opacity="0.5"/>
<rect x="1812.4" y="314.00" width="12.0" height="1.5" fill="#a0a0a0" opacity="0.5"/>
<rect x="1825.6" y="314.00" width="6.0" height="1.5" fill="#a0a0a0" opacity="0.5"/>
<rect x="1832.8" y="314.00" width="12.0" height="1.5" fill="#a0a0a0" opacity="0.5"/>
<rect x="1846.0" y="314.00" width="5.0" height="1.5" fill="#a0a0a0" opacity="0.5"/>
<rect x="1852.2" y="314.00" width="7.0" height="1.5" fill="#a0a0a0" opacity="0.5"/>
<rect x="1860.4" y="314.00" width="10.0" height="1.5" fill="#a0a0a0" opacity="0.5"/>
<rect x="1871.6" y="314.00" width="5.0" height="1.5" fill="#a0a0a0" opacity="0.5"/>
<rect x="1877.8" y="314.00" width="3.5" height="1.5" fill="#a0a0a0" opacity="0.5"/>
<rect x="1798.0" y="316.15" width="12.0" height="1.5" fill="#a0a0a0" opacity="0.5"/>
<rect x="1811.2" y="316.15" width="7.0" height="1.5" fill="#a0a0a0" opacity="0.5"/>
<rect x="1819.4" y="316.15" width="12.0" height="1.5" fill="#a0a0a0" opacity="0.5"/>
<rect x="1832.6" y="316.15" width="10.0" height="1.5" fill="#a0a0a0" opacity="0.5"/>
<rect x="1843.8" y="316.15" width="8.0" height="1.5" fill="#a0a0a0" opacity="0.5"/>
<rect x="1853.0" y="316.15" width="4.0" height="1.5" fill="#a0a0a0" opacity="0.5"/>
<rect x="1858.2" y="316.15" width="8.0" height="1.5" fill="#a0a0a0" opacity="0.5"/>
<rect x="1798.0" y="317.77" width="6.0" height="1.5" fill="#a0a0a0" opacity="0.5"/>
<rect x="1805.2" y="317.77" width="10.0" height="1.5" fill="#a0a0a0" opacity="0.5"/>
<rect x="1816.4" y="317.77" width="3.0" height="1.5" fill="#a0a0a0" opacity="0.5"/>
<rect x="1820.6" y="317.77" width="6.0" height="1.5" fill="#a0a0a0" opacity="0.5"/>
<rect x="1827.8" y="317.77" width="5.0" height="1.5" fill="#a0a0a0" opacity="0.5"/>
<rect x="1834.0" y="317.77" width="10.0" height="1.5" fill="#a0a0a0" opacity="0.5"/>
<rect x="1845.2" y="317.77" width="7.0" height="1.5" fill="#a0a0a0" opacity="0.5"/>
<rect x="1853.4" y="317.77" width="3.0" height="1.5" fill="#a0a0a0" opacity="0.5"/>
<rect x="1857.6" y="317.77" width="6.0" height="1.5" fill="#a0a0a0" opacity="0.5"/>
<rect x="1864.8" y="317.77" width="3.0" height="1.5" fill="#a0a0a0" opacity="0.5"/>
<rect x="1869.0" y="317.77" width="12.0" height="1.5" fill="#a0a0a0" opacity="0.5"/>
<rect x="1882.2" y="317.77" width="8.0" height="1.5" fill="#a0a0a0" opacity="0.5"/>
<rect x="1891.4" y="317.77" width="1.8" height="1.5" fill="#a0a0a0" opacity="0.5"/>
<rect x="1798" y="319.63" width="101" height="2.1" fill="#2b5d92"/>
<rect x="1798.0" y="319.93" width="6.0" height="1.5" fill="#a0a0a0" opacity="0.5"/>
<rect x="1805.2" y="319.93" width="10.0" height="1.5" fill="#a0a0a0" opacity="0.5"/>
<rect x="1816.4" y="319.93" width="5.0" height="1.5" fill="#a0a0a0" opacity="0.5"/>
<rect x="1822.6" y="319.93" width="10.0" height="1.5" fill="#a0a0a0" opacity="0.5"/>
<rect x="1833.8" y="319.93" width="2.2" height="1.5" fill="#a0a0a0" opacity="0.5"/>
<rect x="1804.2" y="319.63" width="7.0" height="2.1" fill="#3794ff"/>
<rect x="1798.0" y="322.09" width="8.0" height="1.5" fill="#a0a0a0" opacity="0.5"/>
<rect x="1807.2" y="322.09" width="5.0" height="1.5" fill="#a0a0a0" opacity="0.5"/>
<rect x="1813.4" y="322.09" width="7.0" height="1.5" fill="#a0a0a0" opacity="0.5"/>
<rect x="1821.6" y="322.09" width="5.0" height="1.5" fill="#a0a0a0" opacity="0.5"/>
<rect x="1827.8" y="322.09" width="7.0" height="1.5" fill="#a0a0a0" opacity="0.5"/>
<rect x="1804.7" y="322.09" width="11.9" height="1.5" fill="#ce9178" opacity="0.45"/>
<rect x="1798" y="323.73" width="101" height="2.1" fill="#2b5d92"/>
<rect x="1798.0" y="324.03" width="3.0" height="1.5" fill="#a0a0a0" opacity="0.5"/>
<rect x="1802.2" y="324.03" width="5.0" height="1.5" fill="#a0a0a0" opacity="0.5"/>
<rect x="1808.4" y="324.03" width="5.0" height="1.5" fill="#a0a0a0" opacity="0.5"/>
<rect x="1814.6" y="324.03" width="3.0" height="1.5" fill="#a0a0a0" opacity="0.5"/>
<rect x="1818.8" y="324.03" width="6.0" height="1.5" fill="#a0a0a0" opacity="0.5"/>
<rect x="1826.0" y="324.03" width="5.0" height="1.5" fill="#a0a0a0" opacity="0.5"/>
<rect x="1832.2" y="324.03" width="5.0" height="1.5" fill="#a0a0a0" opacity="0.5"/>
<rect x="1838.4" y="324.03" width="4.0" height="1.5" fill="#a0a0a0" opacity="0.5"/>
<rect x="1843.6" y="324.03" width="8.0" height="1.5" fill="#a0a0a0" opacity="0.5"/>
<rect x="1852.8" y="324.03" width="7.0" height="1.5" fill="#a0a0a0" opacity="0.5"/>
<rect x="1861.0" y="324.03" width="4.0" height="1.5" fill="#a0a0a0" opacity="0.5"/>
<rect x="1866.2" y="324.03" width="12.0" height="1.5" fill="#a0a0a0" opacity="0.5"/>
<rect x="1879.4" y="324.03" width="9.5" height="1.5" fill="#a0a0a0" opacity="0.5"/>
<rect x="1858.1" y="323.73" width="4.9" height="2.1" fill="#3794ff"/>
<rect x="1798.0" y="326.19" width="4.0" height="1.5" fill="#a0a0a0" opacity="0.5"/>
<rect x="1803.2" y="326.19" width="3.7" height="1.5" fill="#a0a0a0" opacity="0.5"/>
<rect x="1798.0" y="328.02" width="3.0" height="1.5" fill="#a0a0a0" opacity="0.5"/>
<rect x="1802.2" y="328.02" width="6.0" height="1.5" fill="#a0a0a0" opacity="0.5"/>
<rect x="1809.4" y="328.02" width="10.0" height="1.5" fill="#a0a0a0" opacity="0.5"/>
<rect x="1820.6" y="328.02" width="6.0" height="1.5" fill="#a0a0a0" opacity="0.5"/>
<rect x="1827.8" y="328.02" width="4.0" height="1.5" fill="#a0a0a0" opacity="0.5"/>
<rect x="1833.0" y="328.02" width="1.9" height="1.5" fill="#a0a0a0" opacity="0.5"/>
<rect x="1805.2" y="328.02" width="11.3" height="1.5" fill="#ce9178" opacity="0.45"/>
<rect x="1798.0" y="329.85" width="6.0" height="1.5" fill="#a0a0a0" opacity="0.5"/>
<rect x="1805.2" y="329.85" width="3.0" height="1.5" fill="#a0a0a0" opacity="0.5"/>
<rect x="1809.4" y="329.85" width="10.0" height="1.5" fill="#a0a0a0" opacity="0.5"/>
<rect x="1820.6" y="329.85" width="12.0" height="1.5" fill="#a0a0a0" opacity="0.5"/>
<rect x="1833.8" y="329.85" width="5.0" height="1.5" fill="#a0a0a0" opacity="0.5"/>
<rect x="1840.0" y="329.85" width="7.0" height="1.5" fill="#a0a0a0" opacity="0.5"/>
<rect x="1848.2" y="329.85" width="8.0" height="1.5" fill="#a0a0a0" opacity="0.5"/>
<rect x="1857.4" y="329.85" width="7.0" height="1.5" fill="#a0a0a0" opacity="0.5"/>
<rect x="1827.4" y="329.85" width="8.1" height="1.5" fill="#ce9178" opacity="0.45"/>
<rect x="1798" y="331.71" width="101" height="2.1" fill="#2b5d92"/>
<rect x="1798.0" y="332.01" width="10.0" height="1.5" fill="#a0a0a0" opacity="0.5"/>
<rect x="1809.2" y="332.01" width="4.0" height="1.5" fill="#a0a0a0" opacity="0.5"/>
<rect x="1814.4" y="332.01" width="7.0" height="1.5" fill="#a0a0a0" opacity="0.5"/>
<rect x="1822.6" y="332.01" width="4.8" height="1.5" fill="#a0a0a0" opacity="0.5"/>
<rect x="1799.9" y="331.71" width="9.2" height="2.1" fill="#3794ff"/>
<rect x="1798.0" y="333.95" width="4.0" height="1.5" fill="#a0a0a0" opacity="0.5"/>
<rect x="1803.2" y="333.95" width="8.0" height="1.5" fill="#a0a0a0" opacity="0.5"/>
<rect x="1812.4" y="333.95" width="4.0" height="1.5" fill="#a0a0a0" opacity="0.5"/>
<rect x="1817.6" y="333.95" width="5.0" height="1.5" fill="#a0a0a0" opacity="0.5"/>
<rect x="1823.8" y="333.95" width="4.0" height="1.5" fill="#a0a0a0" opacity="0.5"/>
<rect x="1829.0" y="333.95" width="10.0" height="1.5" fill="#a0a0a0" opacity="0.5"/>
<rect x="1840.2" y="333.95" width="12.0" height="1.5" fill="#a0a0a0" opacity="0.5"/>
<rect x="1798.0" y="341.18" width="4.0" height="1.5" fill="#a0a0a0" opacity="0.5"/>
<rect x="1803.2" y="341.18" width="12.0" height="1.5" fill="#a0a0a0" opacity="0.5"/>
<rect x="1816.4" y="341.18" width="3.0" height="1.5" fill="#a0a0a0" opacity="0.5"/>
<rect x="1820.6" y="341.18" width="10.0" height="1.5" fill="#a0a0a0" opacity="0.5"/>
<rect x="1831.8" y="341.18" width="12.0" height="1.5" fill="#a0a0a0" opacity="0.5"/>
<rect x="1845.0" y="341.18" width="3.8" height="1.5" fill="#a0a0a0" opacity="0.5"/>
<rect x="1825.3" y="341.18" width="4.1" height="1.5" fill="#ce9178" opacity="0.45"/>
<rect x="1798.0" y="343.06" width="7.0" height="1.5" fill="#a0a0a0" opacity="0.5"/>
<rect x="1806.2" y="343.06" width="4.0" height="1.5" fill="#a0a0a0" opacity="0.5"/>
<rect x="1811.4" y="343.06" width="12.0" height="1.5" fill="#a0a0a0" opacity="0.5"/>
<rect x="1824.6" y="343.06" width="3.0" height="1.5" fill="#a0a0a0" opacity="0.5"/>
<rect x="1828.8" y="343.06" width="6.0" height="1.5" fill="#a0a0a0" opacity="0.5"/>
<rect x="1836.0" y="343.06" width="5.0" height="1.5" fill="#a0a0a0" opacity="0.5"/>
<rect x="1842.2" y="343.06" width="7.0" height="1.5" fill="#a0a0a0" opacity="0.5"/>
<rect x="1850.4" y="343.06" width="5.5" height="1.5" fill="#a0a0a0" opacity="0.5"/>
<rect x="1828.2" y="343.06" width="4.1" height="1.5" fill="#ce9178" opacity="0.45"/>
<rect x="1798.0" y="344.94" width="7.0" height="1.5" fill="#a0a0a0" opacity="0.5"/>
<rect x="1806.2" y="344.94" width="8.0" height="1.5" fill="#a0a0a0" opacity="0.5"/>
<rect x="1815.4" y="344.94" width="10.0" height="1.5" fill="#a0a0a0" opacity="0.5"/>
<rect x="1826.6" y="344.94" width="4.0" height="1.5" fill="#a0a0a0" opacity="0.5"/>
<rect x="1831.8" y="344.94" width="7.0" height="1.5" fill="#a0a0a0" opacity="0.5"/>
<rect x="1840.0" y="344.94" width="6.0" height="1.5" fill="#a0a0a0" opacity="0.5"/>
<rect x="1847.2" y="344.94" width="5.2" height="1.5" fill="#a0a0a0" opacity="0.5"/>
<rect x="1831.2" y="344.94" width="4.1" height="1.5" fill="#ce9178" opacity="0.45"/>
<rect x="1798.0" y="346.82" width="10.0" height="1.5" fill="#a0a0a0" opacity="0.5"/>
<rect x="1809.2" y="346.82" width="4.0" height="1.5" fill="#a0a0a0" opacity="0.5"/>
<rect x="1814.4" y="346.82" width="8.0" height="1.5" fill="#a0a0a0" opacity="0.5"/>
<rect x="1823.6" y="346.82" width="7.0" height="1.5" fill="#a0a0a0" opacity="0.5"/>
<rect x="1831.8" y="346.82" width="7.0" height="1.5" fill="#a0a0a0" opacity="0.5"/>
<rect x="1840.0" y="346.82" width="12.0" height="1.5" fill="#a0a0a0" opacity="0.5"/>
<rect x="1853.2" y="346.82" width="0.3" height="1.5" fill="#a0a0a0" opacity="0.5"/>
<rect x="1825.3" y="346.82" width="4.1" height="1.5" fill="#ce9178" opacity="0.45"/>
<rect x="1798.0" y="348.71" width="12.0" height="1.5" fill="#a0a0a0" opacity="0.5"/>
<rect x="1811.2" y="348.71" width="10.0" height="1.5" fill="#a0a0a0" opacity="0.5"/>
<rect x="1822.4" y="348.71" width="4.0" height="1.5" fill="#a0a0a0" opacity="0.5"/>
<rect x="1827.6" y="348.71" width="4.0" height="1.5" fill="#a0a0a0" opacity="0.5"/>
<rect x="1832.8" y="348.71" width="5.0" height="1.5" fill="#a0a0a0" opacity="0.5"/>
<rect x="1839.0" y="348.71" width="4.0" height="1.5" fill="#a0a0a0" opacity="0.5"/>
<rect x="1844.2" y="348.71" width="2.3" height="1.5" fill="#a0a0a0" opacity="0.5"/>
<rect x="1828.2" y="348.71" width="4.1" height="1.5" fill="#ce9178" opacity="0.45"/>
<rect x="1798.0" y="350.59" width="5.0" height="1.5" fill="#a0a0a0" opacity="0.5"/>
<rect x="1804.2" y="350.59" width="5.0" height="1.5" fill="#a0a0a0" opacity="0.5"/>
<rect x="1810.4" y="350.59" width="6.0" height="1.5" fill="#a0a0a0" opacity="0.5"/>
<rect x="1817.6" y="350.59" width="10.0" height="1.5" fill="#a0a0a0" opacity="0.5"/>
<rect x="1828.8" y="350.59" width="3.0" height="1.5" fill="#a0a0a0" opacity="0.5"/>
<rect x="1833.0" y="350.59" width="12.0" height="1.5" fill="#a0a0a0" opacity="0.5"/>
<rect x="1846.2" y="350.59" width="4.0" height="1.5" fill="#a0a0a0" opacity="0.5"/>
<rect x="1831.2" y="350.59" width="4.1" height="1.5" fill="#ce9178" opacity="0.45"/>
<rect x="1798.0" y="352.47" width="4.0" height="1.5" fill="#a0a0a0" opacity="0.5"/>
<rect x="1803.2" y="352.47" width="6.0" height="1.5" fill="#a0a0a0" opacity="0.5"/>
<rect x="1810.4" y="352.47" width="3.0" height="1.5" fill="#a0a0a0" opacity="0.5"/>
<rect x="1814.6" y="352.47" width="5.0" height="1.5" fill="#a0a0a0" opacity="0.5"/>
<rect x="1820.8" y="352.47" width="4.0" height="1.5" fill="#a0a0a0" opacity="0.5"/>
<rect x="1826.0" y="352.47" width="10.0" height="1.5" fill="#a0a0a0" opacity="0.5"/>
<rect x="1837.2" y="352.47" width="10.0" height="1.5" fill="#a0a0a0" opacity="0.5"/>
<rect x="1848.4" y="352.47" width="4.0" height="1.5" fill="#a0a0a0" opacity="0.5"/>
<rect x="1853.6" y="352.47" width="7.0" height="1.5" fill="#a0a0a0" opacity="0.5"/>
<rect x="1825.3" y="352.47" width="4.1" height="1.5" fill="#ce9178" opacity="0.45"/>
<rect x="1798.0" y="354.35" width="10.0" height="1.5" fill="#a0a0a0" opacity="0.5"/>
<rect x="1809.2" y="354.35" width="5.0" height="1.5" fill="#a0a0a0" opacity="0.5"/>
<rect x="1815.4" y="354.35" width="6.0" height="1.5" fill="#a0a0a0" opacity="0.5"/>
<rect x="1822.6" y="354.35" width="5.0" height="1.5" fill="#a0a0a0" opacity="0.5"/>
<rect x="1828.8" y="354.35" width="10.0" height="1.5" fill="#a0a0a0" opacity="0.5"/>
<rect x="1840.0" y="354.35" width="10.0" height="1.5" fill="#a0a0a0" opacity="0.5"/>
<rect x="1828.2" y="354.35" width="4.1" height="1.5" fill="#ce9178" opacity="0.45"/>
<rect x="1798.0" y="356.24" width="8.0" height="1.5" fill="#a0a0a0" opacity="0.5"/>
<rect x="1807.2" y="356.24" width="10.0" height="1.5" fill="#a0a0a0" opacity="0.5"/>
<rect x="1818.4" y="356.24" width="3.0" height="1.5" fill="#a0a0a0" opacity="0.5"/>
<rect x="1822.6" y="356.24" width="10.0" height="1.5" fill="#a0a0a0" opacity="0.5"/>
<rect x="1833.8" y="356.24" width="8.0" height="1.5" fill="#a0a0a0" opacity="0.5"/>
<rect x="1843.0" y="356.24" width="6.0" height="1.5" fill="#a0a0a0" opacity="0.5"/>
<rect x="1850.2" y="356.24" width="3.0" height="1.5" fill="#a0a0a0" opacity="0.5"/>
<rect x="1854.4" y="356.24" width="1.5" height="1.5" fill="#a0a0a0" opacity="0.5"/>
<rect x="1831.2" y="356.24" width="4.1" height="1.5" fill="#ce9178" opacity="0.45"/>
<rect x="1798.0" y="358.12" width="8.0" height="1.5" fill="#a0a0a0" opacity="0.5"/>
<rect x="1807.2" y="358.12" width="6.0" height="1.5" fill="#a0a0a0" opacity="0.5"/>
<rect x="1814.4" y="358.12" width="8.0" height="1.5" fill="#a0a0a0" opacity="0.5"/>
<rect x="1823.6" y="358.12" width="7.0" height="1.5" fill="#a0a0a0" opacity="0.5"/>
<rect x="1831.8" y="358.12" width="12.0" height="1.5" fill="#a0a0a0" opacity="0.5"/>
<rect x="1845.0" y="358.12" width="4.0" height="1.5" fill="#a0a0a0" opacity="0.5"/>
<rect x="1850.2" y="358.12" width="5.7" height="1.5" fill="#a0a0a0" opacity="0.5"/>
<rect x="1825.3" y="358.12" width="4.1" height="1.5" fill="#ce9178" opacity="0.45"/>
<rect x="1798.0" y="360.00" width="6.0" height="1.5" fill="#a0a0a0" opacity="0.5"/>
<rect x="1805.2" y="360.00" width="8.0" height="1.5" fill="#a0a0a0" opacity="0.5"/>
<rect x="1814.4" y="360.00" width="7.0" height="1.5" fill="#a0a0a0" opacity="0.5"/>
<rect x="1822.6" y="360.00" width="4.0" height="1.5" fill="#a0a0a0" opacity="0.5"/>
<rect x="1827.8" y="360.00" width="5.0" height="1.5" fill="#a0a0a0" opacity="0.5"/>
<rect x="1834.0" y="360.00" width="7.0" height="1.5" fill="#a0a0a0" opacity="0.5"/>
<rect x="1842.2" y="360.00" width="7.0" height="1.5" fill="#a0a0a0" opacity="0.5"/>
<rect x="1850.4" y="360.00" width="6.0" height="1.5" fill="#a0a0a0" opacity="0.5"/>
<rect x="1857.6" y="360.00" width="6.5" height="1.5" fill="#a0a0a0" opacity="0.5"/>
<rect x="1828.2" y="360.00" width="4.1" height="1.5" fill="#ce9178" opacity="0.45"/>
<rect x="1798.0" y="361.88" width="5.0" height="1.5" fill="#a0a0a0" opacity="0.5"/>
<rect x="1804.2" y="361.88" width="6.0" height="1.5" fill="#a0a0a0" opacity="0.5"/>
<rect x="1811.4" y="361.88" width="6.0" height="1.5" fill="#a0a0a0" opacity="0.5"/>
<rect x="1818.6" y="361.88" width="3.0" height="1.5" fill="#a0a0a0" opacity="0.5"/>
<rect x="1822.8" y="361.88" width="6.0" height="1.5" fill="#a0a0a0" opacity="0.5"/>
<rect x="1830.0" y="361.88" width="4.0" height="1.5" fill="#a0a0a0" opacity="0.5"/>
<rect x="1835.2" y="361.88" width="5.0" height="1.5" fill="#a0a0a0" opacity="0.5"/>
<rect x="1841.4" y="361.88" width="5.1" height="1.5" fill="#a0a0a0" opacity="0.5"/>
<rect x="1831.2" y="361.88" width="4.1" height="1.5" fill="#ce9178" opacity="0.45"/>
<rect x="1798.0" y="364.12" width="12.0" height="1.5" fill="#a0a0a0" opacity="0.5"/>
<rect x="1811.2" y="364.12" width="10.0" height="1.5" fill="#a0a0a0" opacity="0.5"/>
<rect x="1822.4" y="364.12" width="8.0" height="1.5" fill="#a0a0a0" opacity="0.5"/>
<rect x="1831.6" y="364.12" width="8.0" height="1.5" fill="#a0a0a0" opacity="0.5"/>
<rect x="1840.8" y="364.12" width="4.0" height="1.5" fill="#a0a0a0" opacity="0.5"/>
<rect x="1846.0" y="364.12" width="8.0" height="1.5" fill="#a0a0a0" opacity="0.5"/>
<rect x="1855.2" y="364.12" width="2.4" height="1.5" fill="#a0a0a0" opacity="0.5"/>
<rect x="1798.0" y="368.00" width="12.0" height="1.5" fill="#a0a0a0" opacity="0.5"/>
<rect x="1811.2" y="368.00" width="4.0" height="1.5" fill="#a0a0a0" opacity="0.5"/>
<rect x="1816.4" y="368.00" width="12.0" height="1.5" fill="#a0a0a0" opacity="0.5"/>
<rect x="1829.6" y="368.00" width="5.0" height="1.5" fill="#a0a0a0" opacity="0.5"/>
<rect x="1835.8" y="368.00" width="2.4" height="1.5" fill="#a0a0a0" opacity="0.5"/>
<rect x="1798.0" y="370.00" width="4.0" height="1.5" fill="#a0a0a0" opacity="0.5"/>
<rect x="1803.2" y="370.00" width="7.0" height="1.5" fill="#a0a0a0" opacity="0.5"/>
<rect x="1811.4" y="370.00" width="5.0" height="1.5" fill="#a0a0a0" opacity="0.5"/>
<rect x="1798.0" y="375.29" width="8.0" height="1.5" fill="#a0a0a0" opacity="0.5"/>
<rect x="1807.2" y="375.29" width="5.0" height="1.5" fill="#a0a0a0" opacity="0.5"/>
<rect x="1813.4" y="375.29" width="4.0" height="1.5" fill="#a0a0a0" opacity="0.5"/>
<rect x="1818.6" y="375.29" width="3.0" height="1.5" fill="#a0a0a0" opacity="0.5"/>
<rect x="1822.8" y="375.29" width="4.8" height="1.5" fill="#a0a0a0" opacity="0.5"/>
<rect x="1798.0" y="377.65" width="8.0" height="1.5" fill="#a0a0a0" opacity="0.5"/>
<rect x="1807.2" y="377.65" width="6.0" height="1.5" fill="#a0a0a0" opacity="0.5"/>
<rect x="1814.4" y="377.65" width="8.0" height="1.5" fill="#a0a0a0" opacity="0.5"/>
<rect x="1823.6" y="377.65" width="5.0" height="1.5" fill="#a0a0a0" opacity="0.5"/>
<rect x="1829.8" y="377.65" width="5.0" height="1.5" fill="#a0a0a0" opacity="0.5"/>
<rect x="1836.0" y="377.65" width="4.0" height="1.5" fill="#a0a0a0" opacity="0.5"/>
<rect x="1841.2" y="377.65" width="12.0" height="1.5" fill="#a0a0a0" opacity="0.5"/>
<rect x="1854.4" y="377.65" width="0.3" height="1.5" fill="#a0a0a0" opacity="0.5"/>
<rect x="1798.0" y="381.76" width="10.0" height="1.5" fill="#a0a0a0" opacity="0.5"/>
<rect x="1809.2" y="381.76" width="5.0" height="1.5" fill="#a0a0a0" opacity="0.5"/>
<rect x="1815.4" y="381.76" width="5.0" height="1.5" fill="#a0a0a0" opacity="0.5"/>
<rect x="1821.6" y="381.76" width="7.0" height="1.5" fill="#a0a0a0" opacity="0.5"/>
<rect x="1829.8" y="381.76" width="8.4" height="1.5" fill="#a0a0a0" opacity="0.5"/>
<rect x="1804.1" y="381.76" width="12.4" height="1.5" fill="#ce9178" opacity="0.45"/>
<rect x="1798" y="383.58" width="101" height="2.1" fill="#2b5d92"/>
<rect x="1798.0" y="383.88" width="3.0" height="1.5" fill="#a0a0a0" opacity="0.5"/>
<rect x="1802.2" y="383.88" width="5.0" height="1.5" fill="#a0a0a0" opacity="0.5"/>
<rect x="1808.4" y="383.88" width="6.0" height="1.5" fill="#a0a0a0" opacity="0.5"/>
<rect x="1815.6" y="383.88" width="10.0" height="1.5" fill="#a0a0a0" opacity="0.5"/>
<rect x="1826.8" y="383.88" width="12.0" height="1.5" fill="#a0a0a0" opacity="0.5"/>
<rect x="1840.0" y="383.88" width="3.0" height="1.5" fill="#a0a0a0" opacity="0.5"/>
<rect x="1844.2" y="383.88" width="5.0" height="1.5" fill="#a0a0a0" opacity="0.5"/>
<rect x="1850.4" y="383.88" width="10.0" height="1.5" fill="#a0a0a0" opacity="0.5"/>
<rect x="1861.6" y="383.88" width="4.0" height="1.5" fill="#a0a0a0" opacity="0.5"/>
<rect x="1866.8" y="383.88" width="10.0" height="1.5" fill="#a0a0a0" opacity="0.5"/>
<rect x="1878.0" y="383.88" width="5.0" height="1.5" fill="#a0a0a0" opacity="0.5"/>
<rect x="1884.2" y="383.88" width="4.6" height="1.5" fill="#a0a0a0" opacity="0.5"/>
<rect x="1857.6" y="383.58" width="5.3" height="2.1" fill="#3794ff"/>
<rect x="1798.0" y="385.88" width="5.0" height="1.5" fill="#a0a0a0" opacity="0.5"/>
<rect x="1804.2" y="385.88" width="2.9" height="1.5" fill="#a0a0a0" opacity="0.5"/>
<rect x="1798.0" y="387.65" width="6.0" height="1.5" fill="#a0a0a0" opacity="0.5"/>
<rect x="1805.2" y="387.65" width="8.0" height="1.5" fill="#a0a0a0" opacity="0.5"/>
<rect x="1814.4" y="387.65" width="3.0" height="1.5" fill="#a0a0a0" opacity="0.5"/>
<rect x="1818.6" y="387.65" width="3.0" height="1.5" fill="#a0a0a0" opacity="0.5"/>
<rect x="1822.8" y="387.65" width="5.0" height="1.5" fill="#a0a0a0" opacity="0.5"/>
<rect x="1829.0" y="387.65" width="5.7" height="1.5" fill="#a0a0a0" opacity="0.5"/>
<rect x="1804.7" y="387.65" width="11.8" height="1.5" fill="#ce9178" opacity="0.45"/>
<rect x="1798.0" y="389.65" width="12.0" height="1.5" fill="#a0a0a0" opacity="0.5"/>
<rect x="1811.2" y="389.65" width="4.0" height="1.5" fill="#a0a0a0" opacity="0.5"/>
<rect x="1816.4" y="389.65" width="12.0" height="1.5" fill="#a0a0a0" opacity="0.5"/>
<rect x="1829.6" y="389.65" width="8.0" height="1.5" fill="#a0a0a0" opacity="0.5"/>
<rect x="1838.8" y="389.65" width="10.0" height="1.5" fill="#a0a0a0" opacity="0.5"/>
<rect x="1850.0" y="389.65" width="10.0" height="1.5" fill="#a0a0a0" opacity="0.5"/>
<rect x="1861.2" y="389.65" width="7.0" height="1.5" fill="#a0a0a0" opacity="0.5"/>
<rect x="1869.4" y="389.65" width="8.8" height="1.5" fill="#a0a0a0" opacity="0.5"/>
<rect x="1827.6" y="389.65" width="20.0" height="1.5" fill="#ce9178" opacity="0.45"/>
<rect x="1798" y="391.46" width="101" height="2.1" fill="#2b5d92"/>
<rect x="1798.0" y="391.76" width="12.0" height="1.5" fill="#a0a0a0" opacity="0.5"/>
<rect x="1811.2" y="391.76" width="10.0" height="1.5" fill="#a0a0a0" opacity="0.5"/>
<rect x="1822.4" y="391.76" width="2.9" height="1.5" fill="#a0a0a0" opacity="0.5"/>
<rect x="1800.0" y="391.46" width="8.8" height="2.1" fill="#3794ff"/>
<rect x="1798.0" y="393.88" width="4.0" height="1.5" fill="#a0a0a0" opacity="0.5"/>
<rect x="1803.2" y="393.88" width="4.0" height="1.5" fill="#a0a0a0" opacity="0.5"/>
<rect x="1808.4" y="393.88" width="8.0" height="1.5" fill="#a0a0a0" opacity="0.5"/>
<rect x="1817.6" y="393.88" width="10.0" height="1.5" fill="#a0a0a0" opacity="0.5"/>
<rect x="1828.8" y="393.88" width="10.0" height="1.5" fill="#a0a0a0" opacity="0.5"/>
<rect x="1840.0" y="393.88" width="3.0" height="1.5" fill="#a0a0a0" opacity="0.5"/>
<rect x="1844.2" y="393.88" width="7.6" height="1.5" fill="#a0a0a0" opacity="0.5"/>
<rect x="1798.0" y="396.24" width="3.0" height="1.5" fill="#a0a0a0" opacity="0.5"/>
<rect x="1802.2" y="396.24" width="7.0" height="1.5" fill="#a0a0a0" opacity="0.5"/>
<rect x="1810.4" y="396.24" width="10.0" height="1.5" fill="#a0a0a0" opacity="0.5"/>
<rect x="1821.6" y="396.24" width="10.0" height="1.5" fill="#a0a0a0" opacity="0.5"/>
<rect x="1832.8" y="396.24" width="8.0" height="1.5" fill="#a0a0a0" opacity="0.5"/>
<rect x="1842.0" y="396.24" width="6.8" height="1.5" fill="#a0a0a0" opacity="0.5"/>
<rect x="1825.3" y="396.24" width="4.1" height="1.5" fill="#ce9178" opacity="0.45"/>
<rect x="1798.0" y="398.29" width="4.0" height="1.5" fill="#a0a0a0" opacity="0.5"/>
<rect x="1803.2" y="398.29" width="6.0" height="1.5" fill="#a0a0a0" opacity="0.5"/>
<rect x="1810.4" y="398.29" width="4.0" height="1.5" fill="#a0a0a0" opacity="0.5"/>
<rect x="1815.6" y="398.29" width="12.0" height="1.5" fill="#a0a0a0" opacity="0.5"/>
<rect x="1828.8" y="398.29" width="6.0" height="1.5" fill="#a0a0a0" opacity="0.5"/>
<rect x="1836.0" y="398.29" width="10.0" height="1.5" fill="#a0a0a0" opacity="0.5"/>
<rect x="1847.2" y="398.29" width="3.0" height="1.5" fill="#a0a0a0" opacity="0.5"/>
<rect x="1851.4" y="398.29" width="4.5" height="1.5" fill="#a0a0a0" opacity="0.5"/>
<rect x="1828.2" y="398.29" width="4.1" height="1.5" fill="#ce9178" opacity="0.45"/>
<rect x="1798.0" y="400.35" width="4.0" height="1.5" fill="#a0a0a0" opacity="0.5"/>
<rect x="1803.2" y="400.35" width="6.0" height="1.5" fill="#a0a0a0" opacity="0.5"/>
<rect x="1810.4" y="400.35" width="7.0" height="1.5" fill="#a0a0a0" opacity="0.5"/>
<rect x="1818.6" y="400.35" width="10.0" height="1.5" fill="#a0a0a0" opacity="0.5"/>
<rect x="1829.8" y="400.35" width="6.0" height="1.5" fill="#a0a0a0" opacity="0.5"/>
<rect x="1837.0" y="400.35" width="4.0" height="1.5" fill="#a0a0a0" opacity="0.5"/>
<rect x="1842.2" y="400.35" width="8.0" height="1.5" fill="#a0a0a0" opacity="0.5"/>
<rect x="1851.4" y="400.35" width="1.0" height="1.5" fill="#a0a0a0" opacity="0.5"/>
<rect x="1831.2" y="400.35" width="4.1" height="1.5" fill="#ce9178" opacity="0.45"/>
<rect x="1798.0" y="402.41" width="5.0" height="1.5" fill="#a0a0a0" opacity="0.5"/>
<rect x="1804.2" y="402.41" width="6.0" height="1.5" fill="#a0a0a0" opacity="0.5"/>
<rect x="1811.4" y="402.41" width="10.0" height="1.5" fill="#a0a0a0" opacity="0.5"/>
<rect x="1822.6" y="402.41" width="4.0" height="1.5" fill="#a0a0a0" opacity="0.5"/>
<rect x="1827.8" y="402.41" width="4.0" height="1.5" fill="#a0a0a0" opacity="0.5"/>
<rect x="1833.0" y="402.41" width="4.0" height="1.5" fill="#a0a0a0" opacity="0.5"/>
<rect x="1838.2" y="402.41" width="5.0" height="1.5" fill="#a0a0a0" opacity="0.5"/>
<rect x="1844.4" y="402.41" width="4.0" height="1.5" fill="#a0a0a0" opacity="0.5"/>
<rect x="1849.6" y="402.41" width="3.9" height="1.5" fill="#a0a0a0" opacity="0.5"/>
<rect x="1825.3" y="402.41" width="4.1" height="1.5" fill="#ce9178" opacity="0.45"/>
<rect x="1798.0" y="404.47" width="3.0" height="1.5" fill="#a0a0a0" opacity="0.5"/>
<rect x="1802.2" y="404.47" width="7.0" height="1.5" fill="#a0a0a0" opacity="0.5"/>
<rect x="1810.4" y="404.47" width="6.0" height="1.5" fill="#a0a0a0" opacity="0.5"/>
<rect x="1817.6" y="404.47" width="7.0" height="1.5" fill="#a0a0a0" opacity="0.5"/>
<rect x="1825.8" y="404.47" width="3.0" height="1.5" fill="#a0a0a0" opacity="0.5"/>
<rect x="1830.0" y="404.47" width="8.0" height="1.5" fill="#a0a0a0" opacity="0.5"/>
<rect x="1839.2" y="404.47" width="5.0" height="1.5" fill="#a0a0a0" opacity="0.5"/>
<rect x="1845.4" y="404.47" width="1.1" height="1.5" fill="#a0a0a0" opacity="0.5"/>
<rect x="1828.2" y="404.47" width="4.1" height="1.5" fill="#ce9178" opacity="0.45"/>
<rect x="1798.0" y="406.53" width="12.0" height="1.5" fill="#a0a0a0" opacity="0.5"/>
<rect x="1811.2" y="406.53" width="12.0" height="1.5" fill="#a0a0a0" opacity="0.5"/>
<rect x="1824.4" y="406.53" width="10.0" height="1.5" fill="#a0a0a0" opacity="0.5"/>
<rect x="1835.6" y="406.53" width="5.0" height="1.5" fill="#a0a0a0" opacity="0.5"/>
<rect x="1841.8" y="406.53" width="8.0" height="1.5" fill="#a0a0a0" opacity="0.5"/>
<rect x="1851.0" y="406.53" width="0.2" height="1.5" fill="#a0a0a0" opacity="0.5"/>
<rect x="1831.2" y="406.53" width="4.1" height="1.5" fill="#ce9178" opacity="0.45"/>
<rect x="1798.0" y="408.59" width="3.0" height="1.5" fill="#a0a0a0" opacity="0.5"/>
<rect x="1802.2" y="408.59" width="7.0" height="1.5" fill="#a0a0a0" opacity="0.5"/>
<rect x="1810.4" y="408.59" width="3.0" height="1.5" fill="#a0a0a0" opacity="0.5"/>
<rect x="1814.6" y="408.59" width="12.0" height="1.5" fill="#a0a0a0" opacity="0.5"/>
<rect x="1827.8" y="408.59" width="8.0" height="1.5" fill="#a0a0a0" opacity="0.5"/>
<rect x="1837.0" y="408.59" width="7.0" height="1.5" fill="#a0a0a0" opacity="0.5"/>
<rect x="1845.2" y="408.59" width="8.0" height="1.5" fill="#a0a0a0" opacity="0.5"/>
<rect x="1854.4" y="408.59" width="6.2" height="1.5" fill="#a0a0a0" opacity="0.5"/>
<rect x="1825.3" y="408.59" width="4.1" height="1.5" fill="#ce9178" opacity="0.45"/>
<rect x="1798.0" y="410.65" width="5.0" height="1.5" fill="#a0a0a0" opacity="0.5"/>
<rect x="1804.2" y="410.65" width="12.0" height="1.5" fill="#a0a0a0" opacity="0.5"/>
<rect x="1817.4" y="410.65" width="6.0" height="1.5" fill="#a0a0a0" opacity="0.5"/>
<rect x="1824.6" y="410.65" width="6.0" height="1.5" fill="#a0a0a0" opacity="0.5"/>
<rect x="1831.8" y="410.65" width="7.0" height="1.5" fill="#a0a0a0" opacity="0.5"/>
<rect x="1840.0" y="410.65" width="3.0" height="1.5" fill="#a0a0a0" opacity="0.5"/>
<rect x="1844.2" y="410.65" width="5.8" height="1.5" fill="#a0a0a0" opacity="0.5"/>
<rect x="1828.2" y="410.65" width="4.1" height="1.5" fill="#ce9178" opacity="0.45"/>
<rect x="1798.0" y="412.71" width="8.0" height="1.5" fill="#a0a0a0" opacity="0.5"/>
<rect x="1807.2" y="412.71" width="8.0" height="1.5" fill="#a0a0a0" opacity="0.5"/>
<rect x="1816.4" y="412.71" width="12.0" height="1.5" fill="#a0a0a0" opacity="0.5"/>
<rect x="1829.6" y="412.71" width="3.0" height="1.5" fill="#a0a0a0" opacity="0.5"/>
<rect x="1833.8" y="412.71" width="5.0" height="1.5" fill="#a0a0a0" opacity="0.5"/>
<rect x="1840.0" y="412.71" width="6.0" height="1.5" fill="#a0a0a0" opacity="0.5"/>
<rect x="1847.2" y="412.71" width="6.0" height="1.5" fill="#a0a0a0" opacity="0.5"/>
<rect x="1854.4" y="412.71" width="1.5" height="1.5" fill="#a0a0a0" opacity="0.5"/>
<rect x="1831.2" y="412.71" width="4.1" height="1.5" fill="#ce9178" opacity="0.45"/>
<rect x="1798.0" y="414.76" width="3.0" height="1.5" fill="#a0a0a0" opacity="0.5"/>
<rect x="1802.2" y="414.76" width="4.0" height="1.5" fill="#a0a0a0" opacity="0.5"/>
<rect x="1807.4" y="414.76" width="7.0" height="1.5" fill="#a0a0a0" opacity="0.5"/>
<rect x="1815.6" y="414.76" width="8.0" height="1.5" fill="#a0a0a0" opacity="0.5"/>
<rect x="1824.8" y="414.76" width="7.0" height="1.5" fill="#a0a0a0" opacity="0.5"/>
<rect x="1833.0" y="414.76" width="10.0" height="1.5" fill="#a0a0a0" opacity="0.5"/>
<rect x="1844.2" y="414.76" width="5.0" height="1.5" fill="#a0a0a0" opacity="0.5"/>
<rect x="1850.4" y="414.76" width="5.5" height="1.5" fill="#a0a0a0" opacity="0.5"/>
<rect x="1825.3" y="414.76" width="4.1" height="1.5" fill="#ce9178" opacity="0.45"/>
<rect x="1798.0" y="416.82" width="12.0" height="1.5" fill="#a0a0a0" opacity="0.5"/>
<rect x="1811.2" y="416.82" width="10.0" height="1.5" fill="#a0a0a0" opacity="0.5"/>
<rect x="1822.4" y="416.82" width="4.0" height="1.5" fill="#a0a0a0" opacity="0.5"/>
<rect x="1827.6" y="416.82" width="5.0" height="1.5" fill="#a0a0a0" opacity="0.5"/>
<rect x="1833.8" y="416.82" width="6.0" height="1.5" fill="#a0a0a0" opacity="0.5"/>
<rect x="1841.0" y="416.82" width="7.0" height="1.5" fill="#a0a0a0" opacity="0.5"/>
<rect x="1849.2" y="416.82" width="4.0" height="1.5" fill="#a0a0a0" opacity="0.5"/>
<rect x="1854.4" y="416.82" width="6.0" height="1.5" fill="#a0a0a0" opacity="0.5"/>
<rect x="1861.6" y="416.82" width="2.5" height="1.5" fill="#a0a0a0" opacity="0.5"/>
<rect x="1828.2" y="416.82" width="4.1" height="1.5" fill="#ce9178" opacity="0.45"/>
<rect x="1798.0" y="418.88" width="5.0" height="1.5" fill="#a0a0a0" opacity="0.5"/>
<rect x="1804.2" y="418.88" width="6.0" height="1.5" fill="#a0a0a0" opacity="0.5"/>
<rect x="1811.4" y="418.88" width="7.0" height="1.5" fill="#a0a0a0" opacity="0.5"/>
<rect x="1819.6" y="418.88" width="7.0" height="1.5" fill="#a0a0a0" opacity="0.5"/>
<rect x="1827.8" y="418.88" width="8.0" height="1.5" fill="#a0a0a0" opacity="0.5"/>
<rect x="1837.0" y="418.88" width="4.0" height="1.5" fill="#a0a0a0" opacity="0.5"/>
<rect x="1842.2" y="418.88" width="4.3" height="1.5" fill="#a0a0a0" opacity="0.5"/>
<rect x="1831.2" y="418.88" width="4.1" height="1.5" fill="#ce9178" opacity="0.45"/>
<rect x="1798" y="423.46" width="101" height="2.1" fill="#2b5d92"/>
<rect x="1798.0" y="423.76" width="7.0" height="1.5" fill="#a0a0a0" opacity="0.5"/>
<rect x="1806.2" y="423.76" width="5.0" height="1.5" fill="#a0a0a0" opacity="0.5"/>
<rect x="1812.4" y="423.76" width="6.0" height="1.5" fill="#a0a0a0" opacity="0.5"/>
<rect x="1819.6" y="423.76" width="7.0" height="1.5" fill="#a0a0a0" opacity="0.5"/>
<rect x="1827.8" y="423.76" width="5.0" height="1.5" fill="#a0a0a0" opacity="0.5"/>
<rect x="1834.0" y="423.76" width="4.0" height="1.5" fill="#a0a0a0" opacity="0.5"/>
<rect x="1839.2" y="423.76" width="12.0" height="1.5" fill="#a0a0a0" opacity="0.5"/>
<rect x="1852.4" y="423.76" width="4.0" height="1.5" fill="#a0a0a0" opacity="0.5"/>
<rect x="1857.6" y="423.76" width="12.0" height="1.5" fill="#a0a0a0" opacity="0.5"/>
<rect x="1870.8" y="423.76" width="4.0" height="1.5" fill="#a0a0a0" opacity="0.5"/>
<rect x="1876.0" y="423.76" width="3.0" height="1.5" fill="#a0a0a0" opacity="0.5"/>
<rect x="1880.2" y="423.76" width="3.0" height="1.5" fill="#a0a0a0" opacity="0.5"/>
<rect x="1884.4" y="423.76" width="4.4" height="1.5" fill="#a0a0a0" opacity="0.5"/>
<rect x="1864.7" y="423.46" width="4.1" height="2.1" fill="#3794ff"/>
<rect x="1798.0" y="425.88" width="7.0" height="1.5" fill="#a0a0a0" opacity="0.5"/>
<rect x="1806.2" y="425.88" width="10.0" height="1.5" fill="#a0a0a0" opacity="0.5"/>
<rect x="1817.4" y="425.88" width="4.0" height="1.5" fill="#a0a0a0" opacity="0.5"/>
<rect x="1822.6" y="425.88" width="5.0" height="1.5" fill="#a0a0a0" opacity="0.5"/>
<rect x="1828.8" y="425.88" width="7.0" height="1.5" fill="#a0a0a0" opacity="0.5"/>
<rect x="1837.0" y="425.88" width="6.0" height="1.5" fill="#a0a0a0" opacity="0.5"/>
<rect x="1844.2" y="425.88" width="6.0" height="1.5" fill="#a0a0a0" opacity="0.5"/>
<rect x="1851.4" y="425.88" width="5.0" height="1.5" fill="#a0a0a0" opacity="0.5"/>
<rect x="1857.6" y="425.88" width="7.0" height="1.5" fill="#a0a0a0" opacity="0.5"/>
<rect x="1865.8" y="425.88" width="3.0" height="1.5" fill="#a0a0a0" opacity="0.5"/>
<rect x="1870.0" y="425.88" width="4.7" height="1.5" fill="#a0a0a0" opacity="0.5"/>
<rect x="1798" y="429.11" width="101" height="2.1" fill="#2b5d92"/>
<rect x="1798.0" y="429.41" width="5.0" height="1.5" fill="#a0a0a0" opacity="0.5"/>
<rect x="1804.2" y="429.41" width="3.0" height="1.5" fill="#a0a0a0" opacity="0.5"/>
<rect x="1808.4" y="429.41" width="12.0" height="1.5" fill="#a0a0a0" opacity="0.5"/>
<rect x="1821.6" y="429.41" width="10.0" height="1.5" fill="#a0a0a0" opacity="0.5"/>
<rect x="1832.8" y="429.41" width="3.0" height="1.5" fill="#a0a0a0" opacity="0.5"/>
<rect x="1837.0" y="429.41" width="12.0" height="1.5" fill="#a0a0a0" opacity="0.5"/>
<rect x="1850.2" y="429.41" width="3.0" height="1.5" fill="#a0a0a0" opacity="0.5"/>
<rect x="1854.4" y="429.41" width="5.0" height="1.5" fill="#a0a0a0" opacity="0.5"/>
<rect x="1860.6" y="429.41" width="4.0" height="1.5" fill="#a0a0a0" opacity="0.5"/>
<rect x="1865.8" y="429.41" width="8.0" height="1.5" fill="#a0a0a0" opacity="0.5"/>
<rect x="1875.0" y="429.41" width="8.0" height="1.5" fill="#a0a0a0" opacity="0.5"/>
<rect x="1884.2" y="429.41" width="8.2" height="1.5" fill="#a0a0a0" opacity="0.5"/>
<rect x="1865.9" y="429.11" width="12.4" height="2.1" fill="#3794ff"/>
<rect x="1798" y="431.46" width="101" height="2.1" fill="#2b5d92"/>
<rect x="1798.0" y="431.76" width="3.0" height="1.5" fill="#a0a0a0" opacity="0.5"/>
<rect x="1802.2" y="431.76" width="7.0" height="1.5" fill="#a0a0a0" opacity="0.5"/>
<rect x="1810.4" y="431.76" width="5.0" height="1.5" fill="#a0a0a0" opacity="0.5"/>
<rect x="1816.6" y="431.76" width="5.0" height="1.5" fill="#a0a0a0" opacity="0.5"/>
<rect x="1822.8" y="431.76" width="4.0" height="1.5" fill="#a0a0a0" opacity="0.5"/>
<rect x="1828.0" y="431.76" width="10.0" height="1.5" fill="#a0a0a0" opacity="0.5"/>
<rect x="1839.2" y="431.76" width="6.0" height="1.5" fill="#a0a0a0" opacity="0.5"/>
<rect x="1846.4" y="431.76" width="12.0" height="1.5" fill="#a0a0a0" opacity="0.5"/>
<rect x="1859.6" y="431.76" width="7.0" height="1.5" fill="#a0a0a0" opacity="0.5"/>
<rect x="1867.8" y="431.76" width="6.0" height="1.5" fill="#a0a0a0" opacity="0.5"/>
<rect x="1875.0" y="431.76" width="7.0" height="1.5" fill="#a0a0a0" opacity="0.5"/>
<rect x="1883.2" y="431.76" width="10.3" height="1.5" fill="#a0a0a0" opacity="0.5"/>
<rect x="1885.9" y="431.46" width="7.6" height="2.1" fill="#3794ff"/>
<rect x="1798.0" y="434.12" width="6.0" height="1.5" fill="#a0a0a0" opacity="0.5"/>
<rect x="1805.2" y="434.12" width="12.0" height="1.5" fill="#a0a0a0" opacity="0.5"/>
<rect x="1818.4" y="434.12" width="7.0" height="1.5" fill="#a0a0a0" opacity="0.5"/>
<rect x="1826.6" y="434.12" width="3.0" height="1.5" fill="#a0a0a0" opacity="0.5"/>
<rect x="1830.8" y="434.12" width="6.0" height="1.5" fill="#a0a0a0" opacity="0.5"/>
<rect x="1838.0" y="434.12" width="3.0" height="1.5" fill="#a0a0a0" opacity="0.5"/>
<rect x="1842.2" y="434.12" width="12.0" height="1.5" fill="#a0a0a0" opacity="0.5"/>
<rect x="1855.4" y="434.12" width="5.0" height="1.5" fill="#a0a0a0" opacity="0.5"/>
<rect x="1861.6" y="434.12" width="8.0" height="1.5" fill="#a0a0a0" opacity="0.5"/>
<rect x="1870.8" y="434.12" width="5.0" height="1.5" fill="#a0a0a0" opacity="0.5"/>
<rect x="1877.0" y="434.12" width="3.0" height="1.5" fill="#a0a0a0" opacity="0.5"/>
<rect x="1881.2" y="434.12" width="2.9" height="1.5" fill="#a0a0a0" opacity="0.5"/>
<rect x="1798.0" y="435.88" width="10.0" height="1.5" fill="#a0a0a0" opacity="0.5"/>
<rect x="1809.2" y="435.88" width="12.0" height="1.5" fill="#a0a0a0" opacity="0.5"/>
<rect x="1822.4" y="435.88" width="7.0" height="1.5" fill="#a0a0a0" opacity="0.5"/>
<rect x="1830.6" y="435.88" width="3.0" height="1.5" fill="#a0a0a0" opacity="0.5"/>
<rect x="1834.8" y="435.88" width="4.0" height="1.5" fill="#a0a0a0" opacity="0.5"/>
<rect x="1840.0" y="435.88" width="4.0" height="1.5" fill="#a0a0a0" opacity="0.5"/>
<rect x="1845.2" y="435.88" width="5.0" height="1.5" fill="#a0a0a0" opacity="0.5"/>
<rect x="1851.4" y="435.88" width="6.0" height="1.5" fill="#a0a0a0" opacity="0.5"/>
<rect x="1858.6" y="435.88" width="5.0" height="1.5" fill="#a0a0a0" opacity="0.5"/>
<rect x="1864.8" y="435.88" width="3.0" height="1.5" fill="#a0a0a0" opacity="0.5"/>
<rect x="1869.0" y="435.88" width="5.7" height="1.5" fill="#a0a0a0" opacity="0.5"/>
<rect x="1798.0" y="438.00" width="10.0" height="1.5" fill="#a0a0a0" opacity="0.5"/>
<rect x="1809.2" y="438.00" width="3.0" height="1.5" fill="#a0a0a0" opacity="0.5"/>
<rect x="1813.4" y="438.00" width="8.0" height="1.5" fill="#a0a0a0" opacity="0.5"/>
<rect x="1822.6" y="438.00" width="7.0" height="1.5" fill="#a0a0a0" opacity="0.5"/>
<rect x="1830.8" y="438.00" width="12.0" height="1.5" fill="#a0a0a0" opacity="0.5"/>
<rect x="1844.0" y="438.00" width="4.0" height="1.5" fill="#a0a0a0" opacity="0.5"/>
<rect x="1849.2" y="438.00" width="5.0" height="1.5" fill="#a0a0a0" opacity="0.5"/>
<rect x="1855.4" y="438.00" width="10.0" height="1.5" fill="#a0a0a0" opacity="0.5"/>
<rect x="1866.6" y="438.00" width="7.0" height="1.5" fill="#a0a0a0" opacity="0.5"/>
<rect x="1874.8" y="438.00" width="6.0" height="1.5" fill="#a0a0a0" opacity="0.5"/>
<rect x="1882.0" y="438.00" width="3.3" height="1.5" fill="#a0a0a0" opacity="0.5"/>
<rect x="1798.0" y="440.00" width="12.0" height="1.5" fill="#a0a0a0" opacity="0.5"/>
<rect x="1811.2" y="440.00" width="12.0" height="1.5" fill="#a0a0a0" opacity="0.5"/>
<rect x="1824.4" y="440.00" width="3.0" height="1.5" fill="#a0a0a0" opacity="0.5"/>
<rect x="1828.6" y="440.00" width="8.0" height="1.5" fill="#a0a0a0" opacity="0.5"/>
<rect x="1837.8" y="440.00" width="10.0" height="1.5" fill="#a0a0a0" opacity="0.5"/>
<rect x="1849.0" y="440.00" width="5.7" height="1.5" fill="#a0a0a0" opacity="0.5"/>
<rect x="1899" y="105" width="1" height="882" fill="#333333"/>
<rect x="1900" y="170.2" width="20" height="2.6" fill="#6b6b6b"/>
<rect x="1914" y="105.0" width="6" height="17.0" fill="#3794ff"/>
<rect x="1914" y="129.0" width="6" height="17.0" fill="#3794ff"/>
<rect x="1914" y="152.0" width="6" height="7.7" fill="#3794ff"/>
<rect x="1914" y="180.0" width="6" height="9.0" fill="#3794ff"/>
<rect x="1914" y="196.0" width="6" height="8.0" fill="#3794ff"/>
<rect x="1914" y="207.0" width="6" height="9.0" fill="#3794ff"/>
<rect x="1914" y="241.0" width="6" height="7.8" fill="#3794ff"/>
<rect x="1914" y="254.0" width="6" height="7.8" fill="#3794ff"/>
<rect x="1914" y="276.0" width="6" height="8.0" fill="#3794ff"/>
<rect x="1914" y="321.0" width="6" height="16.6" fill="#3794ff"/>
<rect x="1914" y="350.0" width="6" height="26.0" fill="#3794ff"/>
<rect x="1914" y="579.0" width="6" height="17.0" fill="#3794ff"/>
<rect x="1914" y="606.0" width="6" height="7.6" fill="#3794ff"/>
<rect x="1914" y="721.0" width="6" height="8.5" fill="#3794ff"/>
<rect x="1914" y="740.0" width="6" height="8.0" fill="#3794ff"/>
<rect x="1914" y="811.0" width="6" height="7.0" fill="#3794ff"/>
<rect x="1914" y="826.0" width="6" height="8.6" fill="#3794ff"/></svg>
<div class="r" style="left:377px;top:620.4px;width:124.8px;height:35.4px;background:#252526;border:1px solid #454545;border-radius:5px;box-shadow:0 2px 8px rgba(0,0,0,.36)"></div>
<svg class="r" style="left:430px;top:612px" width="18" height="10" viewBox="0 0 18 10"><path d="M2.4,9.4 L8.3,1.4 L14.2,9.4" fill="#252526" stroke="#454545" stroke-width="1"/><rect x="0" y="9" width="18" height="2.4" fill="#252526"/></svg>
<div class="t" style="left:389.00px;top:631.16px;font-size:18.00px;line-height:18.00px;color:#cccccc;letter-spacing:0.251px;word-spacing:-0.251px;">View Output</div>
</div></body></html>
